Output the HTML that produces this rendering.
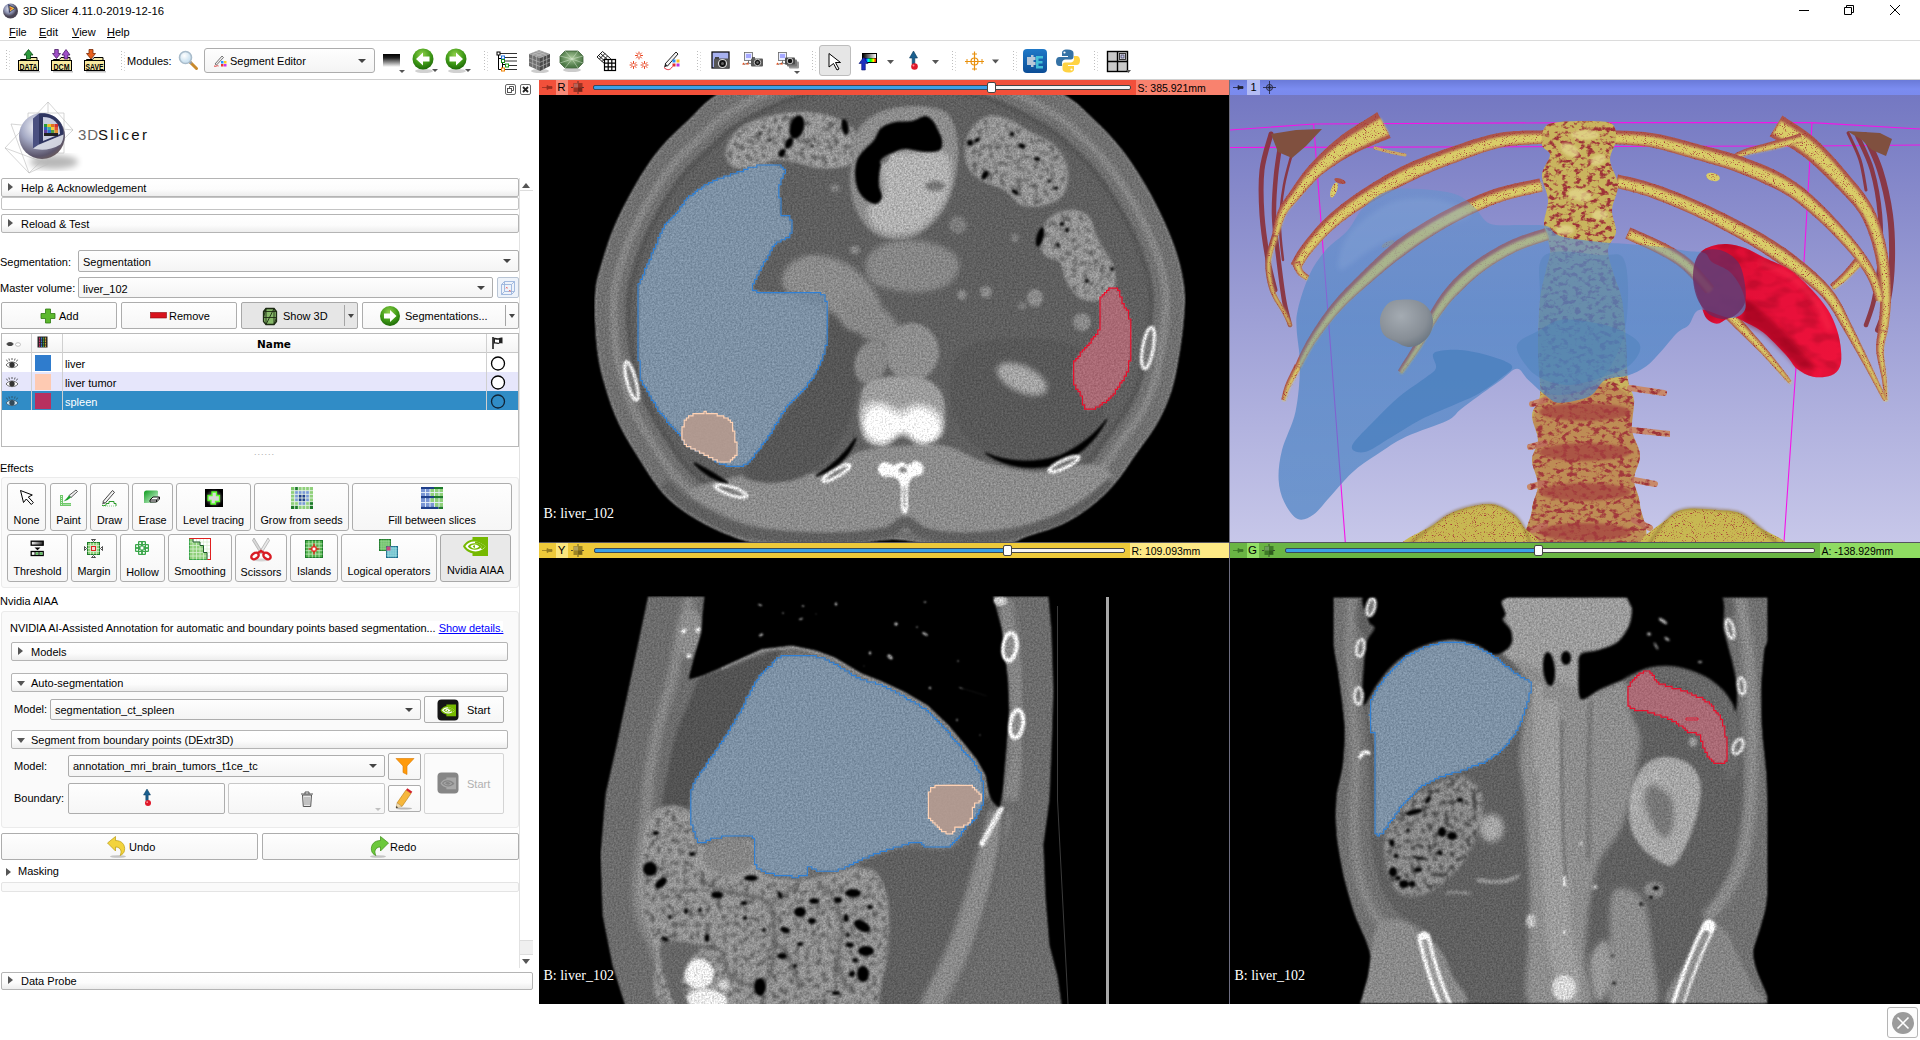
<!DOCTYPE html>
<html><head><meta charset="utf-8"><title>3D Slicer 4.11.0-2019-12-16</title>
<style>
*{box-sizing:border-box}
html,body{margin:0;padding:0;width:1920px;height:1040px;overflow:hidden;background:#fff}
body{font-family:"Liberation Sans",sans-serif;font-size:11px;color:#000;position:relative}
.a{position:absolute}
.t{position:absolute;white-space:nowrap;line-height:13px;height:13px}
.cb{position:absolute;border:1px solid #b4b4b4;border-radius:2px;background:linear-gradient(#fff 0%,#fcfcfc 60%,#ededed 100%)}
.cb span{position:absolute;left:19px;top:50%;margin-top:-7px;line-height:13px;white-space:nowrap}
.cb i{position:absolute;left:6px;top:50%;width:0;height:0;border-style:solid}
.cb i.r{margin-top:-5px;border-width:4px 0 4px 5px;border-color:transparent transparent transparent #555}
.cb i.d{margin-top:-2px;left:5px;border-width:5px 4px 0 4px;border-color:#555 transparent transparent transparent}
.btn{position:absolute;border:1px solid #adadad;border-radius:2px;background:linear-gradient(#fefefe,#f6f6f6)}
.btn.on{background:#e9e9e9;border-color:#a8a8a8}
.combo{position:absolute;border:1px solid #adadad;border-radius:2px;background:linear-gradient(#fefefe,#f4f4f4)}
.combo span{position:absolute;left:4px;top:50%;margin-top:-6px;line-height:13px;white-space:nowrap}
.combo i{position:absolute;right:7px;top:50%;margin-top:-2px;width:0;height:0;border-style:solid;border-width:4px 4px 0 4px;border-color:#444 transparent transparent transparent}
.lbl{position:absolute;white-space:nowrap;line-height:13px;text-align:center;font-size:10.8px}
#toolbar .t,.d1{margin-top:1px}
#left .cb span,#left .combo span,#toolbar .combo span{margin-top:-6px}
#left .combo span{margin-top:-5px}
.grip{position:absolute;width:3px;height:22px;background-image:radial-gradient(circle,#bdbdbd 0.6px,transparent 0.9px);background-size:3px 3px}
svg{position:absolute;overflow:hidden}
</style></head>
<body>
<!-- TITLEBAR -->
<div id="titlebar" class="a" style="left:0;top:0;width:1920px;height:22px">
<svg style="left:2px;top:2px" width="17" height="17" viewBox="0 0 17 17"><defs><radialGradient id="lg1" cx="40%" cy="35%"><stop offset="0" stop-color="#e8eaf2"/><stop offset=".6" stop-color="#8d93b3"/><stop offset="1" stop-color="#4a4555"/></radialGradient></defs><circle cx="8.5" cy="9" r="7.5" fill="url(#lg1)"/><path d="M6 2 L14 6 L7 11 Z" fill="#3a3f66"/><path d="M7.5 4 L12.5 6.2 L8 9.5 Z" fill="#f0c040"/><path d="M8 5.5 L10 6.2 L8.2 8 Z" fill="#d04030"/></svg>
<div class="t" style="left:23px;top:5px;font-size:11.3px">3D Slicer 4.11.0-2019-12-16</div>
<svg style="left:1795px;top:0" width="120" height="22" viewBox="0 0 120 22" fill="none" stroke="#000" stroke-width="1"><path d="M4 10.5h10"/><path d="M49.500 7.500h7v7h-7z M51.500 7.500v-2h7v7h-2"/><path d="M95 5l10 10M105 5l-10 10"/></svg>
</div>
<!-- MENUBAR -->
<div id="menubar" class="a" style="left:0;top:22px;width:1920px;height:18px">
<div class="t" style="left:9px;top:4px"><u>F</u>ile</div>
<div class="t" style="left:39px;top:4px"><u>E</u>dit</div>
<div class="t" style="left:72px;top:4px"><u>V</u>iew</div>
<div class="t" style="left:107px;top:4px"><u>H</u>elp</div>
</div>
<div class="a" style="left:0;top:40px;width:1920px;height:1px;background:#dcdcdc"></div>
<!-- TOOLBAR -->
<div id="toolbar" class="a" style="left:0;top:41px;width:1920px;height:38px">
<div class="grip" style="left:5px;top:8px"></div><div class="grip" style="left:8px;top:9px;opacity:.6"></div>
<!-- DATA -->
<svg style="left:17px;top:6px" width="24" height="26" viewBox="0 0 24 26"><path d="M3.500 12.500h6l1.500-2h9v3h-16.500z" fill="#f5e9a8" stroke="#000"/><rect x="1.500" y="13.500" width="20" height="10" fill="#f7e9a0" stroke="#000"/><rect x="3" y="24" width="20" height="1.500" fill="#999" opacity=".6"/><path d="M7 8l4.500-5.500 4.500 5.500h-2.500v4h-4v-4z" fill="#2c9a3c" stroke="#0a4a15" stroke-width=".8"/><text x="11.500" y="22.500" font-family="Liberation Sans,sans-serif" font-size="9.500" font-weight="bold" text-anchor="middle" textLength="18" lengthAdjust="spacingAndGlyphs">DATA</text></svg>
<!-- DCM -->
<svg style="left:50px;top:6px" width="24" height="26" viewBox="0 0 24 26"><path d="M3.500 12.500h6l1.500-2h9v3h-16.500z" fill="#f5e9a8" stroke="#000"/><rect x="1.500" y="13.500" width="20" height="10" fill="#f7e9a0" stroke="#000"/><rect x="3" y="24" width="20" height="1.500" fill="#999" opacity=".6"/><path d="M2.500 6.500l4 5 4-5h-2.200v-4h-3.600v4z" fill="#a050c8" stroke="#4a1a66" stroke-width=".8"/><path d="M12 8l4-5.500 4 5.500h-2.200v4h-3.600v-4z" fill="#a050c8" stroke="#4a1a66" stroke-width=".8"/><text x="11.500" y="22.500" font-family="Liberation Sans,sans-serif" font-size="9.500" font-weight="bold" text-anchor="middle" textLength="16" lengthAdjust="spacingAndGlyphs">DCM</text></svg>
<!-- SAVE -->
<svg style="left:83px;top:6px" width="24" height="26" viewBox="0 0 24 26"><path d="M3.500 12.500h6l1.500-2h9v3h-16.500z" fill="#f5e9a8" stroke="#000"/><rect x="1.500" y="13.500" width="20" height="10" fill="#f7e9a0" stroke="#000"/><rect x="3" y="24" width="20" height="1.500" fill="#999" opacity=".6"/><path d="M3.500 6.500l4.500 5.500 4.500-5.500h-2.500v-4h-4v4z" fill="#e8601c" stroke="#7a2a05" stroke-width=".8"/><text x="11.500" y="22.500" font-family="Liberation Sans,sans-serif" font-size="9.500" font-weight="bold" text-anchor="middle" textLength="18" lengthAdjust="spacingAndGlyphs">SAVE</text></svg>
<div class="grip" style="left:120px;top:9px"></div><div class="grip" style="left:123px;top:10px;opacity:.6"></div>
<div class="t" style="left:127px;top:13px">Modules:</div>
<!-- magnifier -->
<svg style="left:177px;top:8px" width="24" height="24" viewBox="0 0 24 24"><defs><radialGradient id="mg" cx="40%" cy="35%"><stop offset="0" stop-color="#fff"/><stop offset="1" stop-color="#cfe4f2"/></radialGradient></defs><path d="M12.500 12.500l7 7" stroke="#c98a2c" stroke-width="3" stroke-linecap="round"/><path d="M12 12l2.500 2.500" stroke="#999" stroke-width="2.500"/><circle cx="8.500" cy="8.500" r="6" fill="url(#mg)" stroke="#a9bccb" stroke-width="1.600"/></svg>
<!-- module combo -->
<div class="combo" style="left:204px;top:7px;width:171px;height:25px;border-radius:3px"><svg style="left:8px;top:5px" width="14" height="14" viewBox="0 0 14 14"><path d="M2 10l7-8 1.500 1.500-7 7.500z" fill="#eee" stroke="#555" stroke-width=".8"/><path d="M1 12c2 1 3-1 4.500 0" stroke="#d33" fill="none"/><rect x="8" y="7" width="2.500" height="2.500" fill="#29f"/><rect x="11" y="7" width="2.500" height="2.500" fill="#fc2"/><rect x="8" y="10" width="2.500" height="2.500" fill="#e33"/><rect x="11" y="10" width="2.500" height="2.500" fill="#c3e"/></svg><span style="left:25px">Segment Editor</span><i style="right:8px"></i></div>
<!-- gradient icon -->
<svg style="left:382px;top:12px" width="26" height="22" viewBox="0 0 26 22"><defs><linearGradient id="gg" x1="0" y1="0" x2="0" y2="1"><stop offset="0" stop-color="#000"/><stop offset=".3" stop-color="#222"/><stop offset="1" stop-color="#fff"/></linearGradient></defs><rect x="1" y="1" width="17" height="13" fill="url(#gg)"/><path d="M17 17h6l-3 3z" fill="#555"/></svg>
<!-- back / fwd -->
<svg style="left:411px;top:6px" width="70" height="28" viewBox="0 0 70 28"><defs><radialGradient id="gb" cx="45%" cy="30%" r="70%"><stop offset="0" stop-color="#8fd04a"/><stop offset=".6" stop-color="#3f9a17"/><stop offset="1" stop-color="#1f6a08"/></radialGradient></defs><ellipse cx="13" cy="24" rx="9" ry="2" fill="#000" opacity=".18"/><circle cx="12" cy="12" r="10.500" fill="url(#gb)"/><path d="M5 12l7-6.500v4h6.500v5h-6.500v4z" fill="#fff"/><path d="M21 22h6l-3 3z" fill="#555"/><ellipse cx="46" cy="24" rx="9" ry="2" fill="#000" opacity=".18"/><circle cx="45" cy="12" r="10.500" fill="url(#gb)"/><path d="M52 12l-7-6.500v4h-6.500v5h6.500v4z" fill="#fff"/><path d="M54 22h6l-3 3z" fill="#555"/></svg>
<div class="grip" style="left:483px;top:9px"></div><div class="grip" style="left:486px;top:10px;opacity:.6"></div>
<!-- tree -->
<svg style="left:496px;top:9px" width="22" height="22" viewBox="0 0 22 22" fill="none"><path d="M2.500 4v15.500h3M6.500 10v8M2.500 8.500h4M7 14.500h3" stroke="#000" stroke-width="1"/><path d="M4 3.500h17M9 7.500h12M9 11h12M13 15.500h8M9 19.500h12" stroke="#333" stroke-width="1"/><rect x="1" y="2" width="3" height="3" fill="#fff" stroke="#000"/><rect x="5.500" y="6" width="3" height="3" fill="#fff" stroke="#1a6fe0"/><rect x="5.500" y="9.500" width="3" height="3" fill="#fff" stroke="#1a8a1a"/><rect x="9.500" y="14" width="3" height="3" fill="#fff" stroke="#1a9a1a"/><rect x="5.500" y="18" width="3" height="3" fill="#fff" stroke="#f08000"/></svg>
<!-- cube -->
<svg style="left:527px;top:7px" width="26" height="26" viewBox="0 0 26 26"><defs><linearGradient id="cg1" x1="0" y1="0" x2="1" y2="1"><stop offset="0" stop-color="#999"/><stop offset="1" stop-color="#444"/></linearGradient></defs><ellipse cx="13" cy="23" rx="9" ry="2" fill="#000" opacity=".2"/><path d="M2 6l10-4 11 4-10 4z" fill="#9a9a9a"/><path d="M2 6l11 4v13l-11-5z" fill="#6e6e6e"/><path d="M13 10l10-4v12l-10 5z" fill="#4a4a4a"/><path d="M5.500 4.600l10.500 4M9 3.200l10.500 4M5.700 7.400v12.200M9.400 8.700v12.700M2 10l11 4.300M2 14l11 4.600M16.300 8.700v12.700M19.700 7.400v12.200M13 14.300l10-4.300M13 18.600l10-4.600M8.500 8.400l10-4M5 7l10-4" stroke="#c8c8c8" stroke-width=".7" opacity=".8"/></svg>
<!-- green model -->
<svg style="left:559px;top:8px" width="26" height="24" viewBox="0 0 26 24"><defs><radialGradient id="gm" cx="50%" cy="40%"><stop offset="0" stop-color="#a9c99a"/><stop offset="1" stop-color="#4f7a48"/></radialGradient></defs><ellipse cx="13" cy="21" rx="9" ry="2" fill="#000" opacity=".2"/><path d="M6 2h13l5 5v7l-5 5h-13l-5-5v-7z" fill="url(#gm)" stroke="#3d5f38" stroke-width=".8"/><path d="M6 2l7 8 6-8M1 7l12 3 11-3M1 14l12-4 11 4M6 19l7-9 6 9" stroke="#dfeeda" stroke-width=".6" fill="none" opacity=".8"/></svg>
<!-- transform grid -->
<svg style="left:595px;top:9px" width="22" height="22" viewBox="0 0 22 22" fill="none"><g stroke="#000" stroke-width=".9"><path d="M7.500 1.500l8 7-5.500 5.500-8-7z M5.500 3.500l8 7M3.500 5.500l8 7M4.500 9l5.500-5.500M7 11.500l5.500-5.500"/></g><rect x="9.500" y="9.500" width="11" height="11" fill="#fff" stroke="#000" stroke-width="1.200"/><path d="M13.200 9.500v11M16.800 9.500v11M9.500 13.200h11M9.500 16.800h11" stroke="#000" stroke-width="1.200"/></svg>
<!-- red stars -->
<svg style="left:628px;top:9px" width="22" height="22" viewBox="0 0 22 22"><g stroke="#e8401c" stroke-width="1" stroke-linecap="round"><g id="st"><path d="M11 2v7M7.500 5.500h7M8.500 3l5 5M13.500 3l-5 5"/></g><use href="#st" x="-5.500" y="9.500"/><use href="#st" x="5.500" y="9.500"/></g><circle cx="11" cy="5.500" r="1.200" fill="#fff"/><circle cx="5.500" cy="15" r="1.200" fill="#fff"/><circle cx="16.500" cy="15" r="1.200" fill="#fff"/></svg>
<!-- seg editor pen -->
<svg style="left:662px;top:9px" width="22" height="22" viewBox="0 0 22 22"><path d="M3 14l11-12 2 2-10.500 12z" fill="#f4f4f4" stroke="#222" stroke-width="1"/><path d="M3 14l2.500 2-3.500 1.500z" fill="#222"/><path d="M2 17.500c3 3 6 3 8.500-1" stroke="#e02030" fill="none" stroke-width="1"/><rect x="10.500" y="9.500" width="3" height="3" fill="#2a8cf0"/><rect x="14.500" y="9.500" width="3" height="3" fill="#f8c020"/><rect x="10.500" y="13.500" width="3" height="3" fill="#e03030"/><rect x="14.500" y="13.500" width="3" height="3" fill="#c030e0"/></svg>
<div class="grip" style="left:696px;top:9px"></div><div class="grip" style="left:699px;top:10px;opacity:.6"></div>
<!-- camera 1 -->
<svg style="left:711px;top:10px" width="20" height="20" viewBox="0 0 20 20"><rect x="1" y="1" width="17" height="16" fill="#a8b2f0" stroke="#000" stroke-width="1.200"/><rect x="3" y="7.500" width="15" height="9.500" rx="1" fill="#555"/><rect x="4" y="6" width="4" height="2" fill="#444"/><circle cx="11.500" cy="12.500" r="4" fill="#111" stroke="#ddd" stroke-width="1.200"/><circle cx="11.500" cy="12.500" r="1.500" fill="#666"/></svg>
<!-- camera 2 -->
<svg style="left:741px;top:10px" width="24" height="20" viewBox="0 0 24 20"><rect x="3.500" y="1.500" width="8" height="8" fill="#e8ecff" stroke="#666" stroke-width=".8"/><path d="M5 4h5M5 6h5" stroke="#44f" stroke-width=".8"/><path d="M7.500 9.500v3M7.500 12l-5 1.500M7.500 12l5 1.500" stroke="#555" stroke-width=".8" fill="none"/><path d="M1 13.500h3l-1.500-2zM5 13.500h3l-1.500-2z" fill="#e8501c"/><rect x="10" y="7.500" width="12" height="8" rx="1" fill="#5a5a5a"/><rect x="11" y="6.200" width="3" height="1.500" fill="#444"/><circle cx="16.500" cy="11.500" r="3.200" fill="#111" stroke="#ccc" stroke-width="1"/><circle cx="16.500" cy="11.500" r="1.200" fill="#777"/></svg>
<!-- camera 3 -->
<svg style="left:775px;top:10px" width="28" height="24" viewBox="0 0 28 24"><rect x="3.500" y="1.500" width="8" height="8" fill="#e8ecff" stroke="#666" stroke-width=".8"/><path d="M5 4h5M5 6h5" stroke="#44f" stroke-width=".8"/><path d="M7.500 9.500v3M7.500 12l-5 1.500M7.500 12l5 1.500" stroke="#555" stroke-width=".8" fill="none"/><path d="M1 13.500h3l-1.500-2zM5 13.500h3l-1.500-2z" fill="#e8501c"/><rect x="14" y="10.500" width="10" height="7" rx="1" fill="#999"/><rect x="12" y="8.500" width="10" height="7" rx="1" fill="#777"/><rect x="10" y="6.500" width="10" height="7" rx="1" fill="#4a4a4a"/><circle cx="15" cy="10" r="2.800" fill="#111" stroke="#ccc" stroke-width="1"/><path d="M19 20h6l-3 3z" fill="#555"/></svg>
<div class="grip" style="left:811px;top:9px"></div><div class="grip" style="left:814px;top:10px;opacity:.6"></div>
<!-- pointer btn -->
<div class="btn on" style="left:819px;top:4px;width:32px;height:31px;border-radius:3px;background:#e6e6e6;border-color:#bdbdbd"><svg style="left:7px;top:6px" width="18" height="20" viewBox="0 0 18 20"><path d="M2 1.500l11.500 9h-5l3.500 6.500-2 1-3.500-6.500-4.500 3.500z" fill="#fff" stroke="#000" stroke-width="1" stroke-linejoin="round"/></svg></div>
<!-- window level -->
<svg style="left:858px;top:10px" width="44" height="22" viewBox="0 0 44 22"><defs><linearGradient id="rb" x1="0" x2="1"><stop offset="0" stop-color="#f0f"/><stop offset=".2" stop-color="#00f"/><stop offset=".4" stop-color="#0ff"/><stop offset=".6" stop-color="#0f0"/><stop offset=".8" stop-color="#ff0"/><stop offset="1" stop-color="#f00"/></linearGradient><linearGradient id="bw" x1="0" x2="1"><stop offset="0" stop-color="#000"/><stop offset="1" stop-color="#fff"/></linearGradient></defs><rect x="4" y="2" width="15" height="10" fill="#000"/><rect x="5" y="3" width="13" height="4" fill="url(#bw)"/><rect x="5" y="7.500" width="13" height="3.500" fill="url(#rb)"/><path d="M5.500 6.500l4.500 6h-2.700v6.500h-3.600v-6.500h-2.700z" fill="#1c2fc0" stroke="#0a1470" stroke-width=".6"/><path d="M29 9h7l-3.500 4z" fill="#555"/></svg>
<!-- fiducial -->
<svg style="left:906px;top:9px" width="40" height="24" viewBox="0 0 40 24"><path d="M7.500 1l4 7h-2.700v6h-2.600v-6h-2.700z" fill="#1a5f8f" stroke="#0a3a5a" stroke-width=".6"/><circle cx="8.500" cy="16.500" r="3.300" fill="#e0182a"/><circle cx="7.500" cy="15.500" r="1" fill="#ff8a90"/><path d="M26 10h7l-3.500 4z" fill="#555"/></svg>
<div class="grip" style="left:951px;top:9px"></div><div class="grip" style="left:954px;top:10px;opacity:.6"></div>
<!-- crosshair -->
<svg style="left:963px;top:9px" width="44" height="24" viewBox="0 0 44 24" fill="none"><path d="M11.500 1.500v19M2 11.500h19" stroke="#e8900c" stroke-width="1.200"/><circle cx="11.500" cy="11.500" r="3.500" stroke="#e8900c" stroke-width="1.200"/><path d="M9 4h5M9 19h5M4 9v5M19 9v5" stroke="#e8900c" stroke-width="1"/><path d="M29 9.500h7l-3.500 4z" fill="#555"/></svg>
<div class="grip" style="left:1012px;top:9px"></div><div class="grip" style="left:1015px;top:10px;opacity:.6"></div>
<!-- ext manager -->
<svg style="left:1022px;top:7px" width="26" height="26" viewBox="0 0 26 26"><defs><linearGradient id="em" x1="0" y1="0" x2="0" y2="1"><stop offset="0" stop-color="#1f79c8"/><stop offset="1" stop-color="#0c4d96"/></linearGradient></defs><rect x="1" y="1" width="24" height="24" rx="4" fill="url(#em)"/><path d="M5 9h4v-2h2.500v2h2v3h-2v2h2v3h-2v2h-2.500v-2h-4z" fill="#b8c8d8"/><path d="M14 8h7v2.500h-4.500v2.500h4v2.500h-4v2.500h4.500v2.500h-7z" fill="#43c0d8"/></svg>
<!-- python -->
<svg style="left:1055px;top:7px" width="26" height="26" viewBox="0 0 26 26"><path d="M12.500 1.500c-5 0-5.500 2-5.500 3.500v3h6v1h-8.500c-2.500 0-3.500 2-3.500 4.500s1 4.500 3.500 4.500h2.500v-3c0-2 1.500-3.500 3.500-3.500h5.500c1.500 0 2.500-1 2.500-2.500v-4c0-2-2-3.500-6-3.500z" fill="#3572a5"/><circle cx="9.500" cy="4.500" r="1.100" fill="#fff"/><path d="M13.500 24.500c5 0 5.500-2 5.500-3.500v-3h-6v-1h8.500c2.500 0 3.500-2 3.500-4.500s-1-4.500-3.500-4.500h-2.500v3c0 2-1.500 3.500-3.500 3.500h-5.500c-1.500 0-2.500 1-2.500 2.500v4c0 2 2 3.500 6 3.500z" fill="#ffd343"/><circle cx="16.500" cy="21.500" r="1.100" fill="#fff"/></svg>
<div class="grip" style="left:1093px;top:9px"></div><div class="grip" style="left:1096px;top:10px;opacity:.6"></div>
<!-- layout -->
<svg style="left:1106px;top:9px" width="26" height="24" viewBox="0 0 26 24"><rect x="1.500" y="1.500" width="20" height="20" fill="#c9c9c9" stroke="#000" stroke-width="1.400"/><path d="M11.500 1.500v20M1.500 11.500h20" stroke="#000" stroke-width="1.400"/><rect x="13.500" y="3.500" width="6" height="6" fill="#dcdcf4" stroke="#222" stroke-width=".9"/><rect x="15" y="5" width="3" height="3" fill="#c0c0f0" stroke="#222" stroke-width=".6"/><path d="M20 20h5l-2.500 3z" fill="#555"/></svg>
</div>
<div class="a" style="left:0;top:79px;width:1920px;height:1px;background:#d0d0d0"></div>
<!-- LEFTPANEL -->
<div id="left" class="a" style="left:0;top:80px;width:539px;height:960px">
<svg style="left:0;top:0" width="0" height="0"><defs>
<g id="nv"><rect x="9.500" y="0" width="15.500" height="19" fill="#76b900"/><path d="M0 9.200c2.500-4.500 7-7 12-6.700v13.800c-5 .2-9.500-2.300-12-7.100z" fill="#76b900"/><path d="M2.300 9.300c2-3.200 5.500-5 9.700-4.800 4.500.3 8 2.300 10.500 5.300-2.300 2.800-5.500 4.600-10 4.600-4.200 0-8-1.800-10.200-5.100z" fill="#fff"/><path d="M4.800 9.400c1.500-2.200 4-3.300 7.200-3.100 3 .2 5 1.500 7 3.400-2 2-4.200 3-7 3-3 0-5.500-1.200-7.200-3.300z" fill="#76b900"/><path d="M7.300 9.300c1-1.300 2.700-2 4.700-1.900 1.800.2 3 .9 4.200 2.200-1.200 1.300-2.500 2-4.200 2-2 0-3.600-.8-4.700-2.300z" fill="#fff"/><path d="M9.800 9.300c.6-.7 1.400-1 2.200-1v2.700c-.9-.1-1.700-.7-2.200-1.700z" fill="#76b900"/><path d="M12 4.500v1.800c3 .2 5 1.500 7 3.400l-1.500 1.400 1.500 1.500 3.500-2.800c-2.500-3-6-5-10.500-5.300z" fill="#76b900"/></g>
<g id="nvg"><rect x="9.500" y="0" width="15.500" height="19" fill="#a8a8a8"/><path d="M0 9.200c2.500-4.500 7-7 12-6.700v13.800c-5 .2-9.500-2.300-12-7.100z" fill="#a8a8a8"/><path d="M2.300 9.300c2-3.200 5.500-5 9.700-4.800 4.500.3 8 2.300 10.500 5.300-2.300 2.800-5.500 4.600-10 4.600-4.200 0-8-1.800-10.200-5.100z" fill="#868686"/><path d="M4.800 9.400c1.500-2.200 4-3.300 7.200-3.100 3 .2 5 1.500 7 3.400-2 2-4.200 3-7 3-3 0-5.500-1.200-7.200-3.300z" fill="#a8a8a8"/><path d="M7.300 9.300c1-1.300 2.700-2 4.700-1.900 1.800.2 3 .9 4.200 2.200-1.200 1.300-2.500 2-4.200 2-2 0-3.600-.8-4.700-2.300z" fill="#868686"/></g>
</defs></svg>
<!-- coordinates relative to left panel (top:80) -->
<!-- dock buttons -->
<svg style="left:505px;top:4px" width="28" height="12" viewBox="0 0 28 12" fill="none" stroke="#444"><rect x=".5" y=".5" width="10" height="10" rx="1.500" stroke="#666"/><rect x="2.500" y="4.500" width="4" height="4" stroke-width=".9"/><path d="M4.500 4.500v-2h4v4h-2" stroke-width=".9"/><rect x="15.500" y=".5" width="10" height="10" rx="1.500" stroke="#666"/><path d="M18 3l5 5M23 3l-5 5" stroke="#222" stroke-width="1.800"/></svg>
<!-- logo -->
<svg style="left:2px;top:18px" width="160" height="80" viewBox="0 0 160 80"><defs><radialGradient id="sp" cx="38%" cy="30%" r="75%"><stop offset="0" stop-color="#f4f5fa"/><stop offset=".45" stop-color="#a4a9c4"/><stop offset=".85" stop-color="#5c566c"/><stop offset="1" stop-color="#6a5a5a"/></radialGradient><filter id="bl3"><feGaussianBlur stdDeviation="3"/></filter></defs>
<ellipse cx="52" cy="64" rx="24" ry="7" fill="#000" opacity=".28" filter="url(#bl3)"/>
<g fill="none" stroke="#bbb" stroke-width=".6"><path d="M3 50l43-46v62l-19 9z"/><path d="M9 26l62 6-44 43z"/><path d="M26 15h36v40h-36z"/><path d="M46 4l25 28M3 50l43 16"/></g>
<circle cx="40" cy="38" r="23" fill="url(#sp)"/>
<path d="M37 15.500c14-2 25 8 24.500 21l-25 11z" fill="#2f3560"/>
<path d="M41 19c10 0 17 6 17 17l-17 7z" fill="#c9cde0"/>
<path d="M37 15.500l-6 5v30l6-4z" fill="#4a5080"/>
<g><rect x="42" y="26" width="14" height="12" fill="#fff"/><rect x="42" y="26" width="3.500" height="3" fill="#2a9a3a"/><rect x="45.500" y="26" width="3.500" height="3" fill="#f0c020"/><rect x="49" y="26" width="3.500" height="3" fill="#e07020"/><rect x="52.500" y="26" width="3.500" height="3" fill="#d03030"/><rect x="42" y="29" width="3.500" height="3" fill="#2a60c0"/><rect x="45.500" y="29" width="3.500" height="3" fill="#40b0a0"/><rect x="49" y="29" width="3.500" height="3" fill="#f0d040"/><rect x="52.500" y="29" width="3.500" height="3" fill="#e05030"/><rect x="42" y="32" width="3.500" height="3" fill="#6040a0"/><rect x="45.500" y="32" width="3.500" height="3" fill="#3070d0"/><rect x="49" y="32" width="3.500" height="3" fill="#50a040"/><rect x="52.500" y="32" width="3.500" height="3" fill="#e09030"/><rect x="42" y="35" width="14" height="3" fill="#222"/></g>
<path d="M31 50.500l6-4 24.500-10c0 4-1 7-3 10-10 6-20 6-27.500 4z" fill="#dcdfe8" opacity=".9"/>
<text x="76" y="42" font-family="Liberation Sans,sans-serif" font-size="15" fill="#666" letter-spacing="1">3D</text>
<text x="96" y="42" font-family="Liberation Sans,sans-serif" font-size="15" fill="#111" letter-spacing="2.300">Slicer</text>
</svg>
<!-- collapsibles -->
<div class="cb" style="left:1px;top:98px;width:518px;height:19px"><i class="r"></i><span>Help &amp; Acknowledgement</span></div>
<div class="cb" style="left:1px;top:117px;width:518px;height:13px;background:#fff;border-color:#c4c4c4"></div>
<div class="cb" style="left:1px;top:134px;width:518px;height:19px"><i class="r"></i><span>Reload &amp; Test</span></div>
<!-- scrollbar -->
<div class="a" style="left:519px;top:98px;width:1px;height:790px;background:#e2e2e2"></div>
<div class="a" style="left:520px;top:98px;width:13px;height:790px;background:#fff"></div>
<div class="a" style="left:522px;top:103px;width:0;height:0;border-style:solid;border-width:0 4px 5px 4px;border-color:transparent transparent #555 transparent"></div>
<div class="a" style="left:520px;top:110px;width:13px;height:1px;background:#ddd"></div>
<div class="a" style="left:520px;top:860px;width:13px;height:15px;background:#f0f0f0;border-top:1px solid #ddd;border-bottom:1px solid #ddd"></div>
<div class="a" style="left:522px;top:879px;width:0;height:0;border-style:solid;border-width:5px 4px 0 4px;border-color:#555 transparent transparent transparent"></div>
<!-- Segmentation rows -->
<div class="t d1" style="left:0;top:175px">Segmentation:</div>
<div class="combo" style="left:78px;top:170px;width:441px;height:22px"><span>Segmentation</span><i></i></div>
<div class="t d1" style="left:0;top:201px">Master volume:</div>
<div class="combo" style="left:78px;top:197px;width:415px;height:21px"><span>liver_102</span><i></i></div>
<div class="btn" style="left:497px;top:197px;width:22px;height:21px;background:#eef3fa;border-color:#b8c4d4"><svg style="left:2px;top:2px" width="16" height="16" viewBox="0 0 16 16" fill="none"><path d="M4.500 1.500h10v10h-10zM1.500 4.500h10v10h-10zM1.500 4.500l3-3M11.500 4.500l3-3M11.500 14.500l3-3M1.500 14.500l3-3" stroke="#9ab4dc" stroke-width=".9"/><path d="M6 7l1.500 1.500M7.500 7l-1.500 1.500M9 10l1.500 1.500M10.500 10l-1.500 1.500" stroke="#e66" stroke-width=".8"/></svg></div>
<!-- buttons row -->
<div class="btn" style="left:1px;top:222px;width:116px;height:27px"><svg style="left:38px;top:5px" width="16" height="16" viewBox="0 0 16 16"><path d="M5.500 1h5v4.500h4.500v5h-4.500v4.500h-5v-4.500h-4.500v-5h4.500z" fill="#5cb82e" stroke="#2f7a12" stroke-width=".8"/></svg><div class="t" style="left:57px;top:7px">Add</div></div>
<div class="btn" style="left:121px;top:222px;width:116px;height:27px"><svg style="left:28px;top:9px" width="18" height="8" viewBox="0 0 18 8"><rect x=".5" y=".5" width="16" height="5.500" fill="#d8121c" stroke="#8a0a10" stroke-width=".6"/></svg><div class="t" style="left:47px;top:7px">Remove</div></div>
<div class="btn on" style="left:241px;top:222px;width:117px;height:27px;background:#e6e6e6"><svg style="left:20px;top:4px" width="16" height="19" viewBox="0 0 16 19"><path d="M4 1.500h8l2.500 3v10l-2.500 3h-8l-2.500-3v-10z" fill="#86b868" stroke="#1d2a14" stroke-width="1.300"/><path d="M4 1.500l-2.500 9h13l-2.500 7M12 1.500l-8 16M4 1.500v16M12 1.500v16M1.500 4.500h13" stroke="#1d2a14" stroke-width=".9" fill="none"/></svg><div class="t" style="left:41px;top:7px">Show 3D</div><div class="a" style="left:102px;top:2px;width:1px;height:21px;background:#a5a5a5"></div><div class="a" style="left:106px;top:11px;width:0;height:0;border-style:solid;border-width:4px 3.500px 0 3.500px;border-color:#444 transparent transparent transparent"></div></div>
<div class="btn" style="left:362px;top:222px;width:157px;height:27px"><svg style="left:16px;top:2px" width="22" height="22" viewBox="0 0 22 22"><circle cx="11" cy="11" r="10" fill="url(#gb)"/><path d="M17.500 11l-6.500-6v3.500h-6v5h6v3.500z" fill="#fff"/></svg><div class="t" style="left:42px;top:7px">Segmentations...</div><div class="a" style="left:142px;top:2px;width:1px;height:21px;background:#a5a5a5"></div><div class="a" style="left:146px;top:11px;width:0;height:0;border-style:solid;border-width:4px 3.500px 0 3.500px;border-color:#444 transparent transparent transparent"></div></div>
<!-- table -->
<div class="a" style="left:1px;top:253px;width:518px;height:114px;border:1px solid #b9b9b9;background:#fff"></div>
<div class="a" style="left:2px;top:254px;width:516px;height:19px;background:linear-gradient(#fff,#f4f4f4);border-bottom:1px solid #c8c8c8"></div>
<div class="a" style="left:2px;top:292px;width:516px;height:19px;background:#e6e6fb"></div>
<div class="a" style="left:2px;top:311px;width:516px;height:19px;background:#308cc6"></div>
<div class="a" style="left:31px;top:254px;width:1px;height:76px;background:#d0d0d0"></div>
<div class="a" style="left:62px;top:254px;width:1px;height:76px;background:#d0d0d0"></div>
<div class="a" style="left:486px;top:254px;width:1px;height:76px;background:#d0d0d0"></div>
<div class="t" style="left:62px;top:258px;width:424px;text-align:center;font-weight:bold;font-family:'DejaVu Sans','Liberation Sans',sans-serif;font-size:10.500px">Name</div>
<svg style="left:6px;top:260px" width="20" height="8" viewBox="0 0 20 8"><ellipse cx="4" cy="4" rx="3" ry="2" fill="#444"/><path d="M0 4h8" stroke="#444" stroke-width=".6"/><ellipse cx="12" cy="4.500" rx="2.500" ry="1.800" fill="#fff" stroke="#aaa" stroke-width=".7"/></svg>
<svg style="left:37px;top:256px" width="12" height="13" viewBox="0 0 12 13"><rect x=".5" y=".5" width="10" height="11" fill="#222"/><g stroke-width="1.200"><path d="M2.500 1.500v9.500" stroke="#c03060"/><path d="M4.500 1.500v9.500" stroke="#3a70d0"/><path d="M6.500 1.500v9.500" stroke="#40a040"/><path d="M8.500 1.500v9.500" stroke="#d0a030"/></g><path d="M1 4h9M1 6.500h9M1 9h9" stroke="#222" stroke-width=".7"/></svg>
<svg style="left:491px;top:256px" width="14" height="14" viewBox="0 0 14 14"><path d="M2 1v12" stroke="#000" stroke-width="1.400"/><path d="M2.500 2c2-1.200 3.500 1 5.500 0s2.500-.5 3.500-.5v6c-1.500 0-2-.5-3.500.3s-3.500-1-5.500.2z" fill="#222"/><path d="M4 3.500c1.500-.5 2.500.8 4 .2v3c-1.500.5-2.500-.8-4-.2z" fill="#fff"/></svg>
<!-- rows -->
<div class="a" style="left:35px;top:275px;width:16px;height:16px;background:#2f7ccd"></div>
<div class="a" style="left:35px;top:294px;width:16px;height:16px;background:#fecab2"></div>
<div class="a" style="left:35px;top:313px;width:16px;height:16px;background:#b7305f"></div>
<div class="t d1" style="left:65px;top:277px">liver</div>
<div class="t d1" style="left:65px;top:296px">liver tumor</div>
<div class="t d1" style="left:65px;top:315px;color:#fff">spleen</div>
<svg style="left:5px;top:274px" width="520" height="58" viewBox="0 0 520 58"><defs><g id="eye"><path d="M1 7c3-4 9-4 12 0c-3 3.500-9 3.500-12 0z" fill="#fff" stroke="#333" stroke-width=".7"/><circle cx="7" cy="6.800" r="2.700" fill="#333"/><path d="M2.500 3.500l-1-1.800M4.500 2.500l-.6-2M7 2v-2M9.500 2.500l.6-2M11.500 3.500l1-1.800" stroke="#333" stroke-width=".8"/></g></defs><use href="#eye" x="0" y="4"/><use href="#eye" x="0" y="23"/><use href="#eye" x="0" y="42" opacity=".75"/><circle cx="493" cy="9.500" r="6.500" fill="#fff" stroke="#000" stroke-width="1.300"/><circle cx="493" cy="28.500" r="6.500" fill="#fff" stroke="#000" stroke-width="1.300"/><circle cx="493" cy="47.500" r="6.500" fill="none" stroke="#123" stroke-width="1.300"/></svg>
<div class="t" style="left:254px;top:366px;color:#aaa;font-size:9px;letter-spacing:1px">......</div>
<!-- Effects -->
<div class="t d1" style="left:0;top:381px">Effects</div>
<div class="a" style="left:1px;top:397px;width:518px;height:111px;background:#fafafa;border:1px solid #ebebeb;border-radius:3px"></div>
<div class="btn" style="left:7px;top:403px;width:39px;height:48px;border-radius:3px"><svg style="left:10px;top:5px" width="18" height="18" viewBox="0 0 18 18"><path d="M2.500 1.500l3 12 2.800-3.500 5 5.500 2-2-5-5.500 4-2z" fill="#fff" stroke="#000" stroke-width="1" stroke-linejoin="round"/></svg><div class="lbl" style="left:0;width:37px;top:30px">None</div></div>
<div class="btn" style="left:50px;top:403px;width:37px;height:48px;border-radius:3px"><svg style="left:8px;top:5px" width="20" height="18" viewBox="0 0 20 18"><path d="M1 6h3v8h8v3h-11z" fill="#6fc86a"/><path d="M2 7.500h1M2 9.500h1M2 11.500h1M2 13.500h1M2 15.500h1M4.500 15.500h1M6.500 15.500h1M8.500 15.500h1M10.500 15.500h1" stroke="#dff5dd" stroke-width="1"/><path d="M10 6.500l7-5.500 1.500 1.500-6.500 6z" fill="#f0f0f0" stroke="#333" stroke-width=".8"/><path d="M10 6.500l2 2-3.500 2.500-4 1.500 3-3z" fill="#18a028"/></svg><div class="lbl" style="left:0;width:35px;top:30px">Paint</div></div>
<div class="btn" style="left:90px;top:403px;width:39px;height:48px;border-radius:3px"><svg style="left:8px;top:5px" width="20" height="18" viewBox="0 0 20 18"><path d="M4 12.500l9.500-11 2 1.800-9.500 11z" fill="#f4f4f4" stroke="#333" stroke-width=".9"/><path d="M4 12.500l-1 3 3-1.200z" fill="#555"/><path d="M3 16.500h4v-2h3v-2h5v2h2v2.500" fill="none" stroke="#2a9a2a" stroke-width="1"/><path d="M4 17h14" stroke="#8ad08a" stroke-width="1.200" stroke-dasharray="1 1"/></svg><div class="lbl" style="left:0;width:37px;top:30px">Draw</div></div>
<div class="btn" style="left:132px;top:403px;width:41px;height:48px;border-radius:3px"><svg style="left:10px;top:6px" width="18" height="16" viewBox="0 0 18 16"><defs><linearGradient id="er" x1="0" y1="0" x2="1" y2="1"><stop offset="0" stop-color="#0a9a1a"/><stop offset=".55" stop-color="#7fd08a"/><stop offset="1" stop-color="#fff"/></linearGradient></defs><path d="M1 3c0-1.500 1-2.500 2.500-2.500h10c1 0 1.500.5 1.500 1.500v11h-14z" fill="url(#er)"/><path d="M7 10l3-3h6.500l-3 3zM7 10v2h6.500v-2M13.500 12l3-3v-2" fill="#fff" stroke="#111" stroke-width="1" stroke-linejoin="round"/></svg><div class="lbl" style="left:0;width:39px;top:30px">Erase</div></div>
<div class="btn" style="left:176px;top:403px;width:75px;height:48px;border-radius:3px"><svg style="left:28px;top:5px" width="18" height="18" viewBox="0 0 18 18"><defs><radialGradient id="lt"><stop offset="0" stop-color="#bbb"/><stop offset=".5" stop-color="#555"/><stop offset="1" stop-color="#000"/></radialGradient></defs><rect width="18" height="18" fill="url(#lt)"/><path d="M7 3h4.500v3.500h3v6h-4v2.500h-4.500v-3.500h-3v-5h4z" fill="#d8d8d8" stroke="#5aff2a" stroke-width="1.300"/></svg><div class="lbl" style="left:0;width:73px;top:30px">Level tracing</div></div>
<div class="btn" style="left:254px;top:403px;width:95px;height:48px;border-radius:3px"><svg style="left:36px;top:3px" width="22" height="22" viewBox="0 0 22 22"><rect width="22" height="22" fill="#8fd07a"/><rect x="0" y="0" width="3.700" height="3.700" fill="#7fc86a"/><rect x="3.700" y="0" width="3.600" height="3.700" fill="#1d7a2a"/><rect x="18.300" y="14.600" width="3.700" height="3.700" fill="#1d7a2a"/><rect x="0" y="18.300" width="7.300" height="3.700" fill="#1d7a2a"/><rect x="18.300" y="18.300" width="3.700" height="3.700" fill="#1d7a2a"/><path d="M3.700 3.700h14.600v11h-3.700v3.600h-7.300v-3.600h-3.600z" fill="#7a9ad8"/><path d="M7.300 7.300h7.300v3.700h-3.600v3.600h-3.700z" fill="#1f3f8a"/><rect x="11" y="11" width="3.600" height="3.600" fill="#1f3f8a"/><path d="M3.67 0v22M7.33 0v22M11.0 0v22M14.67 0v22M18.33 0v22M0 3.67h22M0 7.33h22M0 11.0h22M0 14.67h22M0 18.33h22" stroke="#e8f4e8" stroke-width="0.9" fill="none"/></svg><div class="lbl" style="left:0;width:93px;top:30px">Grow from seeds</div></div>
<div class="btn" style="left:352px;top:403px;width:160px;height:48px;border-radius:3px"><svg style="left:68px;top:3px" width="22" height="22" viewBox="0 0 22 22"><rect width="22" height="22" fill="#7a96d4"/><rect width="22" height="2" fill="#1f3f8a"/><rect y="9" width="22" height="2.200" fill="#1f3f8a"/><rect y="19.800" width="22" height="2.200" fill="#1f3f8a"/><path d="M13 0h9v2h-9zM9 2h13v7h-13zM13 9h9v2.200h-9zM9 11.200h4.500v4h4v4.600h4.500v2.200h-4.500v-2.200h-4v-4.600h-4.500z" fill="#8fd07a"/><path d="M13 0h9v2h-9zM13 9h9v2.200h-9zM18 19.800h4v2.200h-4z" fill="#1d7a2a"/><path d="M13.500 11.200h8.500v8.600h-4.500v-4.600h-4z" fill="#8fd07a"/><path d="M4.500 2v7M9 2v7M13.500 2v7M18 2v7M0 5.500h22M4.500 11v9M9 11v9M13.500 11v9M18 11v9M0 15.500h22" stroke="#e8f0f8" stroke-width=".9"/></svg><div class="lbl" style="left:0;width:158px;top:30px">Fill between slices</div></div>
<div class="btn" style="left:7px;top:454px;width:61px;height:48px;border-radius:3px"><svg style="left:22px;top:5px" width="16" height="18" viewBox="0 0 16 18"><defs><linearGradient id="th" x1="0" x2="1"><stop offset="0" stop-color="#fff"/><stop offset="1" stop-color="#222"/></linearGradient></defs><rect x="1.200" y="1.200" width="12" height="4" fill="url(#th)" stroke="#000" stroke-width="1.300"/><path d="M4.500 7.500h6l-3 2.800z" fill="#000"/><rect x="1.200" y="11.500" width="12" height="4" fill="#fff" stroke="#000" stroke-width="1.300"/><rect x="5.500" y="12.300" width="3" height="2.500" fill="#5cb85c"/><rect x="9.500" y="12.300" width="3" height="2.500" fill="#5cb85c"/><path d="M5 11.500v4M9 11.500v4" stroke="#000" stroke-width=".9"/></svg><div class="lbl" style="left:0;width:59px;top:30px">Threshold</div></div>
<div class="btn" style="left:71px;top:454px;width:46px;height:48px;border-radius:3px"><svg style="left:12px;top:4px" width="20" height="20" viewBox="0 0 20 20"><rect x="3.500" y="3.500" width="12" height="12" fill="#8fd07a" stroke="#1d7a2a" stroke-width="1"/><path d="M6.5 3.5v12M9.5 3.5v12M12.5 3.5v12M3.5 6.5h12M3.5 9.5h12M3.5 12.5h12" stroke="#d8f0d0" stroke-width="0.8" fill="none"/><rect x="7.500" y="7.500" width="4" height="4" fill="#f4d8d0" stroke="#e02020" stroke-width="1"/><path d="M7.500 .5l2 2 2-2zM7.500 18.500l2-2 2 2zM.5 7.500l2 2-2 2zM18.500 7.500l-2 2 2 2z" fill="#fff" stroke="#222" stroke-width=".8"/></svg><div class="lbl" style="left:0;width:44px;top:30px">Margin</div></div>
<div class="btn" style="left:120px;top:454px;width:45px;height:48px;border-radius:3px"><svg style="left:12px;top:5px" width="18" height="18" viewBox="0 0 18 18"><g fill="#3aa64a"><path d="M5 1h8v3h3v8h-3v3h-8v-3h-3v-8h3z"/></g><g fill="#fff"><rect x="7.600" y="6.600" width="2.800" height="2.800"/><rect x="6.300" y="2.200" width="1.800" height="1.800"/><rect x="9.900" y="2.200" width="1.800" height="1.800"/><rect x="3.200" y="5.300" width="1.800" height="1.800"/><rect x="13" y="5.300" width="1.800" height="1.800"/><rect x="3.200" y="8.900" width="1.800" height="1.800"/><rect x="13" y="8.900" width="1.800" height="1.800"/><rect x="6.300" y="12" width="1.800" height="1.800"/><rect x="9.900" y="12" width="1.800" height="1.800"/><rect x="6.300" y="5" width="1.200" height="1.200"/><rect x="10.500" y="5" width="1.200" height="1.200"/><rect x="6.300" y="9.800" width="1.200" height="1.200"/><rect x="10.500" y="9.800" width="1.200" height="1.200"/></g><path d="M5 1l-3 3M13 1l3 3M2 12l3 3M16 12l-3 3" stroke="#fff" stroke-width="1.600"/></svg><div class="lbl" style="left:0;width:43px;top:31px">Hollow</div></div>
<div class="btn" style="left:168px;top:454px;width:64px;height:48px;border-radius:3px"><svg style="left:20px;top:3px" width="22" height="22" viewBox="0 0 22 22"><rect x=".5" y=".5" width="21" height="21" fill="#fff" stroke="#e02020" stroke-width="1"/><path d="M.5 .5h3.500v3.500h7v3.500h3.500v7h3.500v7h-17.500z" fill="#8fd07a"/><path d="M.5 .5v21h17.500" stroke="#3aa64a" stroke-width="1" fill="none"/><path d="M4.0 0.5v21M7.5 0.5v21M11.0 0.5v21M14.5 0.5v21M18.0 0.5v21M0.5 4.0h21M0.5 7.5h21M0.5 11.0h21M0.5 14.5h21M0.5 18.0h21" stroke="#d8f0d0" stroke-width="0.8" fill="none"/><path d="M4 .5v3.500h7v3.500h3.500v7h3.500v7" stroke="#1d5a2a" stroke-width="1" fill="none"/><path d="M.5 .5h21v21" stroke="#e02020" stroke-width="1" fill="none"/></svg><div class="lbl" style="left:0;width:62px;top:30px">Smoothing</div></div>
<div class="btn" style="left:235px;top:454px;width:52px;height:48px;border-radius:3px"><svg style="left:13px;top:2px" width="24" height="26" viewBox="0 0 24 26"><ellipse cx="12" cy="23" rx="9" ry="1.500" fill="#000" opacity=".15"/><path d="M5 1l8.500 14-2 1.500-8-13z" fill="#d8d8d8" stroke="#999" stroke-width=".6"/><path d="M19 1l-8.500 14 2 1.500 8-13z" fill="#e8e8e8" stroke="#999" stroke-width=".6"/><ellipse cx="6" cy="19" rx="4" ry="2.800" transform="rotate(-35 6 19)" fill="none" stroke="#d81c24" stroke-width="2.400"/><ellipse cx="18" cy="19" rx="4" ry="2.800" transform="rotate(35 18 19)" fill="none" stroke="#d81c24" stroke-width="2.400"/><path d="M9 16l3-2 3 2" stroke="#d81c24" stroke-width="2.400" fill="none"/></svg><div class="lbl" style="left:0;width:50px;top:31px">Scissors</div></div>
<div class="btn" style="left:290px;top:454px;width:48px;height:48px;border-radius:3px"><svg style="left:14px;top:5px" width="18" height="18" viewBox="0 0 18 18"><rect x=".5" y=".5" width="17" height="17" fill="#4fb04a" stroke="#1d7a2a" stroke-width="1"/><path d="M3.9 0.5v17M7.3 0.5v17M10.7 0.5v17M14.1 0.5v17M0.5 3.9h17M0.5 7.3h17M0.5 10.7h17M0.5 14.1h17" stroke="#c8ecc0" stroke-width="0.8" fill="none"/><path d="M9 3.500v11M3.500 9h11" stroke="#f01010" stroke-width="1.200"/><rect x="7" y="7" width="4" height="4" fill="#fff" stroke="#f01010" stroke-width="1.100"/></svg><div class="lbl" style="left:0;width:46px;top:30px">Islands</div></div>
<div class="btn" style="left:341px;top:454px;width:96px;height:48px;border-radius:3px"><svg style="left:37px;top:4px" width="20" height="19" viewBox="0 0 20 19"><rect x=".5" y=".5" width="11" height="11" fill="#5cb85a" stroke="#1d7a2a"/><path d="M2.33 0.5v11M4.17 0.5v11M6.0 0.5v11M7.83 0.5v11M9.67 0.5v11M0.5 2.33h11M0.5 4.17h11M0.5 6.0h11M0.5 7.83h11M0.5 9.67h11" stroke="#a8dca0" stroke-width="0.5" fill="none"/><rect x="7.500" y="7.500" width="11" height="11" fill="#58b8c4" stroke="#1a6a8a"/><path d="M9.33 7.5v11M11.17 7.5v11M13.0 7.5v11M14.83 7.5v11M16.67 7.5v11M7.5 9.33h11M7.5 11.17h11M7.5 13.0h11M7.5 14.83h11M7.5 16.67h11" stroke="#b0e0e8" stroke-width="0.5" fill="none"/><rect x="7.500" y="7.500" width="4" height="4" fill="#c84a7a"/></svg><div class="lbl" style="left:0;width:94px;top:30px">Logical operators</div></div>
<div class="btn on" style="left:440px;top:454px;width:71px;height:48px;border-radius:3px"><svg style="left:22px;top:2px" width="25" height="19" viewBox="0 0 25 19"><use href="#nv"/></svg><div class="lbl" style="left:0;width:69px;top:29px">Nvidia AIAA</div></div>

<div class="t" style="left:0;top:515px">Nvidia AIAA</div>
<div class="a" style="left:1px;top:531px;width:518px;height:217px;background:#fafafa;border:1px solid #ebebeb;border-radius:3px"></div>
<div class="t" style="left:10px;top:541px;background:#fff;height:15px;line-height:15px;letter-spacing:-.05px">NVIDIA AI-Assisted Annotation for automatic and boundary points based segmentation... <span style="color:#00f;text-decoration:underline">Show details.</span></div>
<div class="cb" style="left:11px;top:562px;width:497px;height:19px"><i class="r"></i><span>Models</span></div>
<div class="cb" style="left:11px;top:593px;width:497px;height:19px"><i class="d"></i><span>Auto-segmentation</span></div>
<div class="t" style="left:14px;top:623px">Model:</div>
<div class="combo" style="left:50px;top:619px;width:371px;height:21px"><span style="margin-top:-6px">segmentation_ct_spleen</span><i></i></div>
<div class="btn" style="left:424px;top:616px;width:80px;height:27px"><svg style="left:12px;top:2px" width="22" height="22" viewBox="0 0 22 22"><rect x=".5" y=".5" width="21" height="21" rx="4" fill="#151515"/><use href="#nv" transform="translate(3.500,5.500) scale(.62)"/></svg><div class="t" style="left:42px;top:7px">Start</div></div>
<div class="cb" style="left:11px;top:650px;width:497px;height:19px"><i class="d"></i><span>Segment from boundary points (DExtr3D)</span></div>
<div class="t" style="left:14px;top:680px">Model:</div>
<div class="combo" style="left:68px;top:675px;width:317px;height:22px"><span style="margin-top:-6px">annotation_mri_brain_tumors_t1ce_tc</span><i></i></div>
<div class="btn" style="left:388px;top:673px;width:33px;height:27px"><svg style="left:6px;top:3px" width="20" height="20" viewBox="0 0 20 20"><path d="M1 1.500h18l-7 7.500v8.500l-4-2v-6.500z" fill="#ff9a0a" stroke="#d87800" stroke-width=".6"/></svg></div>
<div class="btn" style="left:424px;top:673px;width:80px;height:61px;background:#fbfbfb;border-color:#d4d4d4"><svg style="left:12px;top:18px" width="22" height="22" viewBox="0 0 22 22"><rect x=".5" y=".5" width="21" height="21" rx="4" fill="#868686"/><use href="#nvg" transform="translate(3.500,5.500) scale(.62)"/></svg><div class="t" style="left:42px;top:24px;color:#b0b0b0">Start</div></div>
<div class="t" style="left:14px;top:712px">Boundary:</div>
<div class="btn" style="left:68px;top:703px;width:157px;height:31px"><svg style="left:71px;top:4px" width="14" height="20" viewBox="0 0 14 20"><path d="M7 1l3.500 6h-2.300v5.500h-2.400v-5.500h-2.300z" fill="#1a5f8f" stroke="#0a3a5a" stroke-width=".5"/><circle cx="8" cy="15" r="3" fill="#e0182a"/><circle cx="7.200" cy="14.200" r=".9" fill="#ff8a90"/></svg></div>
<div class="btn" style="left:228px;top:703px;width:157px;height:31px;border-color:#c8c8c8"><svg style="left:70px;top:6px" width="16" height="18" viewBox="0 0 16 18"><path d="M2 4h12M6 4v-2h4v2" stroke="#555" fill="none"/><path d="M3.500 5h9l-.8 11.500h-7.400z" fill="#e8e8e8" stroke="#555"/><path d="M6 7v8M8 7v8M10 7v8" stroke="#888" stroke-width=".8"/></svg><div class="a" style="left:146px;top:24px;width:0;height:0;border-style:solid;border-width:3px 3px 0 3px;border-color:#c0c0c0 transparent transparent transparent"></div></div>
<div class="btn" style="left:388px;top:705px;width:33px;height:27px"><svg style="left:5px;top:1px" width="22" height="24" viewBox="0 0 22 24"><ellipse cx="10" cy="21.500" rx="8" ry="1" fill="#000" opacity=".25"/><path d="M3 16l9-13 5 3.500-9 13z" fill="#f6b73c" stroke="#b87a10" stroke-width=".6"/><path d="M12 3l1.300-1.800 5 3.500-1.300 1.800z" fill="#d0202a"/><path d="M3 16l-1 5 6-1.500z" fill="#f3dcb0" stroke="#b89a60" stroke-width=".5"/><path d="M2 21l.5-2 1.500 1.500z" fill="#222"/></svg></div>
<!-- undo/redo -->
<div class="btn" style="left:1px;top:753px;width:257px;height:27px"><svg style="left:104px;top:1px" width="22" height="24" viewBox="0 0 22 24"><ellipse cx="12" cy="21.500" rx="8" ry="1.300" fill="#000" opacity=".2"/><path d="M1.500 8l8-6.500v4c6 0 10 4 9 10-.5 2.500-2 4-4.500 5 2-3 1.500-8.500-4.500-8.500v4z" fill="#f2d33c" stroke="#b89a10" stroke-width=".7"/></svg><div class="t" style="left:127px;top:7px">Undo</div></div>
<div class="btn" style="left:262px;top:753px;width:257px;height:27px"><svg style="left:105px;top:1px" width="22" height="24" viewBox="0 0 22 24"><ellipse cx="10" cy="21.500" rx="8" ry="1.300" fill="#000" opacity=".2"/><path d="M20.500 8l-8-6.500v4c-6 0-10 4-9 10 .5 2.500 2 4 4.500 5-2-3-1.500-8.500 4.500-8.500v4z" fill="#6cc83c" stroke="#3a8a14" stroke-width=".7"/></svg><div class="t" style="left:127px;top:7px">Redo</div></div>
<!-- masking -->
<div class="a" style="left:6px;top:788px;width:0;height:0;border-style:solid;border-width:4px 0 4px 5px;border-color:transparent transparent transparent #555"></div>
<div class="t" style="left:18px;top:785px">Masking</div>
<div class="a" style="left:1px;top:802px;width:518px;height:10px;border:1px solid #e4e4e4;border-radius:2px;background:#fafafa"></div>
<!-- data probe -->
<div class="cb" style="left:1px;top:892px;width:532px;height:18px"><i class="r"></i><span>Data Probe</span></div>
</div>
<!-- VIEWS -->
<div id="views" class="a" style="left:539px;top:80px;width:1381px;height:924px;background:#000">
<div class="a" style="left:0px;top:0px;width:690px;height:15px;background:#f2503a"><svg style="left:3px;top:3px" width="12" height="9" viewBox="0 0 12 9"><path d="M0 4.500h5M5 2.500v4l2-1h3v-2h-3z" fill="#5a1a10" stroke="#5a1a10" stroke-width=".8" opacity=".6"/></svg><div class="a" style="left:17px;top:0;width:12px;height:15px;background:#f98a78"></div><div class="t" style="left:16px;top:1px;width:13px;text-align:center;font-size:11.500px">R</div><svg style="left:32px;top:1px" width="14" height="13" viewBox="0 0 14 13"><rect x="2.500" y="2" width="9" height="9" fill="#5a1a10" opacity=".55"/><rect x="3" y="2.500" width="4" height="4" fill="#fff" opacity=".25"/><rect x="7" y="6.500" width="4" height="4" fill="#000" opacity=".25"/><path d="M7 0v13M0 6.500h14" stroke="#222" stroke-width=".7" stroke-dasharray="2 9 2"/></svg><div class="a" style="left:54px;top:5px;width:538px;height:5px;background:#f4f4f4;border:1px solid #444;border-radius:2px"></div><div class="a" style="left:54px;top:5px;width:398px;height:5px;background:#3aa0e8;border:1px solid #3a4a5a;border-radius:2px"></div><div class="a" style="left:448px;top:2px;width:9px;height:11px;background:#fff;border:1px solid #444;border-radius:2px"></div><div class="a" style="left:597px;top:0;width:93px;height:15px;background:#f9826e"></div><div class="t" style="left:598.5px;top:1.500px;font-size:10.500px">S: 385.921mm</div></div>
<div class="a" style="left:0;top:15px;width:690px;height:447px;background:#000;overflow:hidden"><svg id="axial" style="left:0;top:0" width="690" height="447" viewBox="539 95 690 447">
<defs>
<filter id="ct" x="0" y="0" width="100%" height="100%" color-interpolation-filters="sRGB"><feGaussianBlur in="SourceGraphic" stdDeviation="0.9" result="b"/><feTurbulence type="fractalNoise" baseFrequency="0.55" numOctaves="2" seed="4" result="n"/><feColorMatrix in="n" type="matrix" values="1 0 0 0 0 1 0 0 0 0 1 0 0 0 0 0 0 0 0 1" result="g"/><feComposite in="b" in2="g" operator="arithmetic" k1="0.56" k2="0.72" k3="0" k4="0" result="m"/><feComposite in="m" in2="b" operator="in"/></filter>
<filter id="b1" x="-20%" y="-20%" width="140%" height="140%"><feGaussianBlur stdDeviation="1.2"/></filter>
<filter id="b2" x="-20%" y="-20%" width="140%" height="140%"><feGaussianBlur stdDeviation="2.5"/></filter>
<filter id="b4" x="-20%" y="-20%" width="140%" height="140%"><feGaussianBlur stdDeviation="4"/></filter>
<filter id="mot" x="0" y="0" width="100%" height="100%" color-interpolation-filters="sRGB"><feTurbulence type="fractalNoise" baseFrequency="0.18" numOctaves="2" seed="9" result="n"/><feColorMatrix in="n" type="matrix" values="0 0 0 0 0 0 0 0 0 0 0 0 0 0 0 4 0 0 0 -1.9" result="a"/><feComposite in="SourceGraphic" in2="a" operator="in"/></filter>
<clipPath id="abody"><path d="M719 93C702.2 102.8 699 109.7 689 119C679 128.3 667.8 138.3 659 149C650.2 159.7 643.5 170.2 636 183C628.5 195.8 619.8 212.5 614 226C608.2 239.5 604.2 253.3 601 264C597.8 274.7 596.1 280.3 595 290C593.9 299.7 594.1 310.5 594.6 322C595.1 333.5 596.1 347.5 598 359C599.9 370.5 602.7 380.3 606 391C609.3 401.7 612.7 411.8 618 423C623.3 434.2 631.3 447.2 638 458C644.7 468.8 651.5 479.8 658 488C664.5 496.2 670 501.3 677 507C684 512.7 691.7 517.3 700 522C708.3 526.7 717 531.3 727 535C737 538.7 742.8 541.8 760 544C777.2 546.2 807.8 548.7 830 548C852.2 547.3 873 540 893 540C913 540 931 547.3 950 548C969 548.7 994.2 545.8 1007 544C1019.8 542.2 1017.8 540.2 1027 537C1036.2 533.8 1051.3 530 1062 525C1072.7 520 1082 514 1091 507C1100 500 1108.5 491.7 1116 483C1123.5 474.3 1129 465 1136 455C1143 445 1152 433.7 1158 423C1164 412.3 1168.5 401.7 1172 391C1175.5 380.3 1177 370.5 1179 359C1181 347.5 1183 333.5 1184 322C1185 310.5 1186 301 1185 290C1184 279 1181.3 267.3 1178 256C1174.7 244.7 1170.3 233.8 1165 222C1159.7 210.2 1153.2 197.2 1146 185C1138.8 172.8 1130.7 160 1122 149C1113.3 138 1104 128.3 1094 119C1084 109.7 1079.3 102.8 1062 93C1044.7 83.2 1018.7 67.2 990 60C961.3 52.8 923.3 50 890 50C856.7 50 818.5 52.8 790 60C761.5 67.2 735.8 83.2 719 93Z"/></clipPath>
</defs>
<g filter="url(#ct)"><g clip-path="url(#abody)">
<path d="M719 93C702.2 102.8 699 109.7 689 119C679 128.3 667.8 138.3 659 149C650.2 159.7 643.5 170.2 636 183C628.5 195.8 619.8 212.5 614 226C608.2 239.5 604.2 253.3 601 264C597.8 274.7 596.1 280.3 595 290C593.9 299.7 594.1 310.5 594.6 322C595.1 333.5 596.1 347.5 598 359C599.9 370.5 602.7 380.3 606 391C609.3 401.7 612.7 411.8 618 423C623.3 434.2 631.3 447.2 638 458C644.7 468.8 651.5 479.8 658 488C664.5 496.2 670 501.3 677 507C684 512.7 691.7 517.3 700 522C708.3 526.7 717 531.3 727 535C737 538.7 742.8 541.8 760 544C777.2 546.2 807.8 548.7 830 548C852.2 547.3 873 540 893 540C913 540 931 547.3 950 548C969 548.7 994.2 545.8 1007 544C1019.8 542.2 1017.8 540.2 1027 537C1036.2 533.8 1051.3 530 1062 525C1072.7 520 1082 514 1091 507C1100 500 1108.5 491.7 1116 483C1123.5 474.3 1129 465 1136 455C1143 445 1152 433.7 1158 423C1164 412.3 1168.5 401.7 1172 391C1175.5 380.3 1177 370.5 1179 359C1181 347.5 1183 333.5 1184 322C1185 310.5 1186 301 1185 290C1184 279 1181.3 267.3 1178 256C1174.7 244.7 1170.3 233.8 1165 222C1159.7 210.2 1153.2 197.2 1146 185C1138.8 172.8 1130.7 160 1122 149C1113.3 138 1104 128.3 1094 119C1084 109.7 1079.3 102.8 1062 93C1044.7 83.2 1018.7 67.2 990 60C961.3 52.8 923.3 50 890 50C856.7 50 818.5 52.8 790 60C761.5 67.2 735.8 83.2 719 93Z" fill="#707070"/>
<path d="M719 93C702.2 102.8 699 109.7 689 119C679 128.3 667.8 138.3 659 149C650.2 159.7 643.5 170.2 636 183C628.5 195.8 619.8 212.5 614 226C608.2 239.5 604.2 253.3 601 264C597.8 274.7 596.1 280.3 595 290C593.9 299.7 594.1 310.5 594.6 322C595.1 333.5 596.1 347.5 598 359C599.9 370.5 602.7 380.3 606 391C609.3 401.7 612.7 411.8 618 423C623.3 434.2 631.3 447.2 638 458C644.7 468.8 651.5 479.8 658 488C664.5 496.2 670 501.3 677 507C684 512.7 691.7 517.3 700 522C708.3 526.7 717 531.3 727 535C737 538.7 742.8 541.8 760 544C777.2 546.2 807.8 548.7 830 548C852.2 547.3 873 540 893 540C913 540 931 547.3 950 548C969 548.7 994.2 545.8 1007 544C1019.8 542.2 1017.8 540.2 1027 537C1036.2 533.8 1051.3 530 1062 525C1072.7 520 1082 514 1091 507C1100 500 1108.5 491.7 1116 483C1123.5 474.3 1129 465 1136 455C1143 445 1152 433.7 1158 423C1164 412.3 1168.5 401.7 1172 391C1175.5 380.3 1177 370.5 1179 359C1181 347.5 1183 333.5 1184 322C1185 310.5 1186 301 1185 290C1184 279 1181.3 267.3 1178 256C1174.7 244.7 1170.3 233.8 1165 222C1159.7 210.2 1153.2 197.2 1146 185C1138.8 172.8 1130.7 160 1122 149C1113.3 138 1104 128.3 1094 119C1084 109.7 1079.3 102.8 1062 93C1044.7 83.2 1018.7 67.2 990 60C961.3 52.8 923.3 50 890 50C856.7 50 818.5 52.8 790 60C761.5 67.2 735.8 83.2 719 93Z" fill="none" stroke="#8e8e8e" stroke-width="3"/>
<path d="M730.1 112.1C714.4 121.1 711.4 127.4 702.1 135.9C692.7 144.5 682.3 153.6 674 163.4C665.8 173.1 659.5 182.7 652.5 194.5C645.5 206.2 637.4 221.5 631.9 233.8C626.5 246.2 622.7 258.8 619.8 268.6C616.8 278.3 615.2 283.5 614.2 292.4C613.2 301.2 613.3 311.1 613.8 321.7C614.3 332.2 615.2 345 617 355.5C618.8 366 621.3 375 624.5 384.8C627.6 394.6 630.7 403.9 635.7 414.1C640.7 424.3 648.1 436.2 654.4 446.1C660.6 456 667 466.1 673.1 473.6C679.2 481 684.3 485.8 690.8 490.9C697.4 496.1 704.6 500.4 712.4 504.7C720.1 508.9 728.2 513.2 737.6 516.6C746.9 519.9 752.4 522.8 768.5 524.8C784.5 526.8 813.2 529.1 833.9 528.5C854.6 527.8 874.1 521.1 892.8 521.1C911.5 521.1 928.3 527.8 946.1 528.5C963.9 529.1 987.4 526.5 999.4 524.8C1011.4 523.1 1009.5 521.3 1018.1 518.4C1026.7 515.5 1040.8 512 1050.8 507.4C1060.8 502.8 1069.5 497.3 1077.9 490.9C1086.3 484.5 1094.3 476.9 1101.3 469C1108.3 461 1113.5 452.5 1120 443.4C1126.6 434.2 1135 423.8 1140.6 414.1C1146.2 404.3 1150.4 394.6 1153.7 384.8C1156.9 375 1158.3 366 1160.2 355.5C1162.1 345 1164 332.2 1164.9 321.7C1165.8 311.1 1166.8 302.4 1165.8 292.4C1164.9 282.3 1162.4 271.6 1159.3 261.3C1156.2 250.9 1152.1 241 1147.1 230.2C1142.1 219.3 1136.1 207.4 1129.4 196.3C1122.7 185.2 1115 173.4 1106.9 163.4C1098.8 153.3 1090.1 144.5 1080.7 135.9C1071.4 127.4 1067 121.1 1050.8 112.1C1034.6 103.1 1010.3 88.5 983.5 81.9C956.7 75.4 921.2 72.8 890 72.8C858.8 72.8 823.1 75.4 796.5 81.9C769.9 88.5 745.9 103.1 730.1 112.1Z" fill="none" stroke="#848484" stroke-width="8" filter="url(#b1)"/>
<path d="M738.7 124.5C723.8 133 721 138.8 712.1 146.9C703.3 154.9 693.4 163.5 685.6 172.7C677.7 181.8 671.8 190.9 665.2 201.9C658.6 212.9 650.9 227.3 645.7 238.9C640.6 250.5 637 262.4 634.2 271.6C631.4 280.7 629.9 285.6 628.9 293.9C628 302.2 628.1 311.6 628.6 321.4C629 331.3 629.9 343.4 631.6 353.3C633.3 363.1 635.7 371.6 638.7 380.8C641.6 390 644.6 398.7 649.3 408.3C654 417.9 661.1 429.1 667 438.4C672.9 447.7 678.9 457.2 684.7 464.2C690.4 471.2 695.3 475.7 701.5 480.5C707.7 485.4 714.5 489.4 721.9 493.4C729.2 497.5 736.9 501.5 745.7 504.6C754.6 507.8 759.8 510.5 775 512.4C790.1 514.2 817.3 516.4 836.9 515.8C856.5 515.2 875 508.9 892.7 508.9C910.4 508.9 926.3 515.2 943.1 515.8C959.9 516.4 982.2 513.9 993.5 512.4C1004.9 510.8 1003.1 509.1 1011.2 506.3C1019.4 503.6 1032.8 500.3 1042.2 496C1051.7 491.7 1059.9 486.6 1067.9 480.5C1075.8 474.5 1083.4 467.4 1090 459.9C1096.6 452.4 1101.5 444.4 1107.7 435.8C1113.9 427.2 1121.9 417.5 1127.2 408.3C1132.5 399.1 1136.5 390 1139.6 380.8C1142.7 371.6 1144 363.1 1145.8 353.3C1147.5 343.4 1149.3 331.3 1150.2 321.4C1151.1 311.6 1152 303.4 1151.1 293.9C1150.2 284.5 1147.8 274.4 1144.9 264.7C1141.9 254.9 1138.1 245.6 1133.4 235.4C1128.7 225.3 1122.9 214.1 1116.6 203.6C1110.2 193.2 1103 182.1 1095.3 172.7C1087.6 163.2 1079.4 154.9 1070.5 146.9C1061.7 138.8 1057.6 133 1042.2 124.5C1026.9 116 1003.9 102.3 978.5 96.1C953.1 90 919.5 87.5 890 87.5C860.5 87.5 826.7 90 801.5 96.1C776.3 102.3 753.6 116 738.7 124.5Z" fill="#5f5f5f" filter="url(#b1)"/>
<path d="M738.7 124.5C723.8 133 721 138.8 712.1 146.9C703.3 154.9 693.4 163.5 685.6 172.7C677.7 181.8 671.8 190.9 665.2 201.9C658.6 212.9 650.9 227.3 645.7 238.9C640.6 250.5 637 262.4 634.2 271.6C631.4 280.7 629.9 285.6 628.9 293.9C628 302.2 628.1 311.6 628.6 321.4C629 331.3 629.9 343.4 631.6 353.3C633.3 363.1 635.7 371.6 638.7 380.8C641.6 390 644.6 398.7 649.3 408.3C654 417.9 661.1 429.1 667 438.4C672.9 447.7 678.9 457.2 684.7 464.2C690.4 471.2 695.3 475.7 701.5 480.5C707.7 485.4 714.5 489.4 721.9 493.4C729.2 497.5 736.9 501.5 745.7 504.6C754.6 507.8 759.8 510.5 775 512.4C790.1 514.2 817.3 516.4 836.9 515.8C856.5 515.2 875 508.9 892.7 508.9C910.4 508.9 926.3 515.2 943.1 515.8C959.9 516.4 982.2 513.9 993.5 512.4C1004.9 510.8 1003.1 509.1 1011.2 506.3C1019.4 503.6 1032.8 500.3 1042.2 496C1051.7 491.7 1059.9 486.6 1067.9 480.5C1075.8 474.5 1083.4 467.4 1090 459.9C1096.6 452.4 1101.5 444.4 1107.7 435.8C1113.9 427.2 1121.9 417.5 1127.2 408.3C1132.5 399.1 1136.5 390 1139.6 380.8C1142.7 371.6 1144 363.1 1145.8 353.3C1147.5 343.4 1149.3 331.3 1150.2 321.4C1151.1 311.6 1152 303.4 1151.1 293.9C1150.2 284.5 1147.8 274.4 1144.9 264.7C1141.9 254.9 1138.1 245.6 1133.4 235.4C1128.7 225.3 1122.9 214.1 1116.6 203.6C1110.2 193.2 1103 182.1 1095.3 172.7C1087.6 163.2 1079.4 154.9 1070.5 146.9C1061.7 138.8 1057.6 133 1042.2 124.5C1026.9 116 1003.9 102.3 978.5 96.1C953.1 90 919.5 87.5 890 87.5C860.5 87.5 826.7 90 801.5 96.1C776.3 102.3 753.6 116 738.7 124.5Z" fill="none" stroke="#545454" stroke-width="5" filter="url(#b1)"/>
<path d="M690 492C692.5 485.7 723.3 479 740 476C756.7 473 775 475 790 474C805 473 818.7 473.7 830 470C841.3 466.3 846.3 456 858 452C869.7 448 885.3 447 900 446C914.7 445 931.8 443.3 946 446C960.2 448.7 969.3 457.7 985 462C1000.7 466.3 1022.5 471.7 1040 472C1057.5 472.3 1078 463.3 1090 464C1102 464.7 1111 470.7 1112 476C1113 481.3 1104.7 489.5 1096 496C1087.3 502.5 1074.3 509.7 1060 515C1045.7 520.3 1028.3 524.8 1010 528C991.7 531.2 969.5 533.7 950 534C930.5 534.3 913 530 893 530C873 530 850.5 534.3 830 534C809.5 533.7 787.5 531.3 770 528C752.5 524.7 738.3 520 725 514C711.7 508 687.5 498.3 690 492Z" fill="#8c8c8c" filter="url(#b1)"/>
<path d="M664 484C667.3 487 676.8 496.7 684 502C691.2 507.3 698.8 511.7 707 516C715.2 520.3 723.3 524.8 733 528C742.7 531.2 748.8 533.3 765 535C781.2 536.7 810 538.3 830 538C850 537.7 872.5 535.7 885 533C897.5 530.3 898.3 522 905 522C911.7 522 915.8 530.3 925 533C934.2 535.7 945.8 537.7 960 538C974.2 538.3 996.7 536.8 1010 535C1023.3 533.2 1030.3 530.3 1040 527C1049.7 523.7 1059.3 519.5 1068 515C1076.7 510.5 1084.7 505.5 1092 500C1099.3 494.5 1108.7 485 1112 482" fill="none" stroke="#5e5e5e" stroke-width="11" filter="url(#b1)"/>
<path d="M719 93C702.2 102.8 699 109.7 689 119C679 128.3 667.8 138.3 659 149C650.2 159.7 643.5 170.2 636 183C628.5 195.8 619.8 212.5 614 226C608.2 239.5 604.2 253.3 601 264C597.8 274.7 596.1 280.3 595 290C593.9 299.7 594.1 310.5 594.6 322C595.1 333.5 596.1 347.5 598 359C599.9 370.5 602.7 380.3 606 391C609.3 401.7 612.7 411.8 618 423C623.3 434.2 631.3 447.2 638 458C644.7 468.8 651.5 479.8 658 488C664.5 496.2 670 501.3 677 507C684 512.7 691.7 517.3 700 522C708.3 526.7 717 531.3 727 535C737 538.7 742.8 541.8 760 544C777.2 546.2 807.8 548.7 830 548C852.2 547.3 873 540 893 540C913 540 931 547.3 950 548C969 548.7 994.2 545.8 1007 544C1019.8 542.2 1017.8 540.2 1027 537C1036.2 533.8 1051.3 530 1062 525C1072.7 520 1082 514 1091 507C1100 500 1108.5 491.7 1116 483C1123.5 474.3 1129 465 1136 455C1143 445 1152 433.7 1158 423C1164 412.3 1168.5 401.7 1172 391C1175.5 380.3 1177 370.5 1179 359C1181 347.5 1183 333.5 1184 322C1185 310.5 1186 301 1185 290C1184 279 1181.3 267.3 1178 256C1174.7 244.7 1170.3 233.8 1165 222C1159.7 210.2 1153.2 197.2 1146 185C1138.8 172.8 1130.7 160 1122 149C1113.3 138 1104 128.3 1094 119C1084 109.7 1079.3 102.8 1062 93C1044.7 83.2 1018.7 67.2 990 60C961.3 52.8 923.3 50 890 50C856.7 50 818.5 52.8 790 60C761.5 67.2 735.8 83.2 719 93Z" fill="none" stroke="#8e8e8e" stroke-width="3"/>
<path d="M826 300C829.7 293.3 844 295 850 300C856 305 860.7 316.7 862 330C863.3 343.3 860 365 858 380C856 395 854.7 407.5 850 420C845.3 432.5 838.3 445.3 830 455C821.7 464.7 811.7 473.5 800 478C788.3 482.5 769.2 483.7 760 482C750.8 480.3 740 480 745 468C750 456 778.3 426.3 790 410C801.7 393.7 808.7 381.7 815 370C821.3 358.3 826.2 351.7 828 340C829.8 328.3 822.3 306.7 826 300Z" fill="#575757" filter="url(#b1)"/>
<path d="M771.5 164.4C776.8 164.9 783.2 166.6 784.6 170C786 173.4 780.8 180 780 185C779.2 190 779.8 195 780 200C780.2 205 779.5 212.2 781 215C782.5 217.8 787.2 214.8 789 217C790.8 219.2 792.2 224.6 792 228C791.8 231.4 790.5 235 788 237.5C785.5 240 780 240.4 777 243C774 245.6 772.2 249.5 770 253C767.8 256.5 766.6 259.1 764 264C761.4 268.9 756.3 278.2 754.6 282.5C752.9 286.8 752.1 288.4 754 290C755.9 291.6 759.2 291.9 766 292.4C772.8 292.9 785.9 292.8 795 293C804.1 293.2 815.6 292.4 820.7 293.6C825.8 294.8 824.4 296.1 825.6 300C826.8 303.9 827.8 311.7 828 317C828.2 322.3 827.4 327 827 332C826.6 337 827.1 340.8 825.6 347C824.1 353.2 821.8 361.7 818 369C814.2 376.3 808.3 384.4 803 391C797.7 397.6 791.3 401.5 786 408.5C780.7 415.5 775.9 425.6 771 433C766.1 440.4 760.9 447.6 756.4 453C751.9 458.4 749.4 463.4 744 465.4C738.6 467.4 729.3 466.2 724 465C718.7 463.8 716.5 460.4 712 458C707.5 455.6 701.5 453.1 697 450.6C692.5 448.1 687.7 445.5 685 443C682.3 440.5 683.9 439.4 681 435.7C678.1 432 671.4 425.5 667.5 421C663.6 416.5 660.9 413.5 657.6 408.5C654.3 403.5 650.4 395.6 647.7 391C645 386.4 643 386.3 641.5 381C640 375.7 639.5 368.8 639 359C638.5 349.2 638.7 333.5 638.6 322C638.5 310.5 638.4 296.6 638.6 290C638.8 283.4 639.1 285.3 640 282.5C640.9 279.7 642.4 276.8 644 273C645.6 269.2 647.4 265 649.6 260C651.8 255 654.5 248.7 657 243C659.5 237.3 661.1 231.3 664.6 226C668.1 220.7 674.1 215.5 677.8 211C681.5 206.5 683 203 687 199C691 195 696.7 190.4 702 187C707.3 183.6 713.7 180.6 719 178.4C724.3 176.2 728.4 175.9 734 174C739.6 172.1 746.5 168.6 752.8 167C759 165.4 766.2 163.9 771.5 164.4Z" fill="#969696"/>
<path d="M726 150C727.3 143.7 732.7 133.7 740 128C747.3 122.3 760 118.7 770 116C780 113.3 790 112 800 112C810 112 821.3 113.3 830 116C838.7 118.7 847.3 122.7 852 128C856.7 133.3 858.7 141.8 858 148C857.3 154.2 854.3 161.7 848 165C841.7 168.3 828.8 168.5 820 168C811.2 167.5 802.5 163.3 795 162C787.5 160.7 782.5 159 775 160C767.5 161 757.2 167 750 168C742.8 169 736 169 732 166C728 163 724.7 156.3 726 150Z" fill="#9c9c9c" filter="url(#b1)"/>
<g filter="url(#mot)"><path d="M728 150C729.3 144.3 735 135.3 742 130C749 124.7 760.3 120.7 770 118C779.7 115.3 790 114 800 114C810 114 821.7 115.3 830 118C838.3 120.7 845.7 125 850 130C854.3 135 856.7 142.5 856 148C855.3 153.5 852 160 846 163C840 166 828.5 166.5 820 166C811.5 165.5 802.5 161.3 795 160C787.5 158.7 782.5 157 775 158C767.5 159 756.8 165 750 166C743.2 167 737.7 166.7 734 164C730.3 161.3 726.7 155.7 728 150Z" fill="#5a5a5a"/></g>
<ellipse cx="797" cy="127" rx="7" ry="12" transform="rotate(15 797 127)" fill="#000"/>
<ellipse cx="789" cy="143" rx="3.5" ry="6" transform="rotate(30 789 143)" fill="#000"/>
<ellipse cx="782" cy="153" rx="3" ry="4.5" transform="rotate(30 782 153)" fill="#000"/>
<ellipse cx="845" cy="127" rx="3.5" ry="8" transform="rotate(-10 845 127)" fill="#000"/>
<ellipse cx="770" cy="140" rx="1.5" ry="1.5" fill="#000"/>
<ellipse cx="760" cy="133" rx="1.5" ry="1.5" fill="#000"/>
<ellipse cx="812" cy="146" rx="1.5" ry="1.5" fill="#000"/>
<path d="M852 160C853.3 151.7 853.3 138 858 130C862.7 122 870.5 116 880 112C889.5 108 904.2 106 915 106C925.8 106 938.2 107.7 945 112C951.8 116.3 953.8 124 956 132C958.2 140 958.7 150.3 958 160C957.3 169.7 955 180.8 952 190C949 199.2 946.2 207.3 940 215C933.8 222.7 924.2 232.2 915 236C905.8 239.8 893.2 239.7 885 238C876.8 236.3 871.2 231.5 866 226C860.8 220.5 856.7 212.7 854 205C851.3 197.3 850.3 187.5 850 180C849.7 172.5 850.7 168.3 852 160Z" fill="#8c8c8c" filter="url(#b1)"/>
<path d="M884 152C888.3 149.5 899.2 153 906 153C912.8 153 919 152.3 925 152C931 151.7 937.8 149.7 942 151C946.2 152.3 948.7 154.3 950 160C951.3 165.7 951.7 177 950 185C948.3 193 945.3 200.5 940 208C934.7 215.5 926.3 225.7 918 230C909.7 234.3 897.7 235 890 234C882.3 233 875.7 228.7 872 224C868.3 219.3 866.7 210 868 206C869.3 202 877.3 203.5 880 200C882.7 196.5 884 190.3 884 185C884 179.7 880 173.5 880 168C880 162.5 879.7 154.5 884 152Z" fill="#b2b2b2" filter="url(#b2)"/>
<path d="M881 128C884.5 125 889.8 123.2 895 122C900.2 120.8 907 122 912 121C917 120 921.5 116 925 116C928.5 116 930.8 118.7 933 121C935.2 123.3 936.5 126.8 938 130C939.5 133.2 941.7 136.7 942 140C942.3 143.3 942.8 148 940 150C937.2 152 930.8 152.2 925 152C919.2 151.8 910.3 148.8 905 149C899.7 149.2 896.5 151.5 893 153C889.5 154.5 886.2 155.2 884 158C881.8 160.8 880.8 165.5 880 170C879.2 174.5 878.7 180.5 879 185C879.3 189.5 882.5 193.8 882 197C881.5 200.2 878.7 203.5 876 204C873.3 204.5 869 202.3 866 200C863 197.7 859.8 194.2 858 190C856.2 185.8 855.2 180 855 175C854.8 170 855.5 164.2 857 160C858.5 155.8 861.2 153.3 864 150C866.8 146.7 871.2 143.7 874 140C876.8 136.3 877.5 131 881 128Z" fill="#000"/>
<ellipse cx="885" cy="160" rx="6" ry="3" transform="rotate(-40 885 160)" fill="#7a7a7a"/>
<path d="M965 150C965.3 143 967.8 133.7 972 128C976.2 122.3 983.7 117.3 990 116C996.3 114.7 1003.3 117.3 1010 120C1016.7 122.7 1023.3 128.3 1030 132C1036.7 135.7 1044.3 137.7 1050 142C1055.7 146.3 1061 151.7 1064 158C1067 164.3 1068.7 173.3 1068 180C1067.3 186.7 1064.7 193.7 1060 198C1055.3 202.3 1046.7 205 1040 206C1033.3 207 1025.8 206.7 1020 204C1014.2 201.3 1010.8 193.7 1005 190C999.2 186.3 990.8 185.3 985 182C979.2 178.7 973.3 175.3 970 170C966.7 164.7 964.7 157 965 150Z" fill="#9a9a9a" filter="url(#b1)"/>
<g filter="url(#mot)"><path d="M967 150C967.3 143.3 970.2 135.3 974 130C977.8 124.7 984 119.3 990 118C996 116.7 1003.3 119.3 1010 122C1016.7 124.7 1023.3 130.3 1030 134C1036.7 137.7 1044.7 140 1050 144C1055.3 148 1059.3 152 1062 158C1064.7 164 1066.7 173.7 1066 180C1065.3 186.3 1062.3 192 1058 196C1053.7 200 1046.3 203 1040 204C1033.7 205 1025.8 204.7 1020 202C1014.2 199.3 1010.8 191.7 1005 188C999.2 184.3 990.5 183 985 180C979.5 177 975 175 972 170C969 165 966.7 156.7 967 150Z" fill="#606060"/></g>
<ellipse cx="1012" cy="134" rx="2.5" ry="2" fill="#000"/>
<ellipse cx="1022" cy="146" rx="3.5" ry="2.5" transform="rotate(20 1022 146)" fill="#000"/>
<ellipse cx="1037" cy="159" rx="3" ry="2" fill="#000"/>
<ellipse cx="985" cy="175" rx="3" ry="5" transform="rotate(30 985 175)" fill="#000"/>
<ellipse cx="970" cy="143" rx="3" ry="3" fill="#000"/>
<ellipse cx="977" cy="140" rx="3" ry="2" transform="rotate(-30 977 140)" fill="#000"/>
<ellipse cx="1015" cy="192" rx="4" ry="2" transform="rotate(40 1015 192)" fill="#000"/>
<ellipse cx="1049" cy="181" rx="2" ry="1.5" fill="#000"/>
<ellipse cx="1056" cy="188" rx="2.5" ry="1.5" fill="#000"/>
<path d="M1040 240C1040.7 233.7 1045 223 1050 218C1055 213 1063.7 210.3 1070 210C1076.3 209.7 1083.7 211.8 1088 216C1092.3 220.2 1093.3 229.3 1096 235C1098.7 240.7 1101 244.5 1104 250C1107 255.5 1112.3 261.7 1114 268C1115.7 274.3 1116.3 282.7 1114 288C1111.7 293.3 1105.7 298.3 1100 300C1094.3 301.7 1085.7 301.3 1080 298C1074.3 294.7 1069.3 286 1066 280C1062.7 274 1063.3 266 1060 262C1056.7 258 1049.3 259.7 1046 256C1042.7 252.3 1039.3 246.3 1040 240Z" fill="#9a9a9a" filter="url(#b1)"/>
<g filter="url(#mot)"><path d="M1042 240C1042.7 234 1047.3 224.7 1052 220C1056.7 215.3 1064.3 212.3 1070 212C1075.7 211.7 1082 214.2 1086 218C1090 221.8 1091.3 229.7 1094 235C1096.7 240.3 1099 244.5 1102 250C1105 255.5 1110.3 261.7 1112 268C1113.7 274.3 1114 283 1112 288C1110 293 1105.3 296.7 1100 298C1094.7 299.3 1085.3 299 1080 296C1074.7 293 1071 285.7 1068 280C1065 274.3 1065.3 266 1062 262C1058.7 258 1051.3 259.7 1048 256C1044.7 252.3 1041.3 246 1042 240Z" fill="#606060"/></g>
<ellipse cx="1040" cy="237" rx="3.5" ry="10" transform="rotate(15 1040 237)" fill="#000"/>
<ellipse cx="1062" cy="224" rx="2.5" ry="2" fill="#000"/>
<ellipse cx="1067" cy="230" rx="2" ry="2.5" fill="#000"/>
<ellipse cx="1058" cy="245" rx="1.5" ry="3" transform="rotate(-30 1058 245)" fill="#000"/>
<ellipse cx="1112" cy="269" rx="2" ry="2" fill="#000"/>
<ellipse cx="1087" cy="281" rx="2" ry="2" fill="#000"/>
<path d="M866 262C867.3 256 873.5 249.7 880 246C886.5 242.3 895.8 240.3 905 240C914.2 239.7 926.5 241.3 935 244C943.5 246.7 952.2 251.3 956 256C959.8 260.7 959.8 267 958 272C956.2 277 951.3 282.7 945 286C938.7 289.3 928.3 291.3 920 292C911.7 292.7 903 291.7 895 290C887 288.3 876.8 286.7 872 282C867.2 277.3 864.7 268 866 262Z" fill="#868686" filter="url(#b2)"/>
<path d="M785 270C787.8 265.5 793.3 260.3 800 258C806.7 255.7 816.7 254.7 825 256C833.3 257.3 842.5 261.2 850 266C857.5 270.8 865 278.5 870 285C875 291.5 879.7 298.3 880 305C880.3 311.7 877 320.8 872 325C867 329.2 856.2 331.7 850 330C843.8 328.3 840.8 319.2 835 315C829.2 310.8 821.7 307.8 815 305C808.3 302.2 800.3 301.3 795 298C789.7 294.7 784.7 289.7 783 285C781.3 280.3 782.2 274.5 785 270Z" fill="#8b8b8b" filter="url(#b2)"/>
<path d="M838 300C839.7 295.2 852.2 294.3 860 296C867.8 297.7 878.3 304.3 885 310C891.7 315.7 899.2 324.2 900 330C900.8 335.8 895 343.3 890 345C885 346.7 876.7 343.3 870 340C863.3 336.7 855.3 331.7 850 325C844.7 318.3 836.3 304.8 838 300Z" fill="#878787" filter="url(#b2)"/>
<ellipse cx="958" cy="225" rx="9" ry="9" fill="#7c7c7c" filter="url(#b1)"/>
<ellipse cx="935" cy="186" rx="10" ry="5" fill="#757575" filter="url(#b1)"/>
<ellipse cx="962" cy="295" rx="5" ry="5" fill="#8a8a8a" filter="url(#b1)"/>
<ellipse cx="986" cy="292" rx="6" ry="6" fill="#8a8a8a" filter="url(#b1)"/>
<ellipse cx="1035" cy="298" rx="8" ry="9" fill="#8c8c8c" filter="url(#b1)"/>
<ellipse cx="1015" cy="238" rx="4" ry="4" fill="#808080" filter="url(#b1)"/>
<ellipse cx="1022" cy="306" rx="4" ry="4" fill="#7c7c7c" filter="url(#b1)"/>
<ellipse cx="1082" cy="322" rx="9" ry="9" fill="#8a8a8a" filter="url(#b1)"/>
<ellipse cx="855" cy="250" rx="5" ry="4" fill="#8a8a8a" filter="url(#b1)"/>
<ellipse cx="835" cy="188" rx="5" ry="4" fill="#808080" filter="url(#b1)"/>
<ellipse cx="812" cy="262" rx="8" ry="6" fill="#8a8a8a" filter="url(#b1)"/>
<ellipse cx="912" cy="352" rx="27" ry="29" fill="#8d8d8d" filter="url(#b1)"/>
<ellipse cx="871" cy="362" rx="16" ry="22" transform="rotate(20 871 362)" fill="#888" filter="url(#b1)"/>
<path d="M950 395C949 385 949.5 372.8 952 365C954.5 357.2 958.7 352.2 965 348C971.3 343.8 979.2 341.7 990 340C1000.8 338.3 1017.5 337.7 1030 338C1042.5 338.3 1055 339.2 1065 342C1075 344.8 1083.5 348.7 1090 355C1096.5 361.3 1101.7 370.8 1104 380C1106.3 389.2 1106.3 400.8 1104 410C1101.7 419.2 1096.5 428 1090 435C1083.5 442 1074.2 447.5 1065 452C1055.8 456.5 1045 460.7 1035 462C1025 463.3 1015 462.8 1005 460C995 457.2 982.8 450.8 975 445C967.2 439.2 962.2 433.3 958 425C953.8 416.7 951 405 950 395Z" fill="#585858" filter="url(#b1)"/>
<ellipse cx="1022" cy="379" rx="27" ry="13" transform="rotate(25 1022 379)" fill="#a4a4a4" filter="url(#b2)"/>
<path d="M1112.4 287.5C1114.7 287.3 1116.8 288.1 1118.6 291C1120.4 293.9 1121.9 301.3 1123.5 304.8C1125.1 308.3 1126.8 307.9 1128 312C1129.2 316.1 1130.6 323.3 1131 329.5C1131.4 335.7 1130.8 342.4 1130.4 349C1130 355.6 1130.1 363.2 1128.5 369C1126.9 374.8 1123.5 379.7 1121 383.8C1118.5 387.9 1116.9 390.2 1113.6 393.7C1110.3 397.2 1105.5 402.1 1101 404.8C1096.5 407.5 1089.7 411.3 1086.4 409.8C1083.2 408.3 1083.6 400.7 1081.5 396C1079.4 391.3 1074.9 386.7 1073.6 381.4C1072.3 376.1 1072.7 368.3 1073.6 364C1074.5 359.7 1076 359.3 1079 355.4C1082 351.5 1088.1 344.9 1091.4 340.6C1094.7 336.3 1097.4 333.9 1098.8 329.5C1100.2 325.1 1099.8 318.9 1100 314C1100.2 309.1 1099.2 303.4 1100 299.8C1100.8 296.2 1102.9 294.4 1105 292.4C1107.1 290.3 1110.1 287.7 1112.4 287.5Z" fill="#949494"/>
<path d="M860 400C861.2 394 861.8 387.8 866 384C870.2 380.2 878.5 378.2 885 377C891.5 375.8 897.8 376.5 905 377C912.2 377.5 921.8 377.2 928 380C934.2 382.8 939.2 388.2 942 394C944.8 399.8 945.3 408 945 415C944.7 422 944.2 431 940 436C935.8 441 926.3 445 920 445C913.7 445 907.8 436 902 436C896.2 436 891 444.3 885 445C879 445.7 870.3 444.2 866 440C861.7 435.8 860 426.7 859 420C858 413.3 858.8 406 860 400Z" fill="#9c9c9c" filter="url(#b1)"/>
<path d="M862 412C863 406 867.7 403.3 872 402C876.3 400.7 883.3 402.7 888 404C892.7 405.3 895.7 410 900 410C904.3 410 909 404.7 914 404C919 403.3 925.3 403.7 930 406C934.7 408.3 940.3 413 942 418C943.7 423 943.3 431.7 940 436C936.7 440.3 928.2 444.3 922 444C915.8 443.7 909.3 433.8 903 434C896.7 434.2 890.2 444.3 884 445C877.8 445.7 869.7 443.5 866 438C862.3 432.5 861 418 862 412Z" fill="#dcdcdc" filter="url(#b2)"/>
<path d="M865 420C866.2 415.7 871.8 409.3 876 408C880.2 406.7 885.7 410.3 890 412C894.3 413.7 897.7 418.3 902 418C906.3 417.7 911.3 410.7 916 410C920.7 409.3 926.2 411.3 930 414C933.8 416.7 938.3 422 939 426C939.7 430 937.2 435.7 934 438C930.8 440.3 925.2 441.3 920 440C914.8 438.7 909 430 903 430C897 430 889.7 439.3 884 440C878.3 440.7 872.2 437.3 869 434C865.8 430.7 863.8 424.3 865 420Z" fill="#fff" filter="url(#b1)"/>
<path d="M878 468C878.3 465.7 881.3 462.5 884 462C886.7 461.5 891.2 465 894 465C896.8 465 898.7 462 901 462C903.3 462 905.5 465.2 908 465C910.5 464.8 913.5 460.8 916 461C918.5 461.2 922 463.8 923 466C924 468.2 923.8 472 922 474C920.2 476 914.3 475.7 912 478C909.7 480.3 908.7 483 908 488C907.3 493 908.6 503.7 908 508C907.4 512.3 905.7 514 904.5 514C903.3 514 901.6 512.3 901 508C900.4 503.7 901.8 493 901 488C900.2 483 899.2 480 896 478C892.8 476 885 477.7 882 476C879 474.3 877.7 470.3 878 468Z" fill="#fff"/>
<path d="M904.500 486v22" stroke="#999" stroke-width="2" fill="none"/>
<ellipse cx="903" cy="470" rx="4" ry="3" fill="#8a8a8a"/>
<path d="M694 463 Q712 472 728 483 Q710 480 694 463Z" fill="#000" stroke="#000" stroke-width="2"/>
<path d="M816 476 Q840 462 856 438 Q846 466 816 476Z" fill="#000" stroke="#000" stroke-width="2"/>
<path d="M985 453 Q1020 468 1060 456 Q1090 442 1107 419 Q1088 456 1050 466 Q1012 472 985 453Z" fill="#000" stroke="#000" stroke-width="1.500"/>
<ellipse cx="631.5" cy="381" rx="20" ry="4.5" transform="rotate(75 631.5 381)" fill="#777" stroke="#fff" stroke-width="3"/>
<ellipse cx="731" cy="491" rx="16.5" ry="4" transform="rotate(18 731 491)" fill="#777" stroke="#fff" stroke-width="3"/>
<ellipse cx="836.5" cy="473" rx="15.5" ry="3.5" transform="rotate(-30 836.5 473)" fill="#777" stroke="#fff" stroke-width="3"/>
<ellipse cx="1064" cy="464" rx="16.5" ry="4" transform="rotate(-25 1064 464)" fill="#777" stroke="#fff" stroke-width="3"/>
<ellipse cx="1148" cy="348" rx="21" ry="5.5" transform="rotate(100 1148 348)" fill="#777" stroke="#fff" stroke-width="3"/>
</g></g>
<path d="M771.5 164.4C776.8 164.9 783.2 166.6 784.6 170C786 173.4 780.8 180 780 185C779.2 190 779.8 195 780 200C780.2 205 779.5 212.2 781 215C782.5 217.8 787.2 214.8 789 217C790.8 219.2 792.2 224.6 792 228C791.8 231.4 790.5 235 788 237.5C785.5 240 780 240.4 777 243C774 245.6 772.2 249.5 770 253C767.8 256.5 766.6 259.1 764 264C761.4 268.9 756.3 278.2 754.6 282.5C752.9 286.8 752.1 288.4 754 290C755.9 291.6 759.2 291.9 766 292.4C772.8 292.9 785.9 292.8 795 293C804.1 293.2 815.6 292.4 820.7 293.6C825.8 294.8 824.4 296.1 825.6 300C826.8 303.9 827.8 311.7 828 317C828.2 322.3 827.4 327 827 332C826.6 337 827.1 340.8 825.6 347C824.1 353.2 821.8 361.7 818 369C814.2 376.3 808.3 384.4 803 391C797.7 397.6 791.3 401.5 786 408.5C780.7 415.5 775.9 425.6 771 433C766.1 440.4 760.9 447.6 756.4 453C751.9 458.4 749.4 463.4 744 465.4C738.6 467.4 729.3 466.2 724 465C718.7 463.8 716.5 460.4 712 458C707.5 455.6 701.5 453.1 697 450.6C692.5 448.1 687.7 445.5 685 443C682.3 440.5 683.9 439.4 681 435.7C678.1 432 671.4 425.5 667.5 421C663.6 416.5 660.9 413.5 657.6 408.5C654.3 403.5 650.4 395.6 647.7 391C645 386.4 643 386.3 641.5 381C640 375.7 639.5 368.8 639 359C638.5 349.2 638.7 333.5 638.6 322C638.5 310.5 638.4 296.6 638.6 290C638.8 283.4 639.1 285.3 640 282.5C640.9 279.7 642.4 276.8 644 273C645.6 269.2 647.4 265 649.6 260C651.8 255 654.5 248.7 657 243C659.5 237.3 661.1 231.3 664.6 226C668.1 220.7 674.1 215.5 677.8 211C681.5 206.5 683 203 687 199C691 195 696.7 190.4 702 187C707.3 183.6 713.7 180.6 719 178.4C724.3 176.2 728.4 175.9 734 174C739.6 172.1 746.5 168.6 752.8 167C759 165.4 766.2 163.9 771.5 164.4Z" fill="#3282d2" fill-opacity=".25"/>
<path d="M772.2 165H774.4H776.6H778.8H781V167.2H783.2V169.4H785.4V171.6V173.8H783.2V176V178.2H781V180.4V182.6V184.8H778.8V187V189.2V191.4V193.6V195.8V198H781V200.2V202.4V204.6V206.8V209V211.2V213.4V215.6H783.2H785.4H787.6H789.8V217.8V220H792V222.2V224.4V226.6V228.8V231V233.2H789.8V235.4V237.6H787.6H785.4V239.8H783.2H781V242H778.8H776.6V244.2H774.4V246.4H772.2V248.6V250.8H770V253V255.2H767.8V257.4V259.6H765.6V261.8H763.4V264V266.2H761.2V268.4V270.6H759V272.8V275H756.8V277.2V279.4H754.6V281.6V283.8H752.4V286V288.2V290.4H754.6H756.8V292.6H759H761.2H763.4H765.6H767.8H770H772.2H774.4H776.6H778.8H781H783.2H785.4H787.6H789.8H792H794.2H796.4H798.6H800.8H803H805.2H807.4H809.6H811.8H814H816.2H818.4H820.6V294.8H822.8H825V297V299.2V301.4H827.2V303.6V305.8V308V310.2V312.4V314.6V316.8V319V321.2V323.4V325.6V327.8V330V332.2V334.4V336.6V338.8V341V343.2V345.4H825V347.6V349.8V352V354.2H822.8V356.4V358.6V360.8H820.6V363V365.2H818.4V367.4V369.6H816.2V371.8V374H814V376.2V378.4H811.8V380.6H809.6V382.8H807.4V385V387.2H805.2V389.4H803V391.6H800.8V393.8H798.6V396H796.4V398.2H794.2V400.4H792V402.6H789.8V404.8H787.6V407H785.4V409.2V411.4H783.2V413.6H781V415.8V418H778.8V420.2V422.4H776.6V424.6H774.4V426.8V429H772.2V431.2V433.4H770V435.6H767.8V437.8V440H765.6V442.2H763.4V444.4H761.2V446.6V448.8H759V451H756.8V453.2H754.6V455.4V457.6H752.4V459.8H750.2V462H748V464.2H745.8H743.6V466.4H741.4H739.2H737H734.8H732.6H730.4H728.2H726V464.2H723.8H721.6H719.4V462H717.2H715V459.8H712.8V457.6H710.6H708.4V455.4H706.2H704V453.2H701.8H699.6V451H697.4H695.2V448.8H693H690.8V446.6H688.6V444.4H686.4H684.2V442.2V440H682V437.8V435.6H679.8V433.4H677.6V431.2H675.4V429H673.2V426.8H671V424.6H668.8V422.4H666.6V420.2V418H664.4V415.8H662.2V413.6H660V411.4H657.8V409.2V407H655.6V404.8V402.6H653.4V400.4H651.2V398.2V396H649V393.8V391.6H646.8V389.4V387.2H644.6V385H642.4V382.8V380.6H640.2V378.4V376.2V374V371.8V369.6V367.4V365.2V363V360.8H638V358.6V356.4V354.2V352V349.8V347.6V345.4V343.2V341V338.8V336.6V334.4V332.2V330V327.8V325.6V323.4V321.2V319V316.8V314.6V312.4V310.2V308V305.8V303.6V301.4V299.2V297V294.8V292.6V290.4V288.2V286V283.8H640.2V281.6V279.4H642.4V277.2V275H644.6V272.8V270.6V268.4H646.8V266.2V264H649V261.8V259.6H651.2V257.4V255.2V253H653.4V250.8V248.6H655.6V246.4V244.2H657.8V242V239.8V237.6H660V235.4V233.2H662.2V231V228.8H664.4V226.6V224.4H666.6V222.2H668.8V220H671V217.8H673.2V215.6H675.4V213.4H677.6V211.2H679.8V209V206.8H682V204.6H684.2V202.4V200.2H686.4V198H688.6V195.8H690.8H693V193.6H695.2V191.4H697.4V189.2H699.6H701.8V187H704V184.8H706.2H708.4V182.6H710.6H712.8V180.4H715H717.2V178.2H719.4H721.6H723.8V176H726H728.2H730.4V173.8H732.6H734.8H737V171.6H739.2H741.4H743.6V169.4H745.8H748V167.2H750.2H752.4H754.6H756.8V165H759H761.2H763.4H765.6H767.8H770H772.2Z" fill="none" stroke="#2f80d6" stroke-width="1.100"/>
<path d="M697 413.5C699.3 413 702.3 412.5 705 412.5C707.7 412.5 710.2 412.9 713 413.5C715.8 414.1 719.3 415 722 416C724.7 417 727.2 418 729 419.7C730.8 421.4 732.2 423.8 733 426C733.8 428.2 733.5 430 734 433C734.5 436 735.7 440.2 736 444C736.3 447.8 737 452.7 736 455.5C735 458.3 732.3 459.9 730 461C727.7 462.1 725 462.9 722 462.4C719 461.9 715 459.3 712 458C709 456.7 706.5 455.7 704 454.5C701.5 453.3 699.3 451.9 697 450.6C694.7 449.4 692 448.3 690 447C688 445.7 686.5 444.9 685 443C683.5 441.1 681.3 438.4 681 435.7C680.7 433 682.2 429.7 683 427C683.8 424.3 684.7 421.6 686 419.7C687.3 417.8 689.2 416.5 691 415.5C692.8 414.5 694.7 414 697 413.5Z" fill="#b89a8c" fill-opacity=".85"/>
<path d="M697.4 413.6H699.6H701.8H704V411.4H706.2V413.6H708.4H710.6H712.8H715H717.2V415.8H719.4H721.6H723.8V418H726H728.2V420.2H730.4V422.4H732.6V424.6V426.8V429V431.2H734.8V433.4V435.6V437.8V440V442.2H737V444.4V446.6V448.8V451V453.2V455.4H734.8V457.6H732.6V459.8H730.4V462H728.2H726H723.8H721.6H719.4H717.2V459.8H715H712.8V457.6H710.6H708.4V455.4H706.2H704V453.2H701.8H699.6V451H697.4H695.2V448.8H693H690.8V446.6H688.6H686.4V444.4H684.2V442.2V440H682V437.8V435.6V433.4V431.2V429V426.8H684.2V424.6V422.4V420.2H686.4V418H688.6V415.8H690.8H693V413.6H695.2H697.4Z" fill="none" stroke="#ffd2b4" stroke-width="1.200"/>
<path d="M1112.4 287.5C1114.7 287.3 1116.8 288.1 1118.6 291C1120.4 293.9 1121.9 301.3 1123.5 304.8C1125.1 308.3 1126.8 307.9 1128 312C1129.2 316.1 1130.6 323.3 1131 329.5C1131.4 335.7 1130.8 342.4 1130.4 349C1130 355.6 1130.1 363.2 1128.5 369C1126.9 374.8 1123.5 379.7 1121 383.8C1118.5 387.9 1116.9 390.2 1113.6 393.7C1110.3 397.2 1105.5 402.1 1101 404.8C1096.5 407.5 1089.7 411.3 1086.4 409.8C1083.2 408.3 1083.6 400.7 1081.5 396C1079.4 391.3 1074.9 386.7 1073.6 381.4C1072.3 376.1 1072.7 368.3 1073.6 364C1074.5 359.7 1076 359.3 1079 355.4C1082 351.5 1088.1 344.9 1091.4 340.6C1094.7 336.3 1097.4 333.9 1098.8 329.5C1100.2 325.1 1099.8 318.9 1100 314C1100.2 309.1 1099.2 303.4 1100 299.8C1100.8 296.2 1102.9 294.4 1105 292.4C1107.1 290.3 1110.1 287.7 1112.4 287.5Z" fill="#c8304a" fill-opacity=".42"/>
<path d="M1113.2 288.2H1115.4H1117.6V290.4H1119.8V292.6V294.8V297H1122V299.2V301.4V303.6H1124.2V305.8V308H1126.4V310.2H1128.6V312.4V314.6V316.8V319H1130.8V321.2V323.4V325.6V327.8V330V332.2V334.4V336.6V338.8V341V343.2V345.4V347.6V349.8V352V354.2V356.4V358.6V360.8H1128.6V363V365.2V367.4V369.6V371.8H1126.4V374V376.2H1124.2V378.4V380.6H1122V382.8H1119.8V385V387.2H1117.6V389.4H1115.4V391.6V393.8H1113.2V396H1111V398.2H1108.8V400.4H1106.6V402.6H1104.4H1102.2V404.8H1100V407H1097.8H1095.6V409.2H1093.4H1091.2H1089H1086.8H1084.6V407V404.8H1082.4V402.6V400.4V398.2V396H1080.2V393.8V391.6H1078V389.4H1075.8V387.2V385H1073.6V382.8V380.6V378.4V376.2V374V371.8V369.6V367.4V365.2V363V360.8H1075.8V358.6H1078V356.4H1080.2V354.2V352H1082.4V349.8H1084.6V347.6H1086.8V345.4H1089V343.2H1091.2V341V338.8H1093.4V336.6H1095.6V334.4H1097.8V332.2V330H1100V327.8V325.6V323.4V321.2V319V316.8V314.6V312.4V310.2V308V305.8V303.6V301.4V299.2V297H1102.2V294.8H1104.4V292.6H1106.6V290.4H1108.8V288.2H1111H1113.2Z" fill="none" stroke="#e8102c" stroke-width="1.200"/>
<text x="543.500" y="518" font-family="Liberation Serif,serif" font-size="14" fill="#fff">B: liver_102</text>
</svg></div>
<div class="a" style="left:691px;top:0;width:690px;height:15px;background:linear-gradient(#6a7ad8,#7b8cf0 60%,#7a8aee)"><svg style="left:3px;top:3px" width="12" height="9" viewBox="0 0 12 9"><path d="M0 4.500h5M5 2.500v4l2-1h3v-2h-3z" fill="#223" stroke="#223" stroke-width=".8"/></svg><div class="a" style="left:17px;top:0;width:13px;height:15px;background:#b4bcf4"></div><div class="t" style="left:17px;top:1px;width:13px;text-align:center">1</div><svg style="left:33px;top:1px" width="13" height="13" viewBox="0 0 13 13" fill="none" stroke="#223"><circle cx="6.500" cy="6.500" r="3"/><path d="M6.500 0v13M0 6.500h13" stroke-width=".8"/><circle cx="6.500" cy="6.500" r="1" fill="#223"/></svg></div>
<div class="a" style="left:691px;top:15px;width:690px;height:447px;overflow:hidden"><svg id="v3d" style="left:0;top:0" width="690" height="447" viewBox="1230 95 690 447">
<defs>
<linearGradient id="bg3" x1="0" y1="0" x2="0" y2="1"><stop offset="0" stop-color="#7478c2"/><stop offset="1" stop-color="#c7c7e9"/></linearGradient>
<filter id="bone" x="0" y="0" width="100%" height="100%" color-interpolation-filters="sRGB"><feTurbulence type="fractalNoise" baseFrequency="1.1" numOctaves="1" seed="2" result="n"/><feColorMatrix in="n" type="matrix" values="0 0 0 0 .66  0 0 0 0 .22  0 0 0 0 .22  6 0 0 0 -3.500" result="r"/><feComposite in="r" in2="SourceAlpha" operator="in" result="rs"/><feMerge><feMergeNode in="SourceGraphic"/><feMergeNode in="rs"/></feMerge></filter>
<filter id="bone2" x="0" y="0" width="100%" height="100%" color-interpolation-filters="sRGB"><feTurbulence type="fractalNoise" baseFrequency="0.16 0.22" numOctaves="3" seed="8" result="n"/><feColorMatrix in="n" type="matrix" values="0 0 0 0 .62  0 0 0 0 .20  0 0 0 0 .22  5 0 0 0 -2.450" result="r"/><feComposite in="r" in2="SourceAlpha" operator="in" result="rs"/><feMerge><feMergeNode in="SourceGraphic"/><feMergeNode in="rs"/></feMerge></filter>
<filter id="wav" x="0" y="0" width="100%" height="100%" color-interpolation-filters="sRGB"><feTurbulence type="fractalNoise" baseFrequency="0.05 0.09" numOctaves="2" seed="3" result="n"/><feColorMatrix in="n" type="matrix" values="0 0 0 0 .35  0 0 0 0 0  0 0 0 0 .05  3.500 0 0 0 -1.500" result="r"/><feComposite in="r" in2="SourceAlpha" operator="in" result="rs"/><feMerge><feMergeNode in="SourceGraphic"/><feMergeNode in="rs"/></feMerge></filter>
<radialGradient id="tum" cx="40%" cy="35%" r="70%"><stop offset="0" stop-color="#a4abb2"/><stop offset=".7" stop-color="#878e96"/><stop offset="1" stop-color="#6a7580"/></radialGradient>
<linearGradient id="spl" x1="0" y1="0" x2="1" y2="1"><stop offset="0" stop-color="#d80c30"/><stop offset=".5" stop-color="#e8103a"/><stop offset="1" stop-color="#f0143c"/></linearGradient>
<linearGradient id="livg" x1="0" y1="0" x2="0" y2="1"><stop offset="0" stop-color="#6a92cc"/><stop offset=".4" stop-color="#4f86c6"/><stop offset="1" stop-color="#4a82c2"/></linearGradient>
</defs>
<rect x="1230" y="95" width="690" height="447" fill="url(#bg3)"/>
<path d="M1230 130 L1313.600 124 L1590 122.600 L1812 122.600 L1920 129 M1230 147.500 L1590 146.500 L1812 146 L1920 145 M1313.600 124 L1345.300 542 M1812 122.600 L1804 262 M1796 367 L1784 542" fill="none" stroke="#f414e8" stroke-width="1.100"/>
<g opacity=".9"><path d="M1271 134C1269.5 140 1263.5 156.5 1262 170C1260.5 183.5 1261 200 1262 215C1263 230 1265.8 247.5 1268 260C1270.2 272.5 1273.8 285 1275 290" fill="none" stroke="#8a3038" stroke-width="5" stroke-linecap="round"/><path d="M1281 140C1280.2 145.8 1277.2 162.5 1276 175C1274.8 187.5 1273.7 201.7 1274 215C1274.3 228.3 1276.3 240.8 1278 255C1279.7 269.2 1282 288.3 1284 300C1286 311.7 1289 320.8 1290 325" fill="none" stroke="#8a3038" stroke-width="4.5" stroke-linecap="round"/><path d="M1293 150C1291.5 155.8 1286.2 172.5 1284 185C1281.8 197.5 1280.2 212.5 1280 225C1279.8 237.5 1282.5 254.2 1283 260" fill="none" stroke="#8a3038" stroke-width="2.5" stroke-linecap="round"/><path d="M1865 135C1867.5 140.8 1875.8 156.7 1880 170C1884.2 183.3 1888 200 1890 215C1892 230 1892.3 245.8 1892 260C1891.7 274.2 1890.3 288.3 1888 300C1885.7 311.7 1879.7 325 1878 330" fill="none" stroke="#8a3038" stroke-width="6" stroke-linecap="round"/><path d="M1857 135C1859.5 140.8 1868.2 156.7 1872 170C1875.8 183.3 1878.7 200 1880 215C1881.3 230 1881 245.8 1880 260C1879 274.2 1876.3 289.2 1874 300C1871.7 310.8 1867.3 320.8 1866 325" fill="none" stroke="#8a3038" stroke-width="4.5" stroke-linecap="round"/><path d="M1848 133C1850 137.5 1857 150.5 1860 160C1863 169.5 1865 185 1866 190" fill="none" stroke="#8a3038" stroke-width="3" stroke-linecap="round"/></g>
<path d="M1322 129 L1296 130 L1271 134 L1278 152 L1292 158 L1306 146Z" fill="#80503f"/>
<path d="M1517 130 L1556 134 L1558 141 L1548 147 L1536 143Z" fill="#7a5848" opacity="0"/>
<path d="M1516 131 L1557 135 L1557 142 L1547 139Z" fill="#705040" opacity="0"/>
<path d="M1847 131 L1880 133 L1892 139 L1886 156 L1872 150 L1862 140Z" fill="#80503f"/>
<defs><clipPath id="spclip"><path d="M1545 127C1548 123.2 1552.5 123 1560 122C1567.5 121 1581.3 120.7 1590 121C1598.7 121.3 1607.7 120.8 1612 124C1616.3 127.2 1616.3 134 1616 140C1615.7 146 1609.7 152.5 1610 160C1610.3 167.5 1617.7 176.7 1618 185C1618.3 193.3 1612.3 202.2 1612 210C1611.7 217.8 1616.7 225.3 1616 232C1615.3 238.7 1608.3 242.8 1608 250C1607.7 257.2 1611.7 266.7 1614 275C1616.3 283.3 1620 289.2 1622 300C1624 310.8 1625 326.7 1626 340C1627 353.3 1626.7 370 1628 380C1629.3 390 1633.3 391.7 1634 400C1634.7 408.3 1631 420.8 1632 430C1633 439.2 1639.7 446.7 1640 455C1640.3 463.3 1634 471.7 1634 480C1634 488.3 1639.3 493.7 1640 505C1640.7 516.3 1655.7 540.8 1638 548C1620.3 555.2 1551.7 554.3 1534 548C1516.3 541.7 1531.3 520.5 1532 510C1532.7 499.5 1538 493.3 1538 485C1538 476.7 1532 467.5 1532 460C1532 452.5 1538 447.5 1538 440C1538 432.5 1531.7 422.5 1532 415C1532.3 407.5 1539 405.8 1540 395C1541 384.2 1538 365.8 1538 350C1538 334.2 1538.7 313.3 1540 300C1541.3 286.7 1544.3 278.3 1546 270C1547.7 261.7 1550.3 257.5 1550 250C1549.7 242.5 1544.3 233.3 1544 225C1543.7 216.7 1548.3 208.3 1548 200C1547.7 191.7 1541.7 182.5 1542 175C1542.3 167.5 1550 160 1550 155C1550 150 1542.8 149.7 1542 145C1541.2 140.3 1542 130.8 1545 127Z" /></clipPath></defs>
<g filter="url(#bone)"><path d="M1377.2 112 L1375.8 113.1 L1374 114.3 L1371.7 115.7 L1369.2 117.3 L1366.4 119 L1363.4 120.9 L1360.2 122.8 L1357 124.8 L1353.7 126.9 L1350.5 129 L1347.3 131.1 L1344.3 133.2 L1341.4 135.3 L1338.8 137.4 L1336.2 139.5 L1333.7 141.6 L1331.2 143.8 L1328.7 146 L1326.2 148.2 L1323.8 150.4 L1321.5 152.7 L1319.2 154.9 L1316.9 157.2 L1314.7 159.5 L1312.6 161.8 L1310.5 164.1 L1308.1 166.8 L1305.7 169.6 L1303.4 172.4 L1301.2 175.3 L1299.1 178.2 L1297.1 181 L1295.3 183.7 L1293.5 186.3 L1291.9 188.8 L1290.3 191.1 L1288.9 193.2 L1286.5 196.5 L1284.5 199.3 L1282.7 201.9 L1281 204.5 L1279.5 207.3 L1278 210.6 L1276.8 214.1 L1275.7 217.8 L1274.7 221.8 L1273.8 225.6 L1273 229.1 L1272.5 232.1 L1272.1 234.2 L1277.9 235.8 L1278.7 233.8 L1279.7 230.9 L1280.8 227.5 L1282 223.9 L1283.3 220.3 L1284.7 217.1 L1286 214.4 L1287.5 211.9 L1289 209.8 L1290.7 207.9 L1292.6 205.8 L1294.9 203.3 L1297.7 200.2 L1299.5 198.2 L1301.3 196.1 L1303.3 193.8 L1305.3 191.5 L1307.5 189.1 L1309.6 186.7 L1311.9 184.2 L1314.2 181.8 L1316.5 179.5 L1318.9 177.3 L1321.3 175.1 L1323.4 173.4 L1325.7 171.7 L1328 170 L1330.4 168.3 L1332.9 166.6 L1335.4 164.9 L1337.9 163.3 L1340.5 161.6 L1343.1 160 L1345.7 158.5 L1348.3 156.9 L1351 155.5 L1353.6 154.1 L1356.2 152.7 L1359.1 151.3 L1362.2 149.8 L1365.4 148.3 L1368.7 146.9 L1372 145.4 L1375.3 144.1 L1378.4 142.8 L1381.4 141.6 L1384.2 140.4 L1386.7 139.5 L1389 138.6 L1390.8 138Z" fill="#ac544a"/><path d="M1380.6 118.2 L1379.1 119.1 L1377.2 120.3 L1374.9 121.6 L1372.3 123.1 L1369.5 124.8 L1366.4 126.5 L1363.3 128.3 L1360 130.2 L1356.7 132.2 L1353.5 134.1 L1350.3 136.1 L1347.3 138.1 L1344.5 140.1 L1341.9 142 L1339.3 144 L1336.8 146 L1334.2 148.1 L1331.7 150.1 L1329.2 152.2 L1326.8 154.4 L1324.4 156.5 L1322.1 158.7 L1319.8 160.8 L1317.6 163 L1315.5 165.2 L1313.4 167.4 L1310.9 170 L1308.5 172.7 L1306.2 175.4 L1304 178.2 L1301.9 181 L1299.9 183.7 L1298 186.4 L1296.2 188.9 L1294.5 191.4 L1292.9 193.7 L1291.4 195.7 L1288.9 199 L1286.8 201.7 L1285 204.2 L1283.4 206.7 L1281.8 209.4 L1280.3 212.5 L1279.1 215.8 L1277.9 219.5 L1276.9 223.4 L1275.9 227.2 L1275.1 230.7 L1274.5 233.6 L1274 235.7 L1277.6 236.7 L1278.3 234.6 L1279.2 231.8 L1280.3 228.4 L1281.4 224.7 L1282.7 221.1 L1284 217.7 L1285.3 214.9 L1286.8 212.2 L1288.3 210 L1289.9 208 L1291.8 205.8 L1294.1 203.2 L1296.8 200.1 L1298.5 198 L1300.3 195.9 L1302.2 193.6 L1304.2 191.2 L1306.3 188.7 L1308.4 186.2 L1310.7 183.7 L1312.9 181.2 L1315.2 178.8 L1317.6 176.5 L1320 174.2 L1322.2 172.4 L1324.4 170.6 L1326.7 168.8 L1329.1 166.9 L1331.5 165.1 L1334 163.4 L1336.5 161.6 L1339 159.9 L1341.6 158.1 L1344.2 156.5 L1346.8 154.8 L1349.5 153.2 L1352.1 151.7 L1354.8 150.2 L1357.7 148.6 L1360.8 147.1 L1364 145.5 L1367.3 143.9 L1370.6 142.3 L1373.8 140.9 L1376.9 139.5 L1379.9 138.1 L1382.6 137 L1385.1 135.9 L1387.3 135 L1389 134.2Z" fill="#d9cd68" filter="url(#b1)"/><path d="M1272.1 234.1 L1271.6 235.9 L1270.9 238.2 L1270 241.1 L1269 244.2 L1268 247.7 L1267.1 251.2 L1266.2 254.8 L1265.6 258.4 L1265.3 261.8 L1265.3 265.1 L1265.4 268.4 L1265.7 271.7 L1266.1 275 L1266.6 278.3 L1267.3 281.6 L1268 284.7 L1268.9 287.8 L1269.8 290.7 L1271.1 294 L1272.6 297.1 L1274.3 300.2 L1276 303.1 L1277.8 305.8 L1279.5 308.4 L1281 310.7 L1282.2 312.9 L1284.3 317 L1286 320.7 L1287.3 323.6 L1288.3 325.7 L1291.7 324.3 L1290.8 322.1 L1289.5 319.1 L1287.8 315.3 L1285.8 311.1 L1284.5 308.7 L1283 306.2 L1281.4 303.5 L1279.7 300.8 L1278.1 298 L1276.6 295.1 L1275.3 292.2 L1274.2 289.3 L1273.4 286.5 L1272.7 283.6 L1272.1 280.6 L1271.5 277.5 L1271.1 274.4 L1270.8 271.2 L1270.6 268.1 L1270.6 265.1 L1270.7 262.2 L1271 259.2 L1271.7 256 L1272.5 252.6 L1273.5 249.2 L1274.5 246 L1275.6 242.9 L1276.5 240.1 L1277.3 237.7 L1277.9 235.9Z" fill="#9a4040"/><path d="M1274 235.7 L1273.5 237.5 L1272.8 239.8 L1271.9 242.6 L1270.9 245.8 L1269.8 249.2 L1268.9 252.7 L1268.1 256.3 L1267.5 259.8 L1267.1 263.1 L1267.1 266.3 L1267.2 269.5 L1267.4 272.8 L1267.8 276.1 L1268.4 279.4 L1269 282.6 L1269.7 285.7 L1270.5 288.7 L1271.4 291.7 L1272.7 294.8 L1274.1 298 L1275.8 301 L1277.5 303.8 L1279.3 306.6 L1280.9 309.2 L1282.4 311.6 L1283.7 313.8 L1285.8 317.9 L1287.5 321.6 L1288.8 324.5 L1289.8 326.7 L1291.8 325.7 L1290.9 323.6 L1289.6 320.6 L1288 316.9 L1285.9 312.6 L1284.6 310.3 L1283.1 307.8 L1281.5 305.2 L1279.8 302.4 L1278.2 299.6 L1276.6 296.7 L1275.3 293.8 L1274.2 290.7 L1273.4 288 L1272.6 285 L1271.9 282 L1271.4 278.9 L1270.9 275.7 L1270.6 272.5 L1270.4 269.4 L1270.4 266.3 L1270.5 263.3 L1270.8 260.2 L1271.4 257 L1272.3 253.6 L1273.2 250.1 L1274.3 246.8 L1275.3 243.7 L1276.3 240.9 L1277.1 238.6 L1277.6 236.7Z" fill="#d9cd68" filter="url(#b1)"/><path d="M1769.6 136.4 L1771.3 137.3 L1773.5 138.4 L1775.9 139.7 L1778.5 141.1 L1781.3 142.6 L1784.3 144.2 L1787.3 145.9 L1790.3 147.7 L1793.4 149.5 L1796.3 151.4 L1799.1 153.4 L1801.8 155.3 L1803.8 156.8 L1805.9 158.5 L1808 160.2 L1810.2 162.1 L1812.4 164 L1814.6 166 L1816.8 168.1 L1819.1 170.2 L1821.3 172.3 L1823.5 174.4 L1825.7 176.6 L1827.8 178.7 L1830 180.8 L1832 182.9 L1834 184.9 L1836 186.9 L1838.3 189.3 L1840.6 191.6 L1842.8 193.9 L1845 196.1 L1847.1 198.3 L1849 200.4 L1851 202.5 L1852.8 204.6 L1854.6 206.8 L1856.3 208.9 L1857.9 211.2 L1859.5 213.5 L1860.9 215.9 L1862.2 218.3 L1863.4 220.8 L1864.6 223.3 L1865.8 225.9 L1866.9 228.5 L1867.9 231.3 L1868.9 234 L1869.9 236.8 L1870.8 239.7 L1871.7 242.5 L1872.5 245.5 L1873.3 248.4 L1874 251.3 L1874.7 254.3 L1875.3 257.1 L1875.9 259.9 L1876.4 262.9 L1876.9 265.9 L1877.3 269 L1877.7 272.1 L1878.1 275.2 L1878.4 278.3 L1878.7 281.4 L1879 284.5 L1879.2 287.5 L1879.4 290.4 L1879.6 293.2 L1879.8 295.9 L1879.9 298.5 L1880 302.2 L1880 305.9 L1879.8 309.5 L1879.6 313.1 L1879.3 316.5 L1879 319.7 L1878.7 322.7 L1878.5 325.3 L1878.3 327.7 L1878.1 329.5 L1887.9 330.5 L1888.1 328.7 L1888.4 326.5 L1888.8 323.9 L1889.2 320.9 L1889.6 317.6 L1890 314 L1890.4 310.2 L1890.7 306.3 L1890.9 302.3 L1890.9 298.3 L1890.9 295.6 L1890.8 292.8 L1890.8 289.9 L1890.7 286.8 L1890.6 283.7 L1890.4 280.6 L1890.2 277.4 L1890 274.1 L1889.8 270.9 L1889.5 267.6 L1889.1 264.3 L1888.7 261.1 L1888.3 257.9 L1887.8 254.7 L1887.3 251.7 L1886.6 248.5 L1886 245.4 L1885.3 242.2 L1884.5 239.1 L1883.7 235.9 L1882.8 232.8 L1881.9 229.7 L1880.9 226.7 L1879.9 223.7 L1878.8 220.7 L1877.6 217.7 L1876.4 214.8 L1875.1 211.9 L1873.7 209.1 L1872.1 206.1 L1870.5 203.2 L1868.8 200.4 L1867 197.7 L1865.2 195.1 L1863.3 192.5 L1861.3 190 L1859.4 187.5 L1857.4 185.1 L1855.3 182.6 L1853.3 180.2 L1851.2 177.7 L1849 175.1 L1847.2 173 L1845.4 170.7 L1843.4 168.4 L1841.4 166.1 L1839.4 163.7 L1837.3 161.3 L1835.2 158.9 L1833 156.5 L1830.8 154.1 L1828.6 151.8 L1826.4 149.5 L1824.2 147.2 L1822 145 L1819.8 142.8 L1817.6 140.7 L1815.4 138.7 L1812.3 136.1 L1809.1 133.6 L1805.8 131.1 L1802.5 128.8 L1799.3 126.6 L1796.1 124.6 L1793.1 122.6 L1790.3 120.8 L1787.8 119.2 L1785.6 117.8 L1783.8 116.6 L1782.4 115.6Z" fill="#ac544a"/><path d="M1772.8 133.6 L1774.5 134.6 L1776.6 135.7 L1778.9 137 L1781.5 138.4 L1784.4 140 L1787.3 141.7 L1790.4 143.4 L1793.5 145.3 L1796.5 147.2 L1799.6 149.2 L1802.4 151.3 L1805.2 153.4 L1807.2 155 L1809.3 156.7 L1811.5 158.5 L1813.6 160.5 L1815.8 162.5 L1818.1 164.5 L1820.3 166.6 L1822.5 168.8 L1824.7 170.9 L1826.9 173.1 L1829.1 175.3 L1831.2 177.5 L1833.3 179.6 L1835.4 181.8 L1837.3 183.8 L1839.3 185.8 L1841.6 188.3 L1843.8 190.7 L1846 193 L1848.1 195.2 L1850.2 197.4 L1852.2 199.6 L1854.1 201.8 L1856 204 L1857.7 206.2 L1859.5 208.5 L1861.1 210.9 L1862.7 213.3 L1864.1 215.8 L1865.4 218.3 L1866.7 220.8 L1867.9 223.4 L1869.1 226.1 L1870.2 228.8 L1871.2 231.6 L1872.2 234.4 L1873.1 237.3 L1874.1 240.2 L1874.9 243.1 L1875.7 246 L1876.5 249 L1877.2 252 L1877.9 255 L1878.5 257.8 L1879.1 260.8 L1879.6 263.7 L1880 266.8 L1880.5 269.9 L1880.8 273.1 L1881.2 276.2 L1881.5 279.3 L1881.8 282.5 L1882 285.5 L1882.2 288.5 L1882.4 291.5 L1882.5 294.3 L1882.7 297.1 L1882.8 299.7 L1882.9 303.4 L1882.8 307.2 L1882.6 310.9 L1882.4 314.5 L1882.1 317.9 L1881.8 321.1 L1881.4 324.1 L1881.2 326.8 L1880.9 329.1 L1880.8 330.9 L1886.8 331.5 L1887 329.7 L1887.3 327.5 L1887.7 324.9 L1888.1 321.9 L1888.5 318.6 L1888.9 315 L1889.2 311.3 L1889.4 307.4 L1889.6 303.5 L1889.6 299.5 L1889.6 296.9 L1889.5 294.1 L1889.4 291.2 L1889.3 288.2 L1889.2 285.1 L1889 281.9 L1888.8 278.8 L1888.6 275.5 L1888.3 272.3 L1888 269 L1887.6 265.8 L1887.2 262.6 L1886.7 259.5 L1886.2 256.4 L1885.7 253.4 L1885 250.3 L1884.4 247.1 L1883.6 244 L1882.9 240.9 L1882 237.9 L1881.2 234.8 L1880.2 231.8 L1879.3 228.8 L1878.2 225.8 L1877.1 222.8 L1876 220 L1874.7 217.1 L1873.4 214.3 L1872.1 211.6 L1870.5 208.7 L1868.9 205.9 L1867.2 203.2 L1865.4 200.6 L1863.6 198.1 L1861.7 195.6 L1859.8 193.2 L1857.8 190.8 L1855.8 188.4 L1853.7 186 L1851.6 183.5 L1849.5 181.1 L1847.3 178.6 L1845.5 176.4 L1843.6 174.2 L1841.7 172 L1839.6 169.7 L1837.6 167.3 L1835.5 165 L1833.3 162.6 L1831.2 160.3 L1829 158 L1826.8 155.7 L1824.6 153.4 L1822.4 151.2 L1820.2 149.1 L1818 147 L1815.8 145 L1813.6 143 L1810.6 140.6 L1807.5 138.2 L1804.2 135.8 L1801 133.6 L1797.8 131.5 L1794.7 129.5 L1791.7 127.6 L1788.9 125.9 L1786.3 124.3 L1784.1 122.9 L1782.2 121.8 L1780.8 120.8Z" fill="#d9cd68" filter="url(#b1)"/><path d="M1800.6 133.3 L1798.7 133.9 L1796.2 134.6 L1793.3 135.5 L1790 136.4 L1786.4 137.4 L1782.7 138.5 L1779 139.5 L1775.5 140.5 L1772.1 141.5 L1769.1 142.3 L1765.6 143.3 L1762.2 144.2 L1758.8 145.1 L1755.5 145.9 L1752.3 146.8 L1749.4 147.6 L1746.6 148.4 L1744.1 149.3 L1740 150.9 L1736.7 152.5 L1734.4 153.9 L1732.9 154.8 L1735.1 159.2 L1736.9 158.4 L1739.1 157.3 L1742.1 156 L1745.9 154.7 L1748.2 154.2 L1750.9 153.6 L1753.8 153 L1756.9 152.4 L1760.3 151.8 L1763.7 151.1 L1767.3 150.4 L1770.9 149.7 L1774 149 L1777.4 148.3 L1781 147.5 L1784.8 146.6 L1788.5 145.8 L1792.1 145 L1795.5 144.3 L1798.5 143.6 L1801 143.1 L1803 142.7Z" fill="#ac544a"/><path d="M1801.9 136.3 L1800 136.8 L1797.5 137.5 L1794.5 138.3 L1791.2 139.3 L1787.6 140.2 L1783.9 141.2 L1780.2 142.2 L1776.6 143.2 L1773.3 144.1 L1770.2 144.9 L1766.7 145.8 L1763.3 146.7 L1759.8 147.6 L1756.5 148.4 L1753.4 149.2 L1750.4 149.9 L1747.7 150.7 L1745.2 151.5 L1741.2 153 L1738 154.6 L1735.7 155.9 L1734.1 156.9 L1735.5 159.5 L1737.2 158.7 L1739.5 157.6 L1742.5 156.2 L1746.4 154.9 L1748.7 154.3 L1751.4 153.7 L1754.3 153.1 L1757.5 152.4 L1760.8 151.7 L1764.2 151 L1767.8 150.3 L1771.4 149.5 L1774.4 148.8 L1777.8 148 L1781.5 147.2 L1785.2 146.3 L1788.9 145.4 L1792.5 144.6 L1795.9 143.8 L1798.9 143.1 L1801.4 142.6 L1803.3 142.1Z" fill="#d9cd68" filter="url(#b1)"/><path d="M1878.2 329.1 L1878 331.1 L1877.5 333.9 L1876.9 337.4 L1876.4 341.4 L1876.1 345.7 L1876.1 350 L1876.4 353.1 L1876.9 356.2 L1877.5 359.5 L1878.2 362.8 L1879 366.1 L1879.7 369.3 L1880.4 372.5 L1881.1 375.5 L1881.6 378.3 L1882.2 381.9 L1882.7 385.6 L1883.2 389.2 L1883.7 392.6 L1884.1 395.6 L1884.5 398.2 L1884.8 400.1 L1887.2 399.9 L1887.2 398 L1887.2 395.4 L1887.1 392.3 L1887 388.8 L1886.8 385.2 L1886.6 381.4 L1886.4 377.7 L1886.1 374.7 L1885.8 371.6 L1885.4 368.3 L1885 365 L1884.6 361.7 L1884.2 358.5 L1884 355.4 L1883.9 352.5 L1883.9 350 L1884.2 346.3 L1884.8 342.6 L1885.6 339.1 L1886.4 335.9 L1887.2 333.1 L1887.8 330.9Z" fill="#ac544a"/><path d="M1880.8 330.6 L1880.5 332.7 L1880 335.5 L1879.4 338.9 L1878.8 342.8 L1878.4 347 L1878.4 351.2 L1878.7 354.2 L1879.1 357.3 L1879.6 360.5 L1880.2 363.8 L1880.9 367.1 L1881.6 370.3 L1882.2 373.5 L1882.8 376.5 L1883.3 379.4 L1883.8 383 L1884.3 386.7 L1884.7 390.3 L1885.1 393.7 L1885.5 396.8 L1885.8 399.3 L1886 401.3 L1887.6 401.1 L1887.5 399.2 L1887.4 396.6 L1887.3 393.5 L1887.1 390.1 L1886.8 386.4 L1886.6 382.7 L1886.3 379 L1886 376.1 L1885.6 373 L1885.1 369.7 L1884.6 366.4 L1884.2 363.1 L1883.8 359.9 L1883.4 356.7 L1883.2 353.8 L1883.2 351.2 L1883.4 347.4 L1884 343.6 L1884.7 340 L1885.5 336.7 L1886.3 333.9 L1886.8 331.8Z" fill="#d9cd68" filter="url(#b1)"/><path d="M1544.6 130.3 L1542.9 130.3 L1540.8 130.4 L1538.3 130.4 L1535.5 130.4 L1532.4 130.5 L1529 130.5 L1525.5 130.6 L1521.9 130.7 L1518.1 130.9 L1514.4 131.1 L1510.6 131.4 L1506.8 131.8 L1503.2 132.2 L1499.7 132.8 L1496.5 133.4 L1493.3 134 L1490.2 134.8 L1487.1 135.5 L1484 136.4 L1480.9 137.3 L1477.8 138.2 L1474.7 139.1 L1471.6 140.1 L1468.5 141.1 L1465.5 142.1 L1462.4 143.2 L1459.4 144.2 L1456.3 145.2 L1453.3 146.2 L1450.5 147.2 L1447.6 148.2 L1444.8 149.2 L1441.9 150.1 L1439 151.2 L1436.1 152.2 L1433.3 153.2 L1430.4 154.3 L1427.5 155.4 L1424.6 156.5 L1421.7 157.7 L1418.7 158.9 L1415.8 160.1 L1412.9 161.3 L1410 162.6 L1407.1 163.9 L1404.3 165.2 L1401.5 166.5 L1398.7 167.9 L1395.9 169.4 L1393.1 170.9 L1390.4 172.5 L1387.6 174.1 L1384.8 175.6 L1382 177.3 L1379.3 178.9 L1376.6 180.5 L1374 182.1 L1371.3 183.7 L1368.8 185.3 L1366.3 186.9 L1363.8 188.5 L1361.4 190.1 L1358.6 192 L1355.9 193.8 L1353.2 195.7 L1350.6 197.5 L1348 199.4 L1345.5 201.2 L1343.1 203.1 L1340.6 205 L1338.3 206.9 L1336 208.7 L1333.7 210.7 L1331.5 212.6 L1329.3 214.5 L1327.2 216.5 L1324.7 218.9 L1322.2 221.3 L1319.8 223.8 L1317.5 226.3 L1315.2 228.8 L1313.1 231.3 L1311 233.8 L1309 236.2 L1307.1 238.5 L1305.3 240.8 L1303.7 242.9 L1302.1 245 L1299.6 248.5 L1297.4 251.8 L1295.5 255 L1293.9 257.9 L1292.6 260.4 L1291.6 262.4 L1290.8 263.9 L1300.2 269.5 L1301.2 267.9 L1302.4 265.8 L1303.8 263.5 L1305.4 261 L1307.1 258.2 L1309.2 255.4 L1311.5 252.4 L1313.1 250.6 L1314.8 248.6 L1316.6 246.5 L1318.5 244.3 L1320.5 242.1 L1322.6 239.9 L1324.8 237.6 L1327 235.3 L1329.2 233.1 L1331.5 230.9 L1333.9 228.8 L1336.2 226.7 L1338.3 225 L1340.4 223.3 L1342.6 221.6 L1344.8 219.9 L1347.1 218.2 L1349.4 216.6 L1351.7 214.9 L1354.1 213.3 L1356.6 211.6 L1359.1 210 L1361.7 208.3 L1364.3 206.7 L1367 205 L1369.8 203.3 L1372.1 201.9 L1374.5 200.5 L1377 199.1 L1379.6 197.7 L1382.2 196.2 L1384.8 194.8 L1387.5 193.3 L1390.2 191.9 L1392.9 190.5 L1395.7 189.1 L1398.4 187.7 L1401.2 186.3 L1403.9 185 L1406.6 183.6 L1409.3 182.3 L1412 181 L1414.5 179.7 L1417.3 178.4 L1420 177.1 L1422.7 175.8 L1425.5 174.6 L1428.2 173.4 L1431 172.2 L1433.7 171 L1436.5 169.9 L1439.2 168.8 L1442 167.7 L1444.8 166.6 L1447.5 165.5 L1450.3 164.5 L1453.1 163.4 L1455.9 162.4 L1458.7 161.4 L1461.7 160.2 L1464.7 159.1 L1467.7 158 L1470.6 156.9 L1473.6 155.9 L1476.5 154.8 L1479.5 153.8 L1482.4 152.8 L1485.3 151.8 L1488.2 150.9 L1491.1 150 L1493.9 149.2 L1496.8 148.5 L1499.6 147.8 L1502.3 147.2 L1505.4 146.7 L1508.6 146.2 L1512 145.8 L1515.5 145.4 L1519 145.1 L1522.6 144.9 L1526.1 144.7 L1529.5 144.5 L1532.8 144.3 L1535.8 144.2 L1538.7 144.1 L1541.3 144 L1543.5 143.8 L1545.4 143.7Z" fill="#ac544a"/><path d="M1545.6 134 L1543.8 134.1 L1541.7 134.2 L1539.2 134.2 L1536.4 134.3 L1533.2 134.3 L1529.9 134.4 L1526.4 134.5 L1522.8 134.6 L1519.1 134.8 L1515.4 135 L1511.7 135.3 L1508 135.7 L1504.4 136.2 L1501 136.7 L1497.9 137.3 L1494.8 138 L1491.7 138.7 L1488.6 139.5 L1485.6 140.3 L1482.5 141.2 L1479.4 142.2 L1476.4 143.1 L1473.3 144.1 L1470.3 145.1 L1467.2 146.2 L1464.2 147.2 L1461.2 148.2 L1458.2 149.3 L1455.1 150.3 L1452.3 151.3 L1449.5 152.3 L1446.6 153.3 L1443.8 154.3 L1440.9 155.3 L1438.1 156.3 L1435.2 157.4 L1432.3 158.5 L1429.5 159.6 L1426.6 160.7 L1423.7 161.9 L1420.8 163 L1417.9 164.3 L1415.1 165.5 L1412.2 166.8 L1409.3 168.1 L1406.5 169.4 L1403.8 170.7 L1401 172.1 L1398.2 173.6 L1395.5 175.1 L1392.7 176.6 L1389.9 178.1 L1387.1 179.7 L1384.4 181.2 L1381.7 182.8 L1379 184.4 L1376.3 186 L1373.7 187.6 L1371.1 189.1 L1368.6 190.7 L1366.2 192.3 L1363.8 193.8 L1361 195.6 L1358.3 197.5 L1355.6 199.3 L1353 201.1 L1350.4 202.9 L1347.9 204.7 L1345.5 206.5 L1343.1 208.4 L1340.8 210.2 L1338.5 212.1 L1336.2 213.9 L1334 215.8 L1331.8 217.7 L1329.7 219.6 L1327.2 221.9 L1324.8 224.3 L1322.4 226.8 L1320.1 229.2 L1317.8 231.7 L1315.7 234.1 L1313.6 236.6 L1311.6 238.9 L1309.7 241.2 L1307.9 243.5 L1306.3 245.6 L1304.7 247.6 L1302.2 251 L1300 254.3 L1298.1 257.4 L1296.6 260.2 L1295.2 262.7 L1294.2 264.7 L1293.4 266.2 L1299.2 269.6 L1300.2 268 L1301.4 266 L1302.7 263.7 L1304.3 261 L1306.1 258.2 L1308.2 255.2 L1310.5 252.2 L1312.1 250.3 L1313.8 248.3 L1315.6 246.2 L1317.5 244 L1319.5 241.7 L1321.6 239.4 L1323.8 237.1 L1326 234.8 L1328.2 232.5 L1330.6 230.3 L1332.9 228.1 L1335.3 226 L1337.4 224.2 L1339.5 222.4 L1341.7 220.7 L1343.9 219 L1346.2 217.3 L1348.5 215.6 L1350.9 213.9 L1353.3 212.2 L1355.7 210.5 L1358.3 208.8 L1360.8 207.1 L1363.5 205.4 L1366.2 203.7 L1369 202 L1371.3 200.6 L1373.8 199.1 L1376.3 197.7 L1378.8 196.2 L1381.4 194.7 L1384.1 193.3 L1386.7 191.8 L1389.5 190.3 L1392.2 188.9 L1394.9 187.4 L1397.7 186 L1400.5 184.6 L1403.2 183.2 L1405.9 181.9 L1408.6 180.5 L1411.3 179.2 L1413.9 177.9 L1416.7 176.6 L1419.4 175.3 L1422.2 174 L1425 172.8 L1427.8 171.6 L1430.5 170.4 L1433.3 169.3 L1436.1 168.1 L1438.9 167 L1441.7 165.9 L1444.5 164.9 L1447.3 163.8 L1450.1 162.8 L1452.9 161.7 L1455.7 160.7 L1458.5 159.7 L1461.5 158.6 L1464.5 157.5 L1467.5 156.4 L1470.4 155.3 L1473.4 154.3 L1476.4 153.2 L1479.4 152.2 L1482.3 151.2 L1485.3 150.3 L1488.2 149.3 L1491.1 148.5 L1494 147.7 L1496.9 147 L1499.8 146.3 L1502.6 145.7 L1505.8 145.1 L1509.1 144.6 L1512.5 144.2 L1516.1 143.9 L1519.7 143.6 L1523.3 143.4 L1526.8 143.2 L1530.2 143 L1533.5 142.9 L1536.6 142.8 L1539.4 142.7 L1542 142.6 L1544.2 142.5 L1546 142.4Z" fill="#d9cd68" filter="url(#b1)"/><path d="M1291.9 263.3 L1293.1 266 L1294.9 270 L1297.3 274 L1300.8 276.9 L1304.3 278.9 L1306.7 280.1 L1309.3 275.9 L1307.3 274.3 L1304.6 272.1 L1302.7 270 L1301.6 267.2 L1300.6 263.5 L1300.1 260.7Z" fill="#ac544a"/><path d="M1294.3 264 L1295.4 266.7 L1296.9 270.7 L1299.1 274.4 L1302.3 277.2 L1305.6 279.2 L1308 280.5 L1309.6 277.9 L1307.5 276.4 L1304.6 274.2 L1302.5 272 L1301.1 268.9 L1300 265.2 L1299.3 262.4Z" fill="#d9cd68" filter="url(#b1)"/><path d="M1607.1 143.7 L1608.9 143.8 L1611.1 144 L1613.6 144.1 L1616.3 144.2 L1619.3 144.4 L1622.5 144.5 L1625.8 144.7 L1629.2 144.9 L1632.7 145.2 L1636.2 145.5 L1639.6 145.8 L1643 146.2 L1646.2 146.6 L1649.3 147.1 L1652 147.6 L1654.9 148.2 L1657.7 148.8 L1660.6 149.5 L1663.5 150.3 L1666.5 151 L1669.4 151.9 L1672.4 152.7 L1675.4 153.6 L1678.4 154.4 L1681.4 155.3 L1684.4 156.2 L1687.5 157.1 L1690.5 158 L1693.5 158.9 L1696.6 159.8 L1699.6 160.6 L1702.6 161.5 L1705.6 162.3 L1708.6 163.2 L1711.6 164 L1714.5 164.9 L1717.5 165.8 L1720.4 166.7 L1723.4 167.6 L1726.3 168.5 L1729.2 169.5 L1732.1 170.5 L1735 171.6 L1737.9 172.7 L1740.7 173.8 L1743.6 174.9 L1746.4 176 L1749.3 177.2 L1752.1 178.4 L1755 179.6 L1757.9 180.8 L1760.7 182.1 L1763.5 183.4 L1766.3 184.7 L1769 185.9 L1771.7 187.2 L1774.4 188.4 L1777 189.7 L1779.4 191 L1781.8 192.3 L1784.5 193.9 L1787.1 195.4 L1789.6 197 L1792 198.6 L1794.3 200.3 L1796.7 202 L1798.9 203.8 L1801.2 205.6 L1803.5 207.4 L1805.8 209.3 L1808.1 211.3 L1810.4 213.3 L1812.8 215.4 L1815.2 217.6 L1817.4 219.5 L1819.6 221.5 L1821.8 223.6 L1824.1 225.8 L1826.4 228 L1828.7 230.3 L1831 232.6 L1833.3 234.9 L1835.5 237.2 L1837.7 239.5 L1839.9 241.8 L1841.9 244 L1844 246.2 L1845.9 248.3 L1847.7 250.4 L1849.4 252.3 L1851.9 255.3 L1854.2 258.1 L1856.3 260.8 L1858.2 263.4 L1860 265.9 L1861.7 268.4 L1863.3 270.8 L1864.8 273.2 L1866.2 275.6 L1867.5 278 L1869 281 L1870.4 284.3 L1871.6 287.6 L1872.7 290.9 L1873.7 294 L1874.5 296.9 L1875.3 299.3 L1875.9 301.2 L1884.1 298.8 L1883.6 297 L1883.1 294.6 L1882.3 291.6 L1881.5 288.3 L1880.5 284.7 L1879.3 281 L1877.9 277.2 L1876.3 273.6 L1875 270.9 L1873.6 268.2 L1872.1 265.5 L1870.6 262.8 L1868.9 260.1 L1867.1 257.3 L1865.1 254.4 L1863 251.4 L1860.7 248.3 L1858.2 245.1 L1856.5 243 L1854.8 240.8 L1852.9 238.5 L1851 236.1 L1848.9 233.7 L1846.9 231.3 L1844.7 228.8 L1842.5 226.3 L1840.3 223.8 L1838.1 221.3 L1835.8 218.9 L1833.6 216.5 L1831.3 214.1 L1829.1 211.8 L1826.9 209.6 L1824.8 207.4 L1822.4 205.1 L1820.1 202.9 L1817.8 200.6 L1815.5 198.5 L1813.2 196.3 L1810.8 194.2 L1808.5 192.2 L1806.1 190.1 L1803.6 188.1 L1801.1 186.1 L1798.5 184.2 L1795.8 182.3 L1793 180.4 L1790.2 178.5 L1787.5 176.9 L1784.8 175.3 L1782.1 173.7 L1779.2 172.2 L1776.4 170.7 L1773.5 169.2 L1770.5 167.9 L1767.5 166.6 L1764.5 165.3 L1761.5 164.1 L1758.5 162.9 L1755.4 161.7 L1752.5 160.6 L1749.5 159.5 L1746.6 158.4 L1743.7 157.3 L1740.5 156.2 L1737.4 155.1 L1734.3 154.1 L1731.2 153.2 L1728.1 152.2 L1725 151.3 L1721.9 150.5 L1718.8 149.6 L1715.8 148.8 L1712.7 148 L1709.7 147.2 L1706.7 146.4 L1703.7 145.7 L1700.6 144.9 L1697.7 144.1 L1694.7 143.3 L1691.6 142.5 L1688.6 141.6 L1685.6 140.8 L1682.5 140 L1679.4 139.1 L1676.3 138.3 L1673.3 137.5 L1670.2 136.7 L1667.1 136 L1664 135.3 L1660.9 134.6 L1657.8 134 L1654.7 133.4 L1651.5 132.9 L1648.1 132.4 L1644.6 132 L1640.9 131.7 L1637.3 131.4 L1633.6 131.2 L1630 131 L1626.5 130.8 L1623.1 130.7 L1619.8 130.6 L1616.8 130.5 L1614.1 130.5 L1611.6 130.4 L1609.6 130.4 L1607.9 130.3Z" fill="#ac544a"/><path d="M1608.1 142.4 L1609.8 142.5 L1612 142.6 L1614.5 142.7 L1617.2 142.8 L1620.2 143 L1623.4 143.1 L1626.7 143.3 L1630.2 143.5 L1633.7 143.7 L1637.2 144 L1640.7 144.3 L1644.1 144.7 L1647.4 145.1 L1650.5 145.6 L1653.3 146.1 L1656.2 146.7 L1659.1 147.3 L1662.1 148 L1665 148.8 L1668 149.5 L1671 150.3 L1674 151.2 L1677 152 L1680 152.9 L1683 153.8 L1686 154.7 L1689.1 155.5 L1692.1 156.4 L1695.1 157.3 L1698.2 158.1 L1701.2 159 L1704.2 159.8 L1707.2 160.7 L1710.2 161.5 L1713.2 162.3 L1716.2 163.2 L1719.1 164.1 L1722.1 165 L1725.1 165.9 L1728 166.8 L1731 167.8 L1733.9 168.8 L1736.9 169.9 L1739.8 171 L1742.6 172 L1745.5 173.2 L1748.4 174.3 L1751.2 175.5 L1754.1 176.6 L1757 177.9 L1759.9 179.1 L1762.8 180.4 L1765.6 181.6 L1768.4 183 L1771.2 184.2 L1774 185.5 L1776.6 186.8 L1779.2 188.2 L1781.8 189.5 L1784.2 190.9 L1786.9 192.5 L1789.5 194.1 L1792.1 195.8 L1794.5 197.5 L1796.9 199.2 L1799.2 201 L1801.6 202.8 L1803.9 204.6 L1806.1 206.5 L1808.4 208.5 L1810.7 210.5 L1813.1 212.5 L1815.4 214.7 L1817.8 216.8 L1820 218.8 L1822.2 220.9 L1824.4 223 L1826.7 225.2 L1829 227.5 L1831.3 229.8 L1833.6 232.1 L1835.8 234.5 L1838.1 236.8 L1840.2 239.2 L1842.4 241.5 L1844.5 243.7 L1846.5 246 L1848.4 248.1 L1850.2 250.2 L1851.9 252.1 L1854.4 255.2 L1856.7 258 L1858.8 260.8 L1860.7 263.4 L1862.5 266 L1864.2 268.5 L1865.8 271 L1867.2 273.5 L1868.6 275.9 L1870 278.3 L1871.5 281.5 L1872.9 284.8 L1874.1 288.2 L1875.2 291.6 L1876.1 294.8 L1876.9 297.6 L1877.7 300.1 L1878.3 302 L1883.3 300.4 L1882.8 298.6 L1882.2 296.2 L1881.5 293.3 L1880.6 290 L1879.6 286.5 L1878.4 282.8 L1877 279.2 L1875.4 275.7 L1874.1 273 L1872.7 270.4 L1871.2 267.7 L1869.7 265.1 L1868 262.4 L1866.2 259.6 L1864.2 256.8 L1862.1 253.9 L1859.8 250.8 L1857.3 247.7 L1855.7 245.6 L1853.9 243.4 L1852 241.1 L1850.1 238.8 L1848 236.4 L1845.9 234 L1843.8 231.6 L1841.6 229.1 L1839.3 226.7 L1837.1 224.2 L1834.8 221.8 L1832.6 219.4 L1830.3 217.1 L1828.1 214.8 L1825.9 212.6 L1823.8 210.6 L1821.4 208.3 L1819 206 L1816.7 203.9 L1814.4 201.7 L1812.1 199.6 L1809.8 197.6 L1807.5 195.6 L1805.1 193.6 L1802.7 191.6 L1800.2 189.7 L1797.6 187.8 L1795 186 L1792.2 184.1 L1789.4 182.3 L1786.8 180.7 L1784.1 179.2 L1781.4 177.7 L1778.6 176.2 L1775.8 174.8 L1772.9 173.4 L1770 172 L1767 170.7 L1764 169.5 L1761 168.2 L1758.1 167 L1755.1 165.9 L1752.1 164.7 L1749.2 163.6 L1746.3 162.5 L1743.4 161.4 L1740.3 160.3 L1737.2 159.3 L1734.1 158.3 L1731.1 157.3 L1728 156.4 L1724.9 155.5 L1721.9 154.6 L1718.8 153.7 L1715.8 152.9 L1712.8 152.1 L1709.7 151.3 L1706.7 150.5 L1703.7 149.7 L1700.7 148.9 L1697.7 148.1 L1694.7 147.3 L1691.6 146.5 L1688.6 145.6 L1685.6 144.8 L1682.5 143.9 L1679.5 143.1 L1676.4 142.2 L1673.3 141.4 L1670.3 140.7 L1667.2 139.9 L1664.1 139.2 L1661.1 138.5 L1658 137.9 L1655 137.3 L1651.9 136.8 L1648.6 136.3 L1645.1 135.9 L1641.5 135.6 L1637.9 135.3 L1634.2 135 L1630.6 134.8 L1627.1 134.7 L1623.7 134.5 L1620.5 134.4 L1617.5 134.3 L1614.8 134.3 L1612.3 134.2 L1610.3 134.1 L1608.5 134Z" fill="#d9cd68" filter="url(#b1)"/><path d="M1854.4 258.7 L1853.1 260.4 L1851.2 262.7 L1849.1 265.4 L1846.7 268.2 L1844.4 270.9 L1842.3 273.2 L1839.7 275.8 L1836.9 278.4 L1834.1 280.9 L1831.7 283.1 L1830.1 284.6 L1833.9 289.4 L1835.8 288 L1838.4 286.2 L1841.5 283.9 L1844.7 281.4 L1847.7 278.8 L1850.2 276.5 L1852.9 273.9 L1855.6 271.3 L1858 268.8 L1860.1 266.7 L1861.6 265.3Z" fill="#ac544a"/><path d="M1856.6 261.2 L1855.2 262.8 L1853.3 265.1 L1851.1 267.7 L1848.7 270.5 L1846.3 273.1 L1844.1 275.5 L1841.5 278 L1838.6 280.7 L1835.7 283.1 L1833.3 285.2 L1831.6 286.7 L1834 289.7 L1835.8 288.3 L1838.4 286.4 L1841.4 284 L1844.5 281.5 L1847.5 278.9 L1849.9 276.6 L1852.5 274 L1855.1 271.3 L1857.5 268.8 L1859.6 266.7 L1861 265.2Z" fill="#d9cd68" filter="url(#b1)"/><path d="M1539.5 178.5 L1537.8 178.8 L1535.6 179.3 L1533 179.8 L1530 180.4 L1526.8 181 L1523.4 181.7 L1519.8 182.5 L1516.2 183.3 L1512.5 184.1 L1508.9 184.9 L1505.4 185.8 L1502 186.7 L1498.9 187.6 L1495.7 188.6 L1492.7 189.6 L1489.7 190.6 L1486.7 191.7 L1483.8 192.8 L1481 193.9 L1478.2 195.1 L1475.4 196.2 L1472.6 197.4 L1469.8 198.7 L1467 199.9 L1464.1 201.2 L1461.2 202.6 L1458.4 203.9 L1455.5 205.3 L1452.6 206.7 L1449.7 208.2 L1446.8 209.7 L1443.9 211.2 L1441 212.7 L1438.1 214.3 L1435.2 215.9 L1432.3 217.6 L1429.4 219.3 L1426.7 220.8 L1424 222.4 L1421.4 224 L1418.7 225.7 L1416 227.4 L1413.3 229.1 L1410.7 230.8 L1408 232.6 L1405.3 234.4 L1402.6 236.3 L1399.9 238.2 L1397.2 240.1 L1394.5 242.2 L1392.1 244.2 L1389.6 246.3 L1387.2 248.5 L1384.7 250.6 L1382.3 252.8 L1379.8 255.1 L1377.4 257.3 L1375 259.6 L1372.6 261.9 L1370.2 264.1 L1367.9 266.4 L1365.5 268.6 L1363.3 270.9 L1361 273.1 L1358.7 275.4 L1356.3 277.7 L1354 280 L1351.7 282.4 L1349.4 284.7 L1347.1 287 L1344.8 289.3 L1342.6 291.7 L1340.4 294.1 L1338.2 296.5 L1336.1 298.9 L1334 301.4 L1331.9 303.9 L1329.9 306.5 L1327.9 309.1 L1325.9 311.7 L1324 314.4 L1322 317.1 L1320.2 319.8 L1318.3 322.5 L1316.6 325.2 L1314.8 327.8 L1313.2 330.4 L1311.6 333 L1310.1 335.4 L1308.6 337.9 L1306.6 341.3 L1304.7 344.9 L1302.8 348.4 L1301.2 351.8 L1299.6 355 L1298.2 358 L1297.1 360.6 L1296.1 362.9 L1295.3 364.6 L1300.7 367.4 L1301.7 365.7 L1302.9 363.5 L1304.3 361 L1305.8 358.2 L1307.5 355.1 L1309.3 351.9 L1311.2 348.6 L1313.3 345.3 L1315.4 342.1 L1316.9 340 L1318.6 337.7 L1320.3 335.3 L1322.1 332.9 L1323.9 330.4 L1325.8 327.9 L1327.8 325.4 L1329.8 322.9 L1331.8 320.4 L1333.8 318 L1335.9 315.5 L1338 313.2 L1340.1 310.9 L1342.2 308.7 L1344.3 306.5 L1346.5 304.3 L1348.7 302.1 L1350.9 300 L1353.2 297.9 L1355.6 295.8 L1357.9 293.6 L1360.3 291.5 L1362.7 289.4 L1365.2 287.3 L1367.7 285.1 L1370.2 282.9 L1372.5 280.9 L1374.9 278.9 L1377.3 276.8 L1379.8 274.7 L1382.2 272.7 L1384.7 270.6 L1387.2 268.5 L1389.7 266.5 L1392.2 264.5 L1394.7 262.5 L1397.2 260.6 L1399.6 258.8 L1402.1 256.9 L1404.5 255.2 L1407 253.3 L1409.5 251.4 L1412.1 249.6 L1414.6 247.7 L1417.1 246 L1419.6 244.2 L1422.2 242.5 L1424.7 240.8 L1427.2 239.2 L1429.8 237.5 L1432.3 235.9 L1434.9 234.3 L1437.4 232.7 L1440.2 231.1 L1442.9 229.4 L1445.7 227.8 L1448.4 226.3 L1451.2 224.7 L1453.9 223.2 L1456.7 221.7 L1459.5 220.3 L1462.2 218.9 L1465 217.5 L1467.7 216.1 L1470.5 214.8 L1473.2 213.5 L1475.9 212.2 L1478.6 210.9 L1481.3 209.7 L1483.9 208.5 L1486.6 207.4 L1489.2 206.3 L1491.9 205.2 L1494.6 204.2 L1497.4 203.1 L1500.2 202.2 L1503.1 201.2 L1505.9 200.3 L1509 199.4 L1512.3 198.6 L1515.8 197.7 L1519.3 196.8 L1522.8 196 L1526.3 195.2 L1529.7 194.5 L1532.9 193.7 L1535.8 193.1 L1538.4 192.5 L1540.7 192 L1542.5 191.5Z" fill="#ac544a"/><path d="M1540.9 182.1 L1539.1 182.5 L1536.9 183 L1534.3 183.5 L1531.4 184.1 L1528.2 184.8 L1524.7 185.5 L1521.2 186.3 L1517.6 187 L1513.9 187.9 L1510.4 188.7 L1506.9 189.6 L1503.6 190.5 L1500.5 191.4 L1497.4 192.4 L1494.4 193.4 L1491.4 194.4 L1488.5 195.5 L1485.7 196.6 L1482.8 197.7 L1480.1 198.8 L1477.3 200 L1474.5 201.2 L1471.7 202.4 L1469 203.7 L1466.1 205 L1463.3 206.3 L1460.4 207.7 L1457.5 209.1 L1454.7 210.5 L1451.8 211.9 L1448.9 213.4 L1446.1 214.9 L1443.2 216.5 L1440.3 218.1 L1437.4 219.7 L1434.6 221.3 L1431.7 223 L1429.1 224.6 L1426.4 226.2 L1423.8 227.8 L1421.1 229.4 L1418.5 231.1 L1415.8 232.8 L1413.2 234.6 L1410.5 236.3 L1407.8 238.1 L1405.2 240 L1402.5 241.9 L1399.9 243.8 L1397.2 245.9 L1394.8 247.9 L1392.3 249.9 L1389.9 252 L1387.4 254.1 L1384.9 256.3 L1382.5 258.4 L1380 260.7 L1377.6 262.9 L1375.2 265.1 L1372.8 267.3 L1370.4 269.6 L1368.1 271.8 L1365.8 274 L1363.6 276.1 L1361.2 278.4 L1358.8 280.7 L1356.5 283 L1354.1 285.3 L1351.8 287.6 L1349.5 289.9 L1347.2 292.2 L1345 294.5 L1342.8 296.8 L1340.6 299.2 L1338.5 301.6 L1336.4 304 L1334.3 306.4 L1332.2 308.9 L1330.2 311.5 L1328.2 314.1 L1326.2 316.7 L1324.3 319.4 L1322.4 322.1 L1320.6 324.7 L1318.8 327.4 L1317 330 L1315.3 332.6 L1313.7 335.1 L1312.2 337.5 L1310.7 339.9 L1308.7 343.3 L1306.7 346.8 L1304.9 350.2 L1303.2 353.6 L1301.6 356.8 L1300.2 359.8 L1299 362.4 L1297.9 364.6 L1297.1 366.3 L1300.5 368.1 L1301.4 366.4 L1302.6 364.2 L1303.9 361.6 L1305.4 358.8 L1307.1 355.7 L1308.9 352.4 L1310.8 349.1 L1312.8 345.8 L1314.9 342.5 L1316.4 340.3 L1318.1 338 L1319.7 335.6 L1321.5 333.1 L1323.3 330.6 L1325.2 328.1 L1327.1 325.5 L1329.1 323 L1331.1 320.5 L1333.1 318 L1335.2 315.5 L1337.2 313.1 L1339.3 310.8 L1341.4 308.5 L1343.5 306.2 L1345.7 304 L1347.9 301.8 L1350.2 299.6 L1352.4 297.5 L1354.8 295.3 L1357.1 293.1 L1359.5 291 L1361.9 288.8 L1364.3 286.6 L1366.8 284.5 L1369.2 282.3 L1371.6 280.2 L1373.9 278.1 L1376.3 276 L1378.7 273.9 L1381.2 271.8 L1383.6 269.7 L1386.1 267.6 L1388.6 265.5 L1391.1 263.5 L1393.6 261.5 L1396.1 259.5 L1398.5 257.6 L1401 255.7 L1403.4 253.9 L1406 252 L1408.5 250.1 L1411.1 248.2 L1413.6 246.4 L1416.2 244.6 L1418.7 242.9 L1421.3 241.1 L1423.9 239.5 L1426.4 237.8 L1429 236.2 L1431.6 234.5 L1434.1 233 L1436.7 231.4 L1439.5 229.7 L1442.3 228.1 L1445 226.5 L1447.8 224.9 L1450.6 223.3 L1453.4 221.8 L1456.2 220.4 L1458.9 218.9 L1461.7 217.5 L1464.5 216.1 L1467.3 214.7 L1470.1 213.4 L1472.8 212.1 L1475.6 210.8 L1478.3 209.6 L1480.9 208.4 L1483.6 207.2 L1486.3 206 L1489 204.9 L1491.7 203.8 L1494.5 202.8 L1497.3 201.8 L1500.2 200.8 L1503.1 199.8 L1506 198.9 L1509.1 198.1 L1512.5 197.2 L1516 196.3 L1519.5 195.5 L1523.1 194.6 L1526.6 193.8 L1529.9 193.1 L1533.1 192.4 L1536 191.8 L1538.7 191.2 L1540.9 190.7 L1542.7 190.3Z" fill="#d9cd68" filter="url(#b1)"/><path d="M1294.8 364.3 L1294 366.1 L1292.8 368.5 L1291.3 371.5 L1289.8 374.7 L1288.2 378 L1286.8 381.1 L1285.6 384 L1284.3 387.6 L1283.2 391.3 L1282.4 394.7 L1281.7 397.5 L1281.2 399.5 L1284.8 400.5 L1285.5 398.6 L1286.4 395.9 L1287.6 392.7 L1288.9 389.3 L1290.4 386 L1291.7 383.5 L1293.4 380.6 L1295.1 377.6 L1297 374.6 L1298.7 371.8 L1300.1 369.4 L1301.2 367.7Z" fill="#ac544a"/><path d="M1296.8 366.1 L1295.9 367.9 L1294.7 370.4 L1293.2 373.3 L1291.6 376.4 L1290 379.7 L1288.5 382.8 L1287.3 385.6 L1286 389.2 L1284.9 392.8 L1283.9 396.1 L1283.2 398.9 L1282.7 400.9 L1284.9 401.5 L1285.6 399.6 L1286.5 396.9 L1287.5 393.6 L1288.8 390.2 L1290.3 386.8 L1291.6 384.3 L1293.2 381.3 L1294.9 378.2 L1296.7 375.2 L1298.3 372.4 L1299.8 370 L1300.8 368.3Z" fill="#d9cd68" filter="url(#b1)"/><path d="M1614.9 187.5 L1616.7 188 L1618.9 188.5 L1621.4 189.2 L1624.3 189.9 L1627.4 190.6 L1630.6 191.5 L1634.1 192.4 L1637.6 193.3 L1641.1 194.4 L1644.7 195.5 L1648.2 196.6 L1650.6 197.5 L1653.1 198.4 L1655.7 199.4 L1658.4 200.4 L1661.2 201.5 L1664 202.6 L1666.8 203.7 L1669.6 204.8 L1672.5 206 L1675.4 207.2 L1678.3 208.5 L1681.2 209.7 L1684.1 210.9 L1686.9 212.2 L1689.8 213.5 L1692.6 214.8 L1695.4 216.1 L1698.2 217.4 L1701 218.8 L1703.9 220.2 L1706.8 221.6 L1709.7 223 L1712.6 224.5 L1715.5 226 L1718.3 227.4 L1721.2 228.9 L1724 230.4 L1726.7 231.8 L1729.4 233.3 L1732 234.7 L1734.6 236.1 L1737.1 237.5 L1740 239.1 L1742.8 240.7 L1745.5 242.2 L1748.1 243.8 L1750.6 245.3 L1753.1 246.8 L1755.5 248.3 L1758 249.8 L1760.4 251.3 L1762.8 252.8 L1765.2 254.4 L1767.7 256.1 L1770.2 257.8 L1772.6 259.4 L1775 261.1 L1777.5 262.8 L1780.1 264.5 L1782.7 266.2 L1785.2 267.9 L1787.8 269.6 L1790.3 271.3 L1792.8 273 L1795.2 274.7 L1797.6 276.4 L1799.8 278 L1802 279.6 L1804.1 281.2 L1806.8 283.4 L1809.4 285.5 L1811.8 287.4 L1814.1 289.4 L1816.2 291.3 L1818.3 293.2 L1820.3 295.2 L1822.3 297.3 L1824.2 299.6 L1826.2 302 L1827.8 304 L1829.4 306.2 L1830.9 308.4 L1832.4 310.7 L1833.9 313.1 L1835.4 315.6 L1836.9 318.2 L1838.4 320.9 L1840 323.6 L1841.6 326.4 L1843.2 329.3 L1844.9 332.2 L1846.3 334.6 L1847.8 337.1 L1849.3 339.7 L1850.8 342.3 L1852.4 345 L1853.9 347.7 L1855.5 350.5 L1857.1 353.3 L1858.6 356 L1860.2 358.7 L1861.7 361.4 L1863.2 364 L1864.6 366.6 L1866 369 L1867.3 371.4 L1869 374.5 L1870.8 377.7 L1872.5 380.9 L1874.2 384.1 L1875.8 387.1 L1877.4 390 L1878.9 392.7 L1880.2 395.2 L1881.4 397.4 L1882.5 399.3 L1883.4 400.8 L1886.6 399.2 L1886 397.6 L1885.1 395.6 L1884.1 393.3 L1882.9 390.7 L1881.7 387.9 L1880.3 384.9 L1878.8 381.8 L1877.3 378.5 L1875.8 375.2 L1874.2 371.9 L1872.7 368.6 L1871.6 366.2 L1870.4 363.6 L1869.1 361 L1867.8 358.2 L1866.5 355.5 L1865.1 352.6 L1863.8 349.8 L1862.4 346.9 L1861 344 L1859.6 341.2 L1858.3 338.3 L1856.9 335.6 L1855.6 332.9 L1854.3 330.3 L1853.1 327.8 L1851.6 324.8 L1850.2 321.9 L1848.8 319 L1847.4 316.2 L1846.1 313.4 L1844.8 310.6 L1843.4 307.9 L1842 305.2 L1840.5 302.5 L1839 299.9 L1837.5 297.4 L1835.8 294.8 L1833.7 292 L1831.7 289.4 L1829.6 286.8 L1827.5 284.4 L1825.4 282 L1823.1 279.8 L1820.8 277.5 L1818.4 275.2 L1815.8 272.8 L1813.1 270.4 L1811.1 268.6 L1808.9 266.7 L1806.6 264.7 L1804.3 262.8 L1801.9 260.9 L1799.4 258.9 L1796.9 256.9 L1794.4 255 L1791.9 253.1 L1789.4 251.2 L1786.8 249.3 L1784.3 247.5 L1781.7 245.9 L1779.2 244.2 L1776.6 242.5 L1774 240.8 L1771.5 239.2 L1768.9 237.7 L1766.4 236.1 L1763.9 234.6 L1761.3 233.1 L1758.7 231.5 L1756 230 L1753.3 228.5 L1750.5 226.9 L1747.6 225.4 L1744.5 223.7 L1742 222.4 L1739.3 221 L1736.6 219.6 L1733.9 218.2 L1731.1 216.7 L1728.2 215.3 L1725.3 213.8 L1722.3 212.3 L1719.4 210.9 L1716.4 209.4 L1713.4 208 L1710.4 206.6 L1707.4 205.2 L1704.5 203.9 L1701.5 202.5 L1698.6 201.2 L1695.7 200 L1692.8 198.7 L1689.9 197.5 L1686.9 196.2 L1683.9 195 L1680.9 193.8 L1677.9 192.6 L1675 191.5 L1672 190.3 L1669.1 189.2 L1666.2 188.1 L1663.4 187.1 L1660.6 186.1 L1657.9 185.2 L1655.2 184.2 L1652.6 183.4 L1648.9 182.2 L1645 181 L1641.3 180 L1637.6 179 L1634 178.1 L1630.6 177.3 L1627.4 176.6 L1624.5 176 L1622 175.4 L1619.9 174.9 L1618.1 174.5Z" fill="#ac544a"/><path d="M1616.3 186.2 L1618.1 186.7 L1620.3 187.2 L1622.8 187.9 L1625.7 188.5 L1628.8 189.3 L1632.1 190.1 L1635.5 191 L1639.1 192 L1642.7 193 L1646.3 194.1 L1649.8 195.3 L1652.3 196.2 L1654.8 197.1 L1657.5 198.1 L1660.2 199.1 L1662.9 200.1 L1665.7 201.2 L1668.6 202.3 L1671.4 203.5 L1674.3 204.7 L1677.2 205.9 L1680.2 207.1 L1683.1 208.3 L1686 209.6 L1688.9 210.9 L1691.7 212.1 L1694.5 213.4 L1697.3 214.7 L1700.2 216 L1703.1 217.4 L1706 218.8 L1708.9 220.2 L1711.8 221.6 L1714.7 223.1 L1717.6 224.6 L1720.5 226 L1723.3 227.5 L1726.1 229 L1728.9 230.4 L1731.6 231.9 L1734.2 233.3 L1736.8 234.7 L1739.3 236.1 L1742.2 237.7 L1745.1 239.3 L1747.8 240.8 L1750.4 242.4 L1753 243.9 L1755.5 245.4 L1757.9 246.9 L1760.4 248.4 L1762.8 249.9 L1765.2 251.5 L1767.7 253.1 L1770.2 254.7 L1772.7 256.4 L1775.1 258 L1777.6 259.7 L1780.1 261.5 L1782.6 263.2 L1785.2 264.9 L1787.8 266.6 L1790.3 268.4 L1792.8 270.1 L1795.3 271.9 L1797.7 273.6 L1800.1 275.4 L1802.4 277.1 L1804.5 278.7 L1806.6 280.3 L1809.3 282.6 L1811.9 284.7 L1814.3 286.8 L1816.6 288.8 L1818.8 290.7 L1820.8 292.8 L1822.9 294.8 L1824.9 297 L1826.8 299.3 L1828.8 301.8 L1830.5 304 L1832 306.2 L1833.6 308.5 L1835.1 310.9 L1836.5 313.3 L1838 315.9 L1839.5 318.5 L1840.9 321.2 L1842.5 323.9 L1844 326.7 L1845.6 329.6 L1847.3 332.6 L1848.6 335 L1850.1 337.5 L1851.5 340.1 L1853 342.8 L1854.5 345.5 L1856.1 348.2 L1857.6 351 L1859.1 353.8 L1860.7 356.6 L1862.2 359.3 L1863.6 362 L1865.1 364.7 L1866.5 367.2 L1867.8 369.7 L1869.1 372.1 L1870.8 375.2 L1872.5 378.5 L1874.2 381.7 L1875.9 384.8 L1877.5 387.9 L1879 390.8 L1880.4 393.5 L1881.8 396 L1882.9 398.3 L1883.9 400.2 L1884.8 401.7 L1886.8 400.7 L1886.1 399.1 L1885.2 397.1 L1884.2 394.9 L1883 392.3 L1881.7 389.5 L1880.2 386.5 L1878.8 383.4 L1877.2 380.2 L1875.6 376.9 L1874.1 373.6 L1872.5 370.3 L1871.3 367.9 L1870.1 365.4 L1868.8 362.8 L1867.5 360 L1866.1 357.3 L1864.7 354.5 L1863.3 351.6 L1861.9 348.8 L1860.5 345.9 L1859.1 343.1 L1857.7 340.3 L1856.3 337.6 L1854.9 334.9 L1853.6 332.3 L1852.3 329.8 L1850.8 326.9 L1849.4 323.9 L1847.9 321.1 L1846.5 318.3 L1845.2 315.5 L1843.8 312.8 L1842.4 310.1 L1841 307.4 L1839.5 304.9 L1838 302.3 L1836.4 299.8 L1834.8 297.4 L1832.7 294.6 L1830.7 292.1 L1828.7 289.6 L1826.6 287.3 L1824.4 285 L1822.2 282.8 L1819.9 280.6 L1817.5 278.3 L1814.9 276 L1812.2 273.7 L1810.1 271.9 L1808 270 L1805.7 268.1 L1803.4 266.3 L1801 264.4 L1798.5 262.5 L1796 260.5 L1793.5 258.6 L1790.9 256.8 L1788.4 254.9 L1785.9 253.1 L1783.3 251.3 L1780.8 249.6 L1778.3 248 L1775.7 246.3 L1773.1 244.6 L1770.6 243 L1768.1 241.4 L1765.6 239.9 L1763.1 238.4 L1760.5 236.9 L1758 235.4 L1755.3 233.8 L1752.6 232.3 L1749.8 230.8 L1746.9 229.2 L1743.9 227.5 L1741.4 226.2 L1738.8 224.8 L1736.1 223.4 L1733.3 222 L1730.5 220.5 L1727.6 219.1 L1724.8 217.6 L1721.8 216.1 L1718.9 214.7 L1715.9 213.2 L1712.9 211.8 L1710 210.4 L1707 209 L1704.1 207.6 L1701.2 206.3 L1698.3 205 L1695.4 203.7 L1692.5 202.5 L1689.6 201.2 L1686.6 200 L1683.6 198.8 L1680.7 197.6 L1677.7 196.4 L1674.7 195.2 L1671.8 194.1 L1668.9 193 L1666.1 191.9 L1663.2 190.8 L1660.5 189.8 L1657.8 188.9 L1655.2 188 L1652.6 187.1 L1648.9 185.9 L1645.1 184.8 L1641.4 183.7 L1637.7 182.8 L1634.2 181.9 L1630.8 181.1 L1627.6 180.3 L1624.8 179.7 L1622.2 179.1 L1620.1 178.6 L1618.3 178.2Z" fill="#d9cd68" filter="url(#b1)"/><path d="M1545 228.2 L1543.4 228.8 L1541.4 229.4 L1538.9 230.2 L1536.1 231 L1533.1 232 L1529.9 233 L1526.5 234.2 L1523.1 235.3 L1519.7 236.6 L1516.3 237.9 L1512.9 239.3 L1509.8 240.7 L1507 242 L1504.3 243.4 L1501.5 244.8 L1498.7 246.3 L1495.9 247.9 L1493.2 249.4 L1490.4 251.1 L1487.7 252.7 L1485 254.4 L1482.3 256.1 L1479.7 257.9 L1477.2 259.6 L1474.7 261.4 L1472 263.4 L1469.4 265.5 L1466.9 267.5 L1464.4 269.7 L1461.9 271.8 L1459.5 274 L1457.2 276.2 L1454.9 278.4 L1452.7 280.6 L1450.7 282.9 L1448.7 285.2 L1446.8 287.4 L1444.7 290.1 L1442.6 292.7 L1440.7 295.3 L1438.9 298 L1437.1 300.6 L1435.5 303.2 L1433.9 305.8 L1432.3 308.4 L1430.7 311.1 L1429.2 313.9 L1427.6 316.8 L1426 319.7 L1424.6 322.7 L1423.2 325.7 L1421.8 328.7 L1420.5 331.6 L1419.1 334.6 L1417.7 337.5 L1416.3 340.3 L1414.8 343.1 L1413.2 346 L1411.4 349 L1409.4 352.2 L1407.5 355.4 L1405.5 358.5 L1403.6 361.5 L1401.8 364.3 L1400.3 366.8 L1399 369 L1398 370.6 L1402 373.4 L1403.2 371.8 L1404.7 369.9 L1406.5 367.5 L1408.5 364.9 L1410.6 362 L1412.8 359 L1415 355.9 L1417.2 352.8 L1419.3 349.8 L1421.2 346.9 L1423 344.1 L1424.7 341.2 L1426.4 338.3 L1428 335.5 L1429.6 332.6 L1431.2 329.8 L1432.7 327 L1434.3 324.3 L1436 321.7 L1437.6 319.1 L1439.4 316.6 L1441.1 314.1 L1442.8 311.7 L1444.6 309.4 L1446.3 307.1 L1448.1 304.8 L1450 302.6 L1451.9 300.3 L1454 298.1 L1456.2 295.8 L1458.1 293.9 L1460.1 291.9 L1462.2 289.9 L1464.3 287.9 L1466.4 285.8 L1468.6 283.7 L1470.8 281.7 L1473.1 279.7 L1475.4 277.7 L1477.7 275.7 L1480.1 273.8 L1482.5 272 L1484.8 270.3 L1487.1 268.6 L1489.6 266.9 L1492 265.3 L1494.5 263.7 L1497.1 262.1 L1499.7 260.5 L1502.3 259 L1504.9 257.5 L1507.5 256.1 L1510.1 254.7 L1512.7 253.4 L1515.2 252.1 L1518 250.8 L1521 249.6 L1524.1 248.3 L1527.3 247.1 L1530.6 245.9 L1533.8 244.8 L1537 243.8 L1539.9 242.8 L1542.7 241.9 L1545.1 241.1 L1547.3 240.4 L1549 239.8Z" fill="#ac544a"/><path d="M1546.6 231.6 L1544.9 232.2 L1542.9 232.8 L1540.4 233.6 L1537.7 234.5 L1534.7 235.4 L1531.4 236.5 L1528.1 237.6 L1524.7 238.8 L1521.3 240 L1518 241.3 L1514.7 242.7 L1511.6 244.1 L1508.9 245.4 L1506.2 246.7 L1503.4 248.2 L1500.7 249.6 L1497.9 251.2 L1495.2 252.7 L1492.5 254.4 L1489.8 256 L1487.1 257.7 L1484.5 259.4 L1481.9 261.1 L1479.4 262.9 L1477 264.6 L1474.4 266.6 L1471.8 268.6 L1469.3 270.7 L1466.8 272.8 L1464.4 274.9 L1462 277 L1459.7 279.2 L1457.5 281.4 L1455.3 283.6 L1453.3 285.8 L1451.3 288 L1449.4 290.2 L1447.2 292.8 L1445.2 295.4 L1443.2 297.9 L1441.4 300.5 L1439.7 303 L1438 305.6 L1436.4 308.1 L1434.8 310.7 L1433.2 313.4 L1431.6 316.1 L1430 318.9 L1428.4 321.8 L1426.9 324.7 L1425.5 327.6 L1424.1 330.6 L1422.7 333.5 L1421.3 336.5 L1419.8 339.4 L1418.4 342.2 L1416.8 345 L1415.1 347.9 L1413.3 351 L1411.3 354.1 L1409.3 357.3 L1407.3 360.4 L1405.3 363.4 L1403.5 366.1 L1401.9 368.6 L1400.6 370.7 L1399.5 372.4 L1402.1 374 L1403.2 372.5 L1404.7 370.5 L1406.4 368.1 L1408.3 365.5 L1410.4 362.6 L1412.6 359.5 L1414.7 356.4 L1416.9 353.3 L1418.9 350.3 L1420.8 347.4 L1422.5 344.6 L1424.2 341.7 L1425.8 338.8 L1427.4 335.9 L1428.9 333 L1430.4 330.2 L1432 327.4 L1433.6 324.6 L1435.2 321.9 L1436.8 319.3 L1438.5 316.8 L1440.2 314.3 L1441.9 311.8 L1443.6 309.4 L1445.4 307 L1447.1 304.7 L1449 302.4 L1450.9 300.1 L1453 297.8 L1455.2 295.4 L1457.1 293.4 L1459.1 291.4 L1461.2 289.4 L1463.3 287.3 L1465.5 285.2 L1467.7 283.1 L1469.9 281 L1472.2 279 L1474.6 276.9 L1477 275 L1479.4 273 L1481.8 271.2 L1484.1 269.5 L1486.5 267.8 L1489 266.1 L1491.5 264.4 L1494 262.8 L1496.6 261.2 L1499.2 259.6 L1501.9 258.1 L1504.5 256.6 L1507.2 255.1 L1509.8 253.7 L1512.4 252.4 L1515 251.1 L1517.8 249.8 L1520.9 248.5 L1524.1 247.3 L1527.3 246.1 L1530.6 244.9 L1533.9 243.8 L1537 242.7 L1540 241.8 L1542.7 240.9 L1545.2 240.1 L1547.3 239.4 L1549 238.8Z" fill="#d9cd68" filter="url(#b1)"/><path d="M1625.3 238.6 L1627 239.3 L1629.1 240.3 L1631.6 241.4 L1634.4 242.7 L1637.5 244.1 L1640.6 245.5 L1643.9 247 L1647.2 248.5 L1650.4 250.1 L1653.4 251.5 L1656.2 252.9 L1658.8 254.3 L1661.9 256 L1664.8 257.6 L1667.6 259.1 L1670.2 260.7 L1672.7 262.2 L1675.2 263.8 L1677.5 265.5 L1679.9 267.4 L1682.4 269.4 L1684.4 271.2 L1686.4 273.2 L1688.4 275.2 L1690.5 277.4 L1692.5 279.7 L1694.6 282.1 L1696.7 284.5 L1698.7 287 L1700.8 289.4 L1702.9 291.9 L1704.9 294.3 L1706.9 296.6 L1708.7 298.9 L1710.6 301.2 L1712.4 303.5 L1714.3 305.7 L1716.3 308 L1718.3 310.3 L1720.5 312.8 L1722.7 315.3 L1725 317.9 L1727.5 320.5 L1729.5 322.6 L1731.6 324.6 L1733.7 326.7 L1735.9 328.9 L1738.2 331.1 L1740.5 333.3 L1742.8 335.6 L1745.1 337.8 L1747.4 340 L1749.7 342.3 L1752 344.5 L1754.3 346.7 L1756.5 348.9 L1758.6 351 L1760.7 353.1 L1763.1 355.6 L1765.5 358.2 L1768 360.8 L1770.5 363.5 L1773 366.2 L1775.4 368.9 L1777.8 371.5 L1780 374 L1782.1 376.3 L1784.1 378.4 L1785.8 380.3 L1787.3 381.9 L1788.6 383.2 L1791.4 380.8 L1790.3 379.4 L1789 377.6 L1787.5 375.5 L1785.8 373.2 L1783.9 370.7 L1781.8 368.1 L1779.7 365.3 L1777.4 362.5 L1775.2 359.6 L1772.9 356.7 L1770.6 353.8 L1768.3 351 L1766.1 348.3 L1764.2 346 L1762.2 343.6 L1760.2 341.2 L1758.1 338.8 L1756 336.4 L1753.9 333.9 L1751.7 331.5 L1749.6 329 L1747.5 326.6 L1745.4 324.2 L1743.4 321.9 L1741.4 319.6 L1739.5 317.3 L1737.8 315.2 L1736.1 313.1 L1733.9 310.3 L1731.8 307.7 L1729.9 305.1 L1728.1 302.6 L1726.3 300.1 L1724.6 297.7 L1722.9 295.2 L1721 292.8 L1719.1 290.5 L1717.1 288.1 L1715.1 285.7 L1713 283.3 L1710.9 280.9 L1708.8 278.4 L1706.7 275.9 L1704.5 273.5 L1702.3 271 L1700.1 268.6 L1697.8 266.2 L1695.5 263.9 L1693.2 261.7 L1690.8 259.6 L1687.9 257.3 L1685.1 255.1 L1682.3 253.2 L1679.5 251.4 L1676.7 249.7 L1673.9 248.1 L1670.9 246.5 L1667.9 244.8 L1664.6 243.1 L1661.9 241.7 L1658.9 240.3 L1655.7 238.7 L1652.4 237.2 L1649.1 235.7 L1645.7 234.2 L1642.5 232.8 L1639.4 231.4 L1636.6 230.2 L1634.1 229.1 L1632 228.2 L1630.3 227.4Z" fill="#ac544a"/><path d="M1627 237.6 L1628.7 238.4 L1630.8 239.4 L1633.4 240.5 L1636.2 241.8 L1639.2 243.1 L1642.4 244.6 L1645.7 246.1 L1649 247.6 L1652.2 249.1 L1655.3 250.6 L1658.1 252 L1660.7 253.4 L1663.8 255.1 L1666.8 256.7 L1669.6 258.2 L1672.3 259.8 L1674.8 261.4 L1677.3 263 L1679.8 264.8 L1682.3 266.7 L1684.8 268.7 L1686.9 270.6 L1688.9 272.6 L1691 274.7 L1693.1 277 L1695.2 279.3 L1697.3 281.7 L1699.4 284.1 L1701.5 286.5 L1703.5 289 L1705.6 291.5 L1707.7 293.9 L1709.6 296.2 L1711.5 298.5 L1713.3 300.8 L1715.2 303.1 L1717.1 305.4 L1719 307.7 L1721 310.1 L1723.1 312.5 L1725.2 315 L1727.5 317.6 L1730 320.3 L1731.9 322.4 L1733.9 324.4 L1736 326.6 L1738.1 328.8 L1740.3 331 L1742.6 333.2 L1744.9 335.5 L1747.2 337.8 L1749.5 340.1 L1751.7 342.4 L1754 344.6 L1756.2 346.9 L1758.4 349.1 L1760.5 351.3 L1762.5 353.4 L1764.9 355.9 L1767.3 358.5 L1769.7 361.2 L1772.2 364 L1774.6 366.7 L1777 369.4 L1779.3 372.1 L1781.5 374.6 L1783.6 376.9 L1785.5 379.1 L1787.2 381 L1788.7 382.6 L1789.9 383.9 L1791.7 382.5 L1790.6 381 L1789.2 379.3 L1787.6 377.3 L1785.9 375 L1783.9 372.6 L1781.9 369.9 L1779.7 367.2 L1777.4 364.4 L1775.1 361.5 L1772.7 358.6 L1770.4 355.8 L1768.1 353.1 L1765.9 350.4 L1763.9 348.1 L1761.9 345.8 L1759.9 343.5 L1757.8 341.1 L1755.6 338.7 L1753.4 336.3 L1751.3 333.9 L1749.1 331.5 L1747 329.1 L1744.8 326.7 L1742.8 324.4 L1740.8 322.1 L1738.8 319.9 L1737 317.8 L1735.2 315.7 L1733 313 L1730.9 310.3 L1728.9 307.8 L1727 305.3 L1725.2 302.8 L1723.4 300.4 L1721.7 298 L1719.8 295.6 L1717.9 293.3 L1716 290.9 L1713.9 288.5 L1711.9 286.1 L1709.8 283.7 L1707.7 281.2 L1705.6 278.8 L1703.4 276.3 L1701.3 273.9 L1699.1 271.5 L1696.8 269.1 L1694.6 266.9 L1692.3 264.7 L1690 262.7 L1687.2 260.4 L1684.5 258.3 L1681.8 256.4 L1679 254.7 L1676.3 253 L1673.5 251.4 L1670.6 249.8 L1667.5 248.1 L1664.3 246.4 L1661.6 245.1 L1658.7 243.6 L1655.5 242.1 L1652.2 240.6 L1648.9 239 L1645.6 237.6 L1642.3 236.1 L1639.3 234.8 L1636.4 233.5 L1633.9 232.4 L1631.8 231.5 L1630.2 230.8Z" fill="#d9cd68" filter="url(#b1)"/><ellipse cx="1334" cy="190" rx="3" ry="8" transform="rotate(20 1334 190)" fill="#d9cd68"/><ellipse cx="1340" cy="181" rx="6" ry="2.5" transform="rotate(20 1340 181)" fill="#ac544a"/><ellipse cx="1388" cy="244" rx="7" ry="2.5" transform="rotate(-25 1388 244)" fill="#c8a060"/><ellipse cx="1713" cy="177" rx="7" ry="4" transform="rotate(15 1713 177)" fill="#d9cd68"/><path d="M1375 148C1377.5 148.7 1385 150.8 1390 152C1395 153.2 1402.5 154.5 1405 155" fill="none" stroke="#c8a868" stroke-width="3" stroke-linecap="round"/></g>
<g filter="url(#bone2)"><path d="M1545 127C1548 123.2 1552.5 123 1560 122C1567.5 121 1581.3 120.7 1590 121C1598.7 121.3 1607.7 120.8 1612 124C1616.3 127.2 1616.3 134 1616 140C1615.7 146 1609.7 152.5 1610 160C1610.3 167.5 1617.7 176.7 1618 185C1618.3 193.3 1612.3 202.2 1612 210C1611.7 217.8 1616.7 225.3 1616 232C1615.3 238.7 1608.3 242.8 1608 250C1607.7 257.2 1611.7 266.7 1614 275C1616.3 283.3 1620 289.2 1622 300C1624 310.8 1625 326.7 1626 340C1627 353.3 1626.7 370 1628 380C1629.3 390 1633.3 391.7 1634 400C1634.7 408.3 1631 420.8 1632 430C1633 439.2 1639.7 446.7 1640 455C1640.3 463.3 1634 471.7 1634 480C1634 488.3 1639.3 493.7 1640 505C1640.7 516.3 1655.7 540.8 1638 548C1620.3 555.2 1551.7 554.3 1534 548C1516.3 541.7 1531.3 520.5 1532 510C1532.7 499.5 1538 493.3 1538 485C1538 476.7 1532 467.5 1532 460C1532 452.5 1538 447.5 1538 440C1538 432.5 1531.7 422.5 1532 415C1532.3 407.5 1539 405.8 1540 395C1541 384.2 1538 365.8 1538 350C1538 334.2 1538.7 313.3 1540 300C1541.3 286.7 1544.3 278.3 1546 270C1547.7 261.7 1550.3 257.5 1550 250C1549.7 242.5 1544.3 233.3 1544 225C1543.7 216.7 1548.3 208.3 1548 200C1547.7 191.7 1541.7 182.5 1542 175C1542.3 167.5 1550 160 1550 155C1550 150 1542.8 149.7 1542 145C1541.2 140.3 1542 130.8 1545 127Z" fill="#c9b45e"/><path d="M1545 443L1530 447" stroke="#c88a6a" stroke-width="6" stroke-linecap="round" fill="none"/><path d="M1545 483L1530 487" stroke="#c88a6a" stroke-width="6" stroke-linecap="round" fill="none"/><path d="M1545 525L1533 530" stroke="#c88a6a" stroke-width="6" stroke-linecap="round" fill="none"/><path d="M1630 388L1664 393" stroke="#c88a6a" stroke-width="6" stroke-linecap="round" fill="none"/><path d="M1632 430L1670 434" stroke="#c88a6a" stroke-width="6" stroke-linecap="round" fill="none"/><path d="M1634 480L1655 484" stroke="#c88a6a" stroke-width="6" stroke-linecap="round" fill="none"/><path d="M1634 520L1650 528" stroke="#c88a6a" stroke-width="6" stroke-linecap="round" fill="none"/><path d="M1545 400L1532 404" stroke="#c88a6a" stroke-width="6" stroke-linecap="round" fill="none"/></g>
<g clip-path="url(#spclip)"><g filter="url(#b1)"><ellipse cx="1585" cy="412" rx="46" ry="9" fill="#a03a3c" opacity=".7"/><ellipse cx="1585" cy="452" rx="46" ry="9" fill="#a03a3c" opacity=".7"/><ellipse cx="1585" cy="492" rx="46" ry="9" fill="#a03a3c" opacity=".7"/><ellipse cx="1585" cy="532" rx="46" ry="9" fill="#a03a3c" opacity=".7"/><path d="M1540 400C1556.7 375.3 1617.3 375.3 1634 400C1650.7 424.7 1656.7 523.3 1640 548C1623.3 572.7 1550.7 572.7 1534 548C1517.3 523.3 1523.3 424.7 1540 400Z" fill="#a84444" opacity=".35"/></g></g>
<ellipse cx="1570" cy="150" rx="10" ry="6" transform="rotate(30 1570 150)" fill="#e2d68a" opacity=".8" filter="url(#b1)"/>
<ellipse cx="1598" cy="160" rx="8" ry="5" transform="rotate(-20 1598 160)" fill="#e2d68a" opacity=".8" filter="url(#b1)"/>
<ellipse cx="1580" cy="195" rx="12" ry="6" transform="rotate(10 1580 195)" fill="#e2d68a" opacity=".8" filter="url(#b1)"/>
<ellipse cx="1600" cy="215" rx="8" ry="5" fill="#e2d68a" opacity=".8" filter="url(#b1)"/>
<ellipse cx="1565" cy="230" rx="9" ry="5" fill="#e2d68a" opacity=".8" filter="url(#b1)"/>
<ellipse cx="1585" cy="135" rx="14" ry="5" fill="#e2d68a" opacity=".8" filter="url(#b1)"/>
<g filter="url(#bone)"><path d="M1405 548C1388.6 544.1 1424.9 530.9 1433.4 524.7C1441.9 518.5 1446.6 514.5 1456 511C1465.4 507.6 1480.6 503.6 1490 504C1499.4 504.4 1506.9 509.6 1512.5 513.4C1518.1 517.2 1520.5 521.2 1523.8 527C1527 532.8 1551.8 544.5 1532 548C1512.2 551.5 1421.4 551.9 1405 548Z" fill="#c8b852"/><path d="M1646 548C1627.1 543 1661.7 524.5 1668.5 518C1675.3 511.5 1678.3 510.3 1686.6 509C1694.8 507.7 1709 509.3 1718 510C1727 510.7 1734 510.6 1740.8 513.4C1747.6 516.2 1752.1 521.2 1759 527C1765.9 532.8 1800.8 544.5 1782 548C1763.2 551.5 1664.9 553 1646 548Z" fill="#c8b852"/></g>
<path d="M1405 548C1409.7 544.1 1424.9 530.9 1433.4 524.7C1441.9 518.5 1446.6 514.5 1456 511C1465.4 507.6 1480.6 503.6 1490 504C1499.4 504.4 1506.9 509.6 1512.5 513.4C1518.1 517.2 1520.5 521.2 1523.8 527C1527 532.8 1530.6 544.5 1532 548" fill="none" stroke="#8a6a30" stroke-width="3" opacity=".5" filter="url(#b1)"/>
<path d="M1646 548C1649.8 543 1661.7 524.5 1668.5 518C1675.3 511.5 1678.3 510.3 1686.6 509C1694.8 507.7 1709 509.3 1718 510C1727 510.7 1734 510.6 1740.8 513.4C1747.6 516.2 1752.1 521.2 1759 527C1765.9 532.8 1778.2 544.5 1782 548" fill="none" stroke="#8a6a30" stroke-width="3" opacity=".5" filter="url(#b1)"/>
<path d="M1727 244C1732.5 244.3 1738.7 245.7 1745 248C1751.3 250.3 1757.5 254.3 1765 258C1772.5 261.7 1782.2 264.7 1790 270C1797.8 275.3 1805.7 283.3 1812 290C1818.3 296.7 1823.8 303.3 1828 310C1832.2 316.7 1834.8 323.3 1837 330C1839.2 336.7 1840.5 343.9 1841 350C1841.5 356.1 1841.7 362.2 1840 366.5C1838.3 370.8 1835.5 373.8 1831 375.5C1826.5 377.2 1818.7 377.8 1813 376.7C1807.3 375.6 1801.5 372.4 1797 368.8C1792.5 365.2 1791.6 361 1786 355C1780.4 349 1770.2 338.1 1763.4 332.6C1756.6 327.1 1750.3 324.6 1745 322C1739.7 319.4 1736.3 316.5 1731.8 316.8C1727.3 317.1 1722.1 323.2 1718 323.6C1713.9 324 1709.7 321.6 1707 319C1704.3 316.4 1703.8 312.8 1702 308C1700.2 303.2 1697.5 296.3 1696 290C1694.5 283.7 1692.3 276.2 1693 270C1693.7 263.8 1696.8 257 1700 253C1703.2 249 1707.5 247.5 1712 246C1716.5 244.5 1721.5 243.7 1727 244Z" fill="url(#spl)"/>
<g filter="url(#wav)" opacity=".2"><path d="M1727 244C1732.5 244.3 1738.7 245.7 1745 248C1751.3 250.3 1757.5 254.3 1765 258C1772.5 261.7 1782.2 264.7 1790 270C1797.8 275.3 1805.7 283.3 1812 290C1818.3 296.7 1823.8 303.3 1828 310C1832.2 316.7 1834.8 323.3 1837 330C1839.2 336.7 1840.5 343.9 1841 350C1841.5 356.1 1841.7 362.2 1840 366.5C1838.3 370.8 1835.5 373.8 1831 375.5C1826.5 377.2 1818.7 377.8 1813 376.7C1807.3 375.6 1801.5 372.4 1797 368.8C1792.5 365.2 1791.6 361 1786 355C1780.4 349 1770.2 338.1 1763.4 332.6C1756.6 327.1 1750.3 324.6 1745 322C1739.7 319.4 1736.3 316.5 1731.8 316.8C1727.3 317.1 1722.1 323.2 1718 323.6C1713.9 324 1709.7 321.6 1707 319C1704.3 316.4 1703.8 312.8 1702 308C1700.2 303.2 1697.5 296.3 1696 290C1694.5 283.7 1692.3 276.2 1693 270C1693.7 263.8 1696.8 257 1700 253C1703.2 249 1707.5 247.5 1712 246C1716.5 244.5 1721.5 243.7 1727 244Z" fill="#e8103a"/></g>
<path d="M1745 300C1749.2 299.3 1761.7 310.5 1770 318C1778.3 325.5 1787.5 336.7 1795 345C1802.5 353.3 1814.2 364.2 1815 368C1815.8 371.8 1804.8 370.2 1800 368C1795.2 365.8 1792.2 360.8 1786 355C1779.8 349.2 1769.8 338.5 1763 333C1756.2 327.5 1748 327.5 1745 322C1742 316.5 1740.8 300.7 1745 300Z" fill="#8a0418" opacity=".55" filter="url(#b2)"/>
<path d="M1760 262C1765 264.3 1780.8 269.7 1790 276C1799.2 282.3 1808.3 291 1815 300C1821.7 309 1827.5 325 1830 330" fill="none" stroke="#ff3050" stroke-width="5" opacity=".5" filter="url(#b2)"/>
<defs><clipPath id="livclip"><path d="M1388 191C1397.5 187.8 1408.7 188.4 1420 189C1431.3 189.6 1446.8 191.2 1456 194.4C1465.2 197.6 1469.3 203.1 1475 208C1480.7 212.9 1482.5 221 1490 223.8C1497.5 226.6 1510.6 224.6 1520 225C1529.4 225.4 1539.7 224.2 1546.4 226C1553.1 227.8 1551.1 233.3 1560 236C1568.9 238.7 1588.7 240.7 1600 242C1611.3 243.3 1617.8 243.2 1627.8 244C1637.8 244.8 1650.2 245.8 1660 247C1669.8 248.2 1679.2 250 1686.6 251C1694 252 1700.4 251.2 1704.6 253C1708.8 254.8 1707.8 258.8 1712 262C1716.2 265.2 1725 267.3 1730 272C1735 276.7 1739.5 283.7 1742 290C1744.5 296.3 1747 305 1745 309.7C1743 314.4 1737.5 318 1730 318C1722.5 318 1706.9 308.5 1700 309.7C1693.1 310.9 1692.5 321.2 1688.8 325C1685 328.8 1682 328.3 1677.5 332.6C1673 336.9 1667 345.1 1661.7 350.7C1656.4 356.3 1651.6 362.4 1645.9 366.5C1640.2 370.6 1634.6 373.2 1627.8 375.5C1621 377.8 1611.3 376.6 1605 380C1598.7 383.4 1597.5 392.1 1590 395.9C1582.5 399.7 1567.3 402.7 1560 402.7C1552.7 402.7 1551.7 399.7 1546.4 395.9C1541.1 392.1 1533.2 384.5 1528.3 380C1523.4 375.5 1521.5 368.8 1517 368.8C1512.5 368.8 1507.4 375.5 1501 380C1494.6 384.5 1485.3 391 1478.6 395.9C1471.8 400.8 1465.8 405.3 1460.5 409.4C1455.2 413.5 1456 416.2 1447 420.7C1438 425.2 1418 431 1406.3 436.6C1394.6 442.2 1386 448.6 1376.9 454.6C1367.9 460.6 1359.9 465.5 1352 472.7C1344.1 479.9 1335.8 490.6 1329.4 497.6C1323 504.6 1318.9 510.9 1313.6 514.5C1308.3 518.1 1302.7 521.1 1297.8 519C1292.9 516.9 1287.4 508.6 1284.2 502C1281 495.4 1279 488.2 1278.6 479.5C1278.2 470.8 1279.2 461.3 1282 450C1284.8 438.7 1292.5 425.6 1295.5 411.7C1298.5 397.8 1299.8 380.1 1300 366.5C1300.2 352.9 1297.1 339.5 1296.7 330C1296.3 320.5 1295.8 318.7 1297.8 309.7C1299.8 300.7 1304.5 285.6 1309 275.8C1313.5 266 1318.6 258.5 1325 251C1331.4 243.5 1341.1 237.8 1347.5 230.6C1353.9 223.4 1356.5 214.6 1363.3 208C1370 201.4 1378.5 194.2 1388 191Z" /></clipPath></defs>
<path d="M1388 191C1397.5 187.8 1408.7 188.4 1420 189C1431.3 189.6 1446.8 191.2 1456 194.4C1465.2 197.6 1469.3 203.1 1475 208C1480.7 212.9 1482.5 221 1490 223.8C1497.5 226.6 1510.6 224.6 1520 225C1529.4 225.4 1539.7 224.2 1546.4 226C1553.1 227.8 1551.1 233.3 1560 236C1568.9 238.7 1588.7 240.7 1600 242C1611.3 243.3 1617.8 243.2 1627.8 244C1637.8 244.8 1650.2 245.8 1660 247C1669.8 248.2 1679.2 250 1686.6 251C1694 252 1700.4 251.2 1704.6 253C1708.8 254.8 1707.8 258.8 1712 262C1716.2 265.2 1725 267.3 1730 272C1735 276.7 1739.5 283.7 1742 290C1744.5 296.3 1747 305 1745 309.7C1743 314.4 1737.5 318 1730 318C1722.5 318 1706.9 308.5 1700 309.7C1693.1 310.9 1692.5 321.2 1688.8 325C1685 328.8 1682 328.3 1677.5 332.6C1673 336.9 1667 345.1 1661.7 350.7C1656.4 356.3 1651.6 362.4 1645.9 366.5C1640.2 370.6 1634.6 373.2 1627.8 375.5C1621 377.8 1611.3 376.6 1605 380C1598.7 383.4 1597.5 392.1 1590 395.9C1582.5 399.7 1567.3 402.7 1560 402.7C1552.7 402.7 1551.7 399.7 1546.4 395.9C1541.1 392.1 1533.2 384.5 1528.3 380C1523.4 375.5 1521.5 368.8 1517 368.8C1512.5 368.8 1507.4 375.5 1501 380C1494.6 384.5 1485.3 391 1478.6 395.9C1471.8 400.8 1465.8 405.3 1460.5 409.4C1455.2 413.5 1456 416.2 1447 420.7C1438 425.2 1418 431 1406.3 436.6C1394.6 442.2 1386 448.6 1376.9 454.6C1367.9 460.6 1359.9 465.5 1352 472.7C1344.1 479.9 1335.8 490.6 1329.4 497.6C1323 504.6 1318.9 510.9 1313.6 514.5C1308.3 518.1 1302.7 521.1 1297.8 519C1292.9 516.9 1287.4 508.6 1284.2 502C1281 495.4 1279 488.2 1278.6 479.5C1278.2 470.8 1279.2 461.3 1282 450C1284.8 438.7 1292.5 425.6 1295.5 411.7C1298.5 397.8 1299.8 380.1 1300 366.5C1300.2 352.9 1297.1 339.5 1296.7 330C1296.3 320.5 1295.8 318.7 1297.8 309.7C1299.8 300.7 1304.5 285.6 1309 275.8C1313.5 266 1318.6 258.5 1325 251C1331.4 243.5 1341.1 237.8 1347.5 230.6C1353.9 223.4 1356.5 214.6 1363.3 208C1370 201.4 1378.5 194.2 1388 191Z" fill="url(#livg)" opacity=".7"/>
<path d="M1434 353C1438 350 1450.7 349.5 1460 350C1469.3 350.5 1481.3 353.3 1490 356C1498.7 358.7 1510.2 362.3 1512 366C1513.8 369.7 1506.7 373.3 1501 378C1495.3 382.7 1485.5 389.7 1478 394C1470.5 398.3 1465.7 399.7 1456 404C1446.3 408.3 1431 414.3 1420 420C1409 425.7 1399.2 432.7 1390 438C1380.8 443.3 1371.3 450.7 1365 452C1358.7 453.3 1350.3 451.3 1352 446C1353.7 440.7 1367 428.3 1375 420C1383 411.7 1391.7 403 1400 396C1408.3 389 1419 382.7 1425 378C1431 373.3 1434.5 372.2 1436 368C1437.5 363.8 1430 356 1434 353Z" fill="#3d78b8" opacity=".55"/>
<path d="M1517 345C1519 338.7 1532.8 334.2 1540 330C1547.2 325.8 1551.7 321.3 1560 320C1568.3 318.7 1580 320.3 1590 322C1600 323.7 1611.7 326.2 1620 330C1628.3 333.8 1638.3 339.2 1640 345C1641.7 350.8 1636.7 359.5 1630 365C1623.3 370.5 1610 374.7 1600 378C1590 381.3 1579.2 384.7 1570 385C1560.8 385.3 1552 382.8 1545 380C1538 377.2 1532.7 373.8 1528 368C1523.3 362.2 1515 351.3 1517 345Z" fill="#4a80b8" opacity=".45"/>
<path d="M1545 255C1555 247.5 1586.7 253.8 1600 255C1613.3 256.2 1620.8 249.5 1625 262C1629.2 274.5 1629.2 310.3 1625 330C1620.8 349.7 1610.8 369.2 1600 380C1589.2 390.8 1570 395 1560 395C1550 395 1543.3 395.8 1540 380C1536.7 364.2 1539.2 320.8 1540 300C1540.8 279.2 1535 262.5 1545 255Z" fill="#4d82b4" opacity=".35"/>
<path d="M1370 215C1379.2 208.3 1388.3 202.5 1400 200C1411.7 197.5 1428.3 197.5 1440 200C1451.7 202.5 1470 210.8 1470 215C1470 219.2 1451.7 221.7 1440 225C1428.3 228.3 1411.7 230.8 1400 235C1388.3 239.2 1380 244.2 1370 250C1360 255.8 1344.2 271.7 1340 270C1335.8 268.3 1340 249.2 1345 240C1350 230.8 1360.8 221.7 1370 215Z" fill="#8aa8d8" opacity=".35" filter="url(#b2)"/>
<g opacity=".45" clip-path="url(#livclip)"><path d="M1539.5 178.5 L1537.8 178.8 L1535.6 179.3 L1533 179.8 L1530 180.4 L1526.8 181 L1523.4 181.7 L1519.8 182.5 L1516.2 183.3 L1512.5 184.1 L1508.9 184.9 L1505.4 185.8 L1502 186.7 L1498.9 187.6 L1495.7 188.6 L1492.7 189.6 L1489.7 190.6 L1486.7 191.7 L1483.8 192.8 L1481 193.9 L1478.2 195.1 L1475.4 196.2 L1472.6 197.4 L1469.8 198.7 L1467 199.9 L1464.1 201.2 L1461.2 202.6 L1458.4 203.9 L1455.5 205.3 L1452.6 206.7 L1449.7 208.2 L1446.8 209.7 L1443.9 211.2 L1441 212.7 L1438.1 214.3 L1435.2 215.9 L1432.3 217.6 L1429.4 219.3 L1426.7 220.8 L1424 222.4 L1421.4 224 L1418.7 225.7 L1416 227.4 L1413.3 229.1 L1410.7 230.8 L1408 232.6 L1405.3 234.4 L1402.6 236.3 L1399.9 238.2 L1397.2 240.1 L1394.5 242.2 L1392.1 244.2 L1389.6 246.3 L1387.2 248.5 L1384.7 250.6 L1382.3 252.8 L1379.8 255.1 L1377.4 257.3 L1375 259.6 L1372.6 261.9 L1370.2 264.1 L1367.9 266.4 L1365.5 268.6 L1363.3 270.9 L1361 273.1 L1358.7 275.4 L1356.3 277.7 L1354 280 L1351.7 282.4 L1349.4 284.7 L1347.1 287 L1344.8 289.3 L1342.6 291.7 L1340.4 294.1 L1338.2 296.5 L1336.1 298.9 L1334 301.4 L1331.9 303.9 L1329.9 306.5 L1327.9 309.1 L1325.9 311.7 L1324 314.4 L1322 317.1 L1320.2 319.8 L1318.3 322.5 L1316.6 325.2 L1314.8 327.8 L1313.2 330.4 L1311.6 333 L1310.1 335.4 L1308.6 337.9 L1306.6 341.3 L1304.7 344.9 L1302.8 348.4 L1301.2 351.8 L1299.6 355 L1298.2 358 L1297.1 360.6 L1296.1 362.9 L1295.3 364.6 L1300.7 367.4 L1301.7 365.7 L1302.9 363.5 L1304.3 361 L1305.8 358.2 L1307.5 355.1 L1309.3 351.9 L1311.2 348.6 L1313.3 345.3 L1315.4 342.1 L1316.9 340 L1318.6 337.7 L1320.3 335.3 L1322.1 332.9 L1323.9 330.4 L1325.8 327.9 L1327.8 325.4 L1329.8 322.9 L1331.8 320.4 L1333.8 318 L1335.9 315.5 L1338 313.2 L1340.1 310.9 L1342.2 308.7 L1344.3 306.5 L1346.5 304.3 L1348.7 302.1 L1350.9 300 L1353.2 297.9 L1355.6 295.8 L1357.9 293.6 L1360.3 291.5 L1362.7 289.4 L1365.2 287.3 L1367.7 285.1 L1370.2 282.9 L1372.5 280.9 L1374.9 278.9 L1377.3 276.8 L1379.8 274.7 L1382.2 272.7 L1384.7 270.6 L1387.2 268.5 L1389.7 266.5 L1392.2 264.5 L1394.7 262.5 L1397.2 260.6 L1399.6 258.8 L1402.1 256.9 L1404.5 255.2 L1407 253.3 L1409.5 251.4 L1412.1 249.6 L1414.6 247.7 L1417.1 246 L1419.6 244.2 L1422.2 242.5 L1424.7 240.8 L1427.2 239.2 L1429.8 237.5 L1432.3 235.9 L1434.9 234.3 L1437.4 232.7 L1440.2 231.1 L1442.9 229.4 L1445.7 227.8 L1448.4 226.3 L1451.2 224.7 L1453.9 223.2 L1456.7 221.7 L1459.5 220.3 L1462.2 218.9 L1465 217.5 L1467.7 216.1 L1470.5 214.8 L1473.2 213.5 L1475.9 212.2 L1478.6 210.9 L1481.3 209.7 L1483.9 208.5 L1486.6 207.4 L1489.2 206.3 L1491.9 205.2 L1494.6 204.2 L1497.4 203.1 L1500.2 202.2 L1503.1 201.2 L1505.9 200.3 L1509 199.4 L1512.3 198.6 L1515.8 197.7 L1519.3 196.8 L1522.8 196 L1526.3 195.2 L1529.7 194.5 L1532.9 193.7 L1535.8 193.1 L1538.4 192.5 L1540.7 192 L1542.5 191.5Z" fill="#ac544a"/><path d="M1540.9 182.1 L1539.1 182.5 L1536.9 183 L1534.3 183.5 L1531.4 184.1 L1528.2 184.8 L1524.7 185.5 L1521.2 186.3 L1517.6 187 L1513.9 187.9 L1510.4 188.7 L1506.9 189.6 L1503.6 190.5 L1500.5 191.4 L1497.4 192.4 L1494.4 193.4 L1491.4 194.4 L1488.5 195.5 L1485.7 196.6 L1482.8 197.7 L1480.1 198.8 L1477.3 200 L1474.5 201.2 L1471.7 202.4 L1469 203.7 L1466.1 205 L1463.3 206.3 L1460.4 207.7 L1457.5 209.1 L1454.7 210.5 L1451.8 211.9 L1448.9 213.4 L1446.1 214.9 L1443.2 216.5 L1440.3 218.1 L1437.4 219.7 L1434.6 221.3 L1431.7 223 L1429.1 224.6 L1426.4 226.2 L1423.8 227.8 L1421.1 229.4 L1418.5 231.1 L1415.8 232.8 L1413.2 234.6 L1410.5 236.3 L1407.8 238.1 L1405.2 240 L1402.5 241.9 L1399.9 243.8 L1397.2 245.9 L1394.8 247.9 L1392.3 249.9 L1389.9 252 L1387.4 254.1 L1384.9 256.3 L1382.5 258.4 L1380 260.7 L1377.6 262.9 L1375.2 265.1 L1372.8 267.3 L1370.4 269.6 L1368.1 271.8 L1365.8 274 L1363.6 276.1 L1361.2 278.4 L1358.8 280.7 L1356.5 283 L1354.1 285.3 L1351.8 287.6 L1349.5 289.9 L1347.2 292.2 L1345 294.5 L1342.8 296.8 L1340.6 299.2 L1338.5 301.6 L1336.4 304 L1334.3 306.4 L1332.2 308.9 L1330.2 311.5 L1328.2 314.1 L1326.2 316.7 L1324.3 319.4 L1322.4 322.1 L1320.6 324.7 L1318.8 327.4 L1317 330 L1315.3 332.6 L1313.7 335.1 L1312.2 337.5 L1310.7 339.9 L1308.7 343.3 L1306.7 346.8 L1304.9 350.2 L1303.2 353.6 L1301.6 356.8 L1300.2 359.8 L1299 362.4 L1297.9 364.6 L1297.1 366.3 L1300.5 368.1 L1301.4 366.4 L1302.6 364.2 L1303.9 361.6 L1305.4 358.8 L1307.1 355.7 L1308.9 352.4 L1310.8 349.1 L1312.8 345.8 L1314.9 342.5 L1316.4 340.3 L1318.1 338 L1319.7 335.6 L1321.5 333.1 L1323.3 330.6 L1325.2 328.1 L1327.1 325.5 L1329.1 323 L1331.1 320.5 L1333.1 318 L1335.2 315.5 L1337.2 313.1 L1339.3 310.8 L1341.4 308.5 L1343.5 306.2 L1345.7 304 L1347.9 301.8 L1350.2 299.6 L1352.4 297.5 L1354.8 295.3 L1357.1 293.1 L1359.5 291 L1361.9 288.8 L1364.3 286.6 L1366.8 284.5 L1369.2 282.3 L1371.6 280.2 L1373.9 278.1 L1376.3 276 L1378.7 273.9 L1381.2 271.8 L1383.6 269.7 L1386.1 267.6 L1388.6 265.5 L1391.1 263.5 L1393.6 261.5 L1396.1 259.5 L1398.5 257.6 L1401 255.7 L1403.4 253.9 L1406 252 L1408.5 250.1 L1411.1 248.2 L1413.6 246.4 L1416.2 244.6 L1418.7 242.9 L1421.3 241.1 L1423.9 239.5 L1426.4 237.8 L1429 236.2 L1431.6 234.5 L1434.1 233 L1436.7 231.4 L1439.5 229.7 L1442.3 228.1 L1445 226.5 L1447.8 224.9 L1450.6 223.3 L1453.4 221.8 L1456.2 220.4 L1458.9 218.9 L1461.7 217.5 L1464.5 216.1 L1467.3 214.7 L1470.1 213.4 L1472.8 212.1 L1475.6 210.8 L1478.3 209.6 L1480.9 208.4 L1483.6 207.2 L1486.3 206 L1489 204.9 L1491.7 203.8 L1494.5 202.8 L1497.3 201.8 L1500.2 200.8 L1503.1 199.8 L1506 198.9 L1509.1 198.1 L1512.5 197.2 L1516 196.3 L1519.5 195.5 L1523.1 194.6 L1526.6 193.8 L1529.9 193.1 L1533.1 192.4 L1536 191.8 L1538.7 191.2 L1540.9 190.7 L1542.7 190.3Z" fill="#d9cd68" filter="url(#b1)"/><path d="M1545 228.2 L1543.4 228.8 L1541.4 229.4 L1538.9 230.2 L1536.1 231 L1533.1 232 L1529.9 233 L1526.5 234.2 L1523.1 235.3 L1519.7 236.6 L1516.3 237.9 L1512.9 239.3 L1509.8 240.7 L1507 242 L1504.3 243.4 L1501.5 244.8 L1498.7 246.3 L1495.9 247.9 L1493.2 249.4 L1490.4 251.1 L1487.7 252.7 L1485 254.4 L1482.3 256.1 L1479.7 257.9 L1477.2 259.6 L1474.7 261.4 L1472 263.4 L1469.4 265.5 L1466.9 267.5 L1464.4 269.7 L1461.9 271.8 L1459.5 274 L1457.2 276.2 L1454.9 278.4 L1452.7 280.6 L1450.7 282.9 L1448.7 285.2 L1446.8 287.4 L1444.7 290.1 L1442.6 292.7 L1440.7 295.3 L1438.9 298 L1437.1 300.6 L1435.5 303.2 L1433.9 305.8 L1432.3 308.4 L1430.7 311.1 L1429.2 313.9 L1427.6 316.8 L1426 319.7 L1424.6 322.7 L1423.2 325.7 L1421.8 328.7 L1420.5 331.6 L1419.1 334.6 L1417.7 337.5 L1416.3 340.3 L1414.8 343.1 L1413.2 346 L1411.4 349 L1409.4 352.2 L1407.5 355.4 L1405.5 358.5 L1403.6 361.5 L1401.8 364.3 L1400.3 366.8 L1399 369 L1398 370.6 L1402 373.4 L1403.2 371.8 L1404.7 369.9 L1406.5 367.5 L1408.5 364.9 L1410.6 362 L1412.8 359 L1415 355.9 L1417.2 352.8 L1419.3 349.8 L1421.2 346.9 L1423 344.1 L1424.7 341.2 L1426.4 338.3 L1428 335.5 L1429.6 332.6 L1431.2 329.8 L1432.7 327 L1434.3 324.3 L1436 321.7 L1437.6 319.1 L1439.4 316.6 L1441.1 314.1 L1442.8 311.7 L1444.6 309.4 L1446.3 307.1 L1448.1 304.8 L1450 302.6 L1451.9 300.3 L1454 298.1 L1456.2 295.8 L1458.1 293.9 L1460.1 291.9 L1462.2 289.9 L1464.3 287.9 L1466.4 285.8 L1468.6 283.7 L1470.8 281.7 L1473.1 279.7 L1475.4 277.7 L1477.7 275.7 L1480.1 273.8 L1482.5 272 L1484.8 270.3 L1487.1 268.6 L1489.6 266.9 L1492 265.3 L1494.5 263.7 L1497.1 262.1 L1499.7 260.5 L1502.3 259 L1504.9 257.5 L1507.5 256.1 L1510.1 254.7 L1512.7 253.4 L1515.2 252.1 L1518 250.8 L1521 249.6 L1524.1 248.3 L1527.3 247.1 L1530.6 245.9 L1533.8 244.8 L1537 243.8 L1539.9 242.8 L1542.7 241.9 L1545.1 241.1 L1547.3 240.4 L1549 239.8Z" fill="#ac544a"/><path d="M1546.6 231.6 L1544.9 232.2 L1542.9 232.8 L1540.4 233.6 L1537.7 234.5 L1534.7 235.4 L1531.4 236.5 L1528.1 237.6 L1524.7 238.8 L1521.3 240 L1518 241.3 L1514.7 242.7 L1511.6 244.1 L1508.9 245.4 L1506.2 246.7 L1503.4 248.2 L1500.7 249.6 L1497.9 251.2 L1495.2 252.7 L1492.5 254.4 L1489.8 256 L1487.1 257.7 L1484.5 259.4 L1481.9 261.1 L1479.4 262.9 L1477 264.6 L1474.4 266.6 L1471.8 268.6 L1469.3 270.7 L1466.8 272.8 L1464.4 274.9 L1462 277 L1459.7 279.2 L1457.5 281.4 L1455.3 283.6 L1453.3 285.8 L1451.3 288 L1449.4 290.2 L1447.2 292.8 L1445.2 295.4 L1443.2 297.9 L1441.4 300.5 L1439.7 303 L1438 305.6 L1436.4 308.1 L1434.8 310.7 L1433.2 313.4 L1431.6 316.1 L1430 318.9 L1428.4 321.8 L1426.9 324.7 L1425.5 327.6 L1424.1 330.6 L1422.7 333.5 L1421.3 336.5 L1419.8 339.4 L1418.4 342.2 L1416.8 345 L1415.1 347.9 L1413.3 351 L1411.3 354.1 L1409.3 357.3 L1407.3 360.4 L1405.3 363.4 L1403.5 366.1 L1401.9 368.6 L1400.6 370.7 L1399.5 372.4 L1402.1 374 L1403.2 372.5 L1404.7 370.5 L1406.4 368.1 L1408.3 365.5 L1410.4 362.6 L1412.6 359.5 L1414.7 356.4 L1416.9 353.3 L1418.9 350.3 L1420.8 347.4 L1422.5 344.6 L1424.2 341.7 L1425.8 338.8 L1427.4 335.9 L1428.9 333 L1430.4 330.2 L1432 327.4 L1433.6 324.6 L1435.2 321.9 L1436.8 319.3 L1438.5 316.8 L1440.2 314.3 L1441.9 311.8 L1443.6 309.4 L1445.4 307 L1447.1 304.7 L1449 302.4 L1450.9 300.1 L1453 297.8 L1455.2 295.4 L1457.1 293.4 L1459.1 291.4 L1461.2 289.4 L1463.3 287.3 L1465.5 285.2 L1467.7 283.1 L1469.9 281 L1472.2 279 L1474.6 276.9 L1477 275 L1479.4 273 L1481.8 271.2 L1484.1 269.5 L1486.5 267.8 L1489 266.1 L1491.5 264.4 L1494 262.8 L1496.6 261.2 L1499.2 259.6 L1501.9 258.1 L1504.5 256.6 L1507.2 255.1 L1509.8 253.7 L1512.4 252.4 L1515 251.1 L1517.8 249.8 L1520.9 248.5 L1524.1 247.3 L1527.3 246.1 L1530.6 244.9 L1533.9 243.8 L1537 242.7 L1540 241.8 L1542.7 240.9 L1545.2 240.1 L1547.3 239.4 L1549 238.8Z" fill="#d9cd68" filter="url(#b1)"/><path d="M1625.3 238.6 L1627 239.3 L1629.1 240.2 L1631.7 241.3 L1634.5 242.6 L1637.5 243.9 L1640.7 245.3 L1644 246.8 L1647.3 248.3 L1650.5 249.8 L1653.6 251.2 L1656.4 252.6 L1659 253.9 L1662.1 255.6 L1665.1 257.1 L1667.9 258.7 L1670.5 260.2 L1673 261.7 L1675.5 263.3 L1678 265 L1680.4 266.8 L1682.9 268.8 L1685 270.7 L1687.2 272.9 L1689.6 275.3 L1692 277.9 L1694.5 280.6 L1696.8 283.2 L1699.1 285.8 L1701.1 288.2 L1703 290.4 L1704.6 292.2 L1705.9 293.6 L1714.1 286.4 L1712.9 285 L1711.4 283.2 L1709.6 281 L1707.5 278.6 L1705.2 275.9 L1702.9 273.2 L1700.4 270.3 L1697.8 267.6 L1695.3 264.9 L1692.8 262.4 L1690.3 260.2 L1687.5 257.8 L1684.7 255.7 L1682 253.7 L1679.2 251.9 L1676.4 250.2 L1673.6 248.5 L1670.7 246.9 L1667.6 245.2 L1664.4 243.5 L1661.7 242.1 L1658.8 240.6 L1655.6 239 L1652.3 237.5 L1649 235.9 L1645.6 234.4 L1642.4 232.9 L1639.4 231.6 L1636.5 230.3 L1634.1 229.2 L1632 228.2 L1630.3 227.4Z" fill="#ac544a"/><path d="M1627 237.6 L1628.7 238.4 L1630.9 239.3 L1633.4 240.4 L1636.2 241.7 L1639.3 243 L1642.5 244.4 L1645.8 245.9 L1649.1 247.4 L1652.3 248.9 L1655.4 250.4 L1658.2 251.8 L1660.8 253.1 L1664 254.8 L1666.9 256.4 L1669.7 257.9 L1672.4 259.5 L1675 261 L1677.5 262.7 L1680 264.4 L1682.5 266.3 L1685.1 268.4 L1687.3 270.3 L1689.6 272.6 L1692 275 L1694.4 277.7 L1696.9 280.4 L1699.2 283.1 L1701.5 285.6 L1703.5 288.1 L1705.4 290.2 L1707 292.1 L1708.3 293.5 L1713.3 288.9 L1712.1 287.6 L1710.6 285.8 L1708.8 283.6 L1706.7 281.2 L1704.4 278.5 L1702.1 275.8 L1699.6 273 L1697.1 270.2 L1694.6 267.6 L1692.1 265.2 L1689.7 263 L1686.9 260.7 L1684.2 258.7 L1681.5 256.8 L1678.8 255 L1676.1 253.3 L1673.3 251.7 L1670.4 250 L1667.4 248.4 L1664.2 246.7 L1661.5 245.3 L1658.6 243.8 L1655.4 242.3 L1652.2 240.7 L1648.8 239.2 L1645.5 237.7 L1642.3 236.2 L1639.2 234.9 L1636.4 233.6 L1633.9 232.5 L1631.8 231.5 L1630.2 230.8Z" fill="#d9cd68" filter="url(#b1)"/></g>
<path d="M1700 253C1704.5 248.8 1713.7 248.5 1720 250C1726.3 251.5 1733.8 256.2 1738 262C1742.2 267.8 1744 277.8 1745 285C1746 292.2 1746.5 299.5 1744 305C1741.5 310.5 1735.3 316.2 1730 318C1724.7 319.8 1717.3 319 1712 316C1706.7 313 1701.2 306.8 1698 300C1694.8 293.2 1692.7 282.8 1693 275C1693.3 267.2 1695.5 257.2 1700 253Z" fill="#6a2a60" opacity=".75"/>
<path d="M1382 312C1383.7 308.5 1386.3 304.1 1390 302C1393.7 299.9 1399.3 299.7 1404 299.5C1408.7 299.3 1414 299.6 1418 301C1422 302.4 1425.5 304.8 1428 308C1430.5 311.2 1432.7 315.7 1433 320C1433.3 324.3 1432.2 330 1430 334C1427.8 338 1423.7 341.8 1420 344C1416.3 346.2 1412 347.3 1408 347C1404 346.7 1400 344 1396 342C1392 340 1386.7 338.2 1384 335C1381.3 331.8 1380.3 326.8 1380 323C1379.7 319.2 1380.3 315.5 1382 312Z" fill="url(#tum)"/>
</svg></div>
<div class="a" style="left:690px;top:0;width:1px;height:924px;background:#6e6e82"></div>
<div class="a" style="left:0;top:462px;width:1381px;height:1px;background:#55555f"></div>
<div class="a" style="left:0px;top:463px;width:690px;height:15px;background:#edc93a"><svg style="left:3px;top:3px" width="12" height="9" viewBox="0 0 12 9"><path d="M0 4.500h5M5 2.500v4l2-1h3v-2h-3z" fill="#5a4a10" stroke="#5a4a10" stroke-width=".8" opacity=".6"/></svg><div class="a" style="left:17px;top:0;width:12px;height:15px;background:#fbe77e"></div><div class="t" style="left:16px;top:1px;width:13px;text-align:center;font-size:11.500px">Y</div><svg style="left:32px;top:1px" width="14" height="13" viewBox="0 0 14 13"><rect x="2.500" y="2" width="9" height="9" fill="#5a4a10" opacity=".55"/><rect x="3" y="2.500" width="4" height="4" fill="#fff" opacity=".25"/><rect x="7" y="6.500" width="4" height="4" fill="#000" opacity=".25"/><path d="M7 0v13M0 6.500h14" stroke="#222" stroke-width=".7" stroke-dasharray="2 9 2"/></svg><div class="a" style="left:55px;top:5px;width:531px;height:5px;background:#f4f4f4;border:1px solid #444;border-radius:2px"></div><div class="a" style="left:55px;top:5px;width:413px;height:5px;background:#3aa0e8;border:1px solid #3a4a5a;border-radius:2px"></div><div class="a" style="left:464px;top:2px;width:9px;height:11px;background:#fff;border:1px solid #444;border-radius:2px"></div><div class="a" style="left:591px;top:0;width:99px;height:15px;background:#fde985"></div><div class="t" style="left:592.5px;top:1.500px;font-size:10.500px">R: 109.093mm</div></div>
<div class="a" style="left:0;top:478px;width:690px;height:446px;background:#000;overflow:hidden"><svg id="sag" style="left:0;top:0" width="690" height="446" viewBox="539 558 690 446">
<defs><clipPath id="sbody"><path d="M647.6 596 L705 596 L703 615 L702 632 L694 660 L689 679 L702 675 L721 667 L761.7 648.5 L792 645 L816 650 L835 657 L862 673 L880 680 L904 691 L928 705 L949 725 L965 744 L977 759 L986 775 L990 797 L1001.5 800 L1005.5 751.5 L1008.6 711 L1007.5 681 L1001.5 630 L992.4 596 L1049 596 L1052 630 L1054 691 L1052 751.5 L1050 800 L1044 844.5 L1046 895 L1050 945 L1058 975.7 L1063 1010 L626 1010 L612 965.6 L602 915 L600 854.6 L605 794 L615 750 L631 675Z"/></clipPath></defs>
<g filter="url(#ct)">
<g clip-path="url(#sbody)">
<path d="M647.6 596 L705 596 L703 615 L702 632 L694 660 L689 679 L702 675 L721 667 L761.7 648.5 L792 645 L816 650 L835 657 L862 673 L880 680 L904 691 L928 705 L949 725 L965 744 L977 759 L986 775 L990 797 L1001.5 800 L1005.5 751.5 L1008.6 711 L1007.5 681 L1001.5 630 L992.4 596 L1049 596 L1052 630 L1054 691 L1052 751.5 L1050 800 L1044 844.5 L1046 895 L1050 945 L1058 975.7 L1063 1010 L626 1010 L612 965.6 L602 915 L600 854.6 L605 794 L615 750 L631 675Z" fill="#6c6c6c" stroke="#6c6c6c" stroke-width="2" stroke-linejoin="round"/>
<path d="M690 597C688.3 604.2 683 626.2 680 640C677 653.8 675.3 666.7 672 680C668.7 693.3 663.7 705 660 720C656.3 735 652.3 754.3 650 770C647.7 785.7 647.7 799 646 814C644.3 829 641.3 846.5 640 860C638.7 873.5 637.3 884.2 638 895C638.7 905.8 641.3 916.7 644 925C646.7 933.3 649.2 932.5 654 945C658.8 957.5 669.8 990.8 673 1000" fill="none" stroke="#868686" stroke-width="11" filter="url(#b2)"/>
<ellipse cx="689" cy="632" rx="12" ry="24" transform="rotate(8 689 632)" fill="#8c8c8c" filter="url(#b1)"/>
<ellipse cx="684" cy="631" rx="3" ry="2" transform="rotate(-30 684 631)" fill="#f4f4f4"/>
<ellipse cx="698" cy="630" rx="3" ry="2" transform="rotate(-30 698 630)" fill="#f4f4f4"/>
<ellipse cx="689" cy="656" rx="3" ry="2" transform="rotate(-30 689 656)" fill="#f4f4f4"/>
<path d="M700 678C705.2 673 712 673.3 721 670C730 666.7 744.2 661.3 754 658C763.8 654.7 777.3 648.3 780 650C782.7 651.7 775 660.5 770 668C765 675.5 755.3 686.7 750 695C744.7 703.3 742.7 709.8 738 718C733.3 726.2 727 736.3 722 744C717 751.7 712.3 757.7 708 764C703.7 770.3 698.8 776 696 782C693.2 788 692 793.7 691 800C690 806.3 691.8 815 690 820C688.2 825 684.7 830.8 680 830C675.3 829.2 664 825 662 815C660 805 665.5 784 668 770C670.5 756 673.3 742.7 677 731C680.7 719.3 686.2 708.8 690 700C693.8 691.2 694.8 683 700 678Z" fill="#525252" filter="url(#b1)"/>
<path d="M721 668C727.8 665 749.9 653.5 761.7 650C773.5 646.5 783 646.7 792 647C801 647.3 808.8 650 816 652C823.2 654 827.3 655.2 835 659C842.7 662.8 854.5 671.2 862 675C869.5 678.8 873 679 880 682C887 685 896 688.8 904 693C912 697.2 920.5 701.3 928 707C935.5 712.7 942.8 720.5 949 727C955.2 733.5 960.3 740.3 965 746C969.7 751.7 973.5 755.8 977 761C980.5 766.2 984.2 771 986 777C987.8 783 987.7 793.7 988 797" fill="none" stroke="#8a8a8a" stroke-width="5"/>
<path d="M650 816C654.3 808.7 661.3 806.7 668 806C674.7 805.3 684.7 805.5 690 812C695.3 818.5 690 840.3 700 845C710 849.7 740 835.5 750 840C760 844.5 751.7 865.3 760 872C768.3 878.7 786.7 880 800 880C813.3 880 828 874.3 840 872C852 869.7 864 861.3 872 866C880 870.7 885 886 888 900C891 914 890.7 931.7 890 950C889.3 968.3 919.7 1000 884 1010C848.3 1020 714 1020 676 1010C638 1000 662 968.3 656 950C650 931.7 642.3 916.7 640 900C637.7 883.3 640.3 864 642 850C643.7 836 645.7 823.3 650 816Z" fill="#989898" filter="url(#b1)"/>
<path d="M700 880C703.3 881.7 712.5 887.5 720 890C727.5 892.5 736.7 892.5 745 895C753.3 897.5 765.2 897.5 770 905C774.8 912.5 774 928.3 774 940C774 951.7 774 967.5 770 975C766 982.5 756.7 985 750 985C743.3 985 734.7 980.8 730 975C725.3 969.2 723.3 954.2 722 950" fill="none" stroke="#6e6e6e" stroke-width="4" filter="url(#b1)"/>
<path d="M770 905C773.3 902.5 785 894.2 790 890C795 885.8 798.3 881.7 800 880" fill="none" stroke="#6e6e6e" stroke-width="4" filter="url(#b1)"/>
<path d="M774 940C776.7 943.3 785.7 951.7 790 960C794.3 968.3 798.3 985 800 990" fill="none" stroke="#6e6e6e" stroke-width="4" filter="url(#b1)"/>
<path d="M660 940C665 940.8 680 943.3 690 945C700 946.7 715 949.2 720 950" fill="none" stroke="#6e6e6e" stroke-width="4" filter="url(#b1)"/>
<path d="M820 885C822.5 887.5 831.3 892.5 835 900C838.7 907.5 841.5 920 842 930C842.5 940 837.3 950 838 960C838.7 970 844.7 985 846 990" fill="none" stroke="#6e6e6e" stroke-width="4" filter="url(#b1)"/>
<path d="M858 866C862 862.3 884.7 852.7 900 850C915.3 847.3 938.7 853.3 950 850C961.3 846.7 962.2 838.3 968 830C973.8 821.7 980.3 802.5 985 800C989.7 797.5 995.8 806.7 996 815C996.2 823.3 990 837.5 986 850C982 862.5 976.3 876.7 972 890C967.7 903.3 965.3 917 960 930C954.7 943 947.5 954.7 940 968C932.5 981.3 925 1003 915 1010C905 1017 884.5 1020 880 1010C875.5 1000 886.7 968.3 888 950C889.3 931.7 890 913 888 900C886 887 881 877.7 876 872C871 866.3 854 869.7 858 866Z" fill="#5f5f5f" filter="url(#b1)"/>
<path d="M1000 812C998.3 818.3 994.2 835.3 990 850C985.8 864.7 980.3 883.3 975 900C969.7 916.7 965.5 932 958 950C950.5 968 934.7 998.3 930 1008" fill="none" stroke="#8a8a8a" stroke-width="22" filter="url(#b2)"/>
<path d="M1006 800C1005 808.3 1002.7 833.3 1000 850C997.3 866.7 994.2 883.3 990 900C985.8 916.7 980.8 932 975 950C969.2 968 958.3 998.3 955 1008" fill="none" stroke="#696969" stroke-width="5" filter="url(#b1)"/>
<path d="M1004 600C1005.3 608.3 1009.7 633.3 1012 650C1014.3 666.7 1017.3 681.7 1018 700C1018.7 718.3 1017.3 743.3 1016 760C1014.7 776.7 1011 793.3 1010 800" fill="none" stroke="#848484" stroke-width="16" filter="url(#b2)"/>
<path d="M782 656.6C789.4 654.9 805.7 655.6 814 656.6C822.3 657.6 824.3 659 832 662.7C839.7 666.4 852.7 675.4 860 678.8C867.3 682.2 869.2 680.3 876 683C882.8 685.7 892.5 690.7 900.6 695C908.7 699.3 917.4 703.3 924.8 709C932.2 714.7 939 722.6 945 729C951 735.4 956.3 742.1 961 747.5C965.7 752.9 969.7 756.9 973 761.6C976.3 766.3 979.3 770.6 981 775.7C982.7 780.8 982.8 787 983 792C983.2 797 983.5 801.3 982 806C980.5 810.7 976.5 816.7 974 820C971.5 823.3 969.2 823.6 967 826C964.8 828.4 964 831 961 834.4C958 837.8 954.7 844.5 949 846.5C943.3 848.5 931.5 847.2 926.8 846.5C922.1 845.8 923.4 842.9 920.7 842.4C918 841.9 917.4 841.8 910.6 843.5C903.8 845.2 888.4 849.6 880 852.5C871.6 855.4 866.6 857.7 860 860.6C853.4 863.5 847.4 868 840.4 869.7C833.4 871.4 823.4 871.2 818 870.7C812.6 870.2 810 865.9 808 866.7C806 867.6 810.4 874.3 806 875.8C801.6 877.3 789.5 876.8 781.8 875.8C774.1 874.8 764.1 871.6 759.7 869.7C755.3 867.8 756.4 867.6 755.6 864.6C754.8 861.6 755.2 855.7 755 852C754.8 848.3 755.5 845 754.6 842.4C753.7 839.8 755.5 837.2 749.6 836.4C743.7 835.6 727.1 836.4 719 837.4C710.9 838.4 705 842.9 701 842.4C697 841.9 696.8 838.8 695 834.4C693.2 830 690.7 822.7 690 816C689.3 809.3 690.2 799.7 691 794C691.8 788.3 692.3 786.9 695 781.8C697.7 776.7 702.7 770.1 707 763.6C711.3 757.1 715.9 750.8 721 743C726.1 735.2 733 724.7 737.4 717C741.8 709.3 744.1 703.4 747.5 697C750.9 690.6 753.9 683.8 757.6 678.8C761.3 673.8 765.6 670.4 769.7 666.7C773.8 663 774.6 658.3 782 656.6Z" fill="#969696"/>
<ellipse cx="729" cy="856" rx="26" ry="19" fill="#858585" filter="url(#b1)"/>
<g filter="url(#mot)"><path d="M652 818C656 811 662 808.7 668 808C674 807.3 683 807.5 688 814C693 820.5 696 837.7 698 847C700 856.3 689.7 864.5 700 870C710.3 875.5 743.3 877.7 760 880C776.7 882.3 786.7 884.7 800 884C813.3 883.3 828.3 878.3 840 876C851.7 873.7 862.3 866 870 870C877.7 874 883 886.7 886 900C889 913.3 888.7 931.7 888 950C887.3 968.3 917 1000 882 1010C847 1020 715.3 1020 678 1010C640.7 1000 664 968.3 658 950C652 931.7 644.3 916.7 642 900C639.7 883.3 642.3 863.7 644 850C645.7 836.3 648 825 652 818Z" fill="#5c5c5c"/></g>
<ellipse cx="650" cy="869" rx="7" ry="7" fill="#000"/>
<ellipse cx="661" cy="883" rx="7" ry="4" transform="rotate(-40 661 883)" fill="#000"/>
<ellipse cx="656" cy="833" rx="3" ry="2" fill="#000"/>
<ellipse cx="692" cy="854" rx="3" ry="2" fill="#000"/>
<ellipse cx="717" cy="895" rx="6" ry="3.5" fill="#000"/>
<ellipse cx="751" cy="878" rx="7" ry="3" fill="#000"/>
<ellipse cx="700" cy="910" rx="2" ry="2" fill="#000"/>
<ellipse cx="744" cy="903" rx="3" ry="2" fill="#000"/>
<ellipse cx="686" cy="911" rx="2" ry="3" fill="#000"/>
<ellipse cx="707" cy="938" rx="2.5" ry="4" fill="#000"/>
<ellipse cx="745" cy="918" rx="2.5" ry="2" fill="#000"/>
<ellipse cx="764" cy="930" rx="2" ry="2" fill="#000"/>
<ellipse cx="780" cy="895" rx="2" ry="4" transform="rotate(-20 780 895)" fill="#000"/>
<ellipse cx="785" cy="930" rx="5" ry="3" transform="rotate(20 785 930)" fill="#000"/>
<ellipse cx="782" cy="956" rx="5" ry="3" fill="#000"/>
<ellipse cx="795" cy="966" rx="2" ry="2" fill="#000"/>
<ellipse cx="800" cy="912" rx="6" ry="5" fill="#000"/>
<ellipse cx="814" cy="901" rx="5" ry="3" fill="#000"/>
<ellipse cx="812" cy="921" rx="4" ry="3" fill="#000"/>
<ellipse cx="800" cy="944" rx="3" ry="2" fill="#000"/>
<ellipse cx="838" cy="900" rx="4" ry="3" fill="#000"/>
<ellipse cx="846" cy="918" rx="2.5" ry="4" fill="#000"/>
<ellipse cx="850" cy="945" rx="4" ry="2.5" fill="#000"/>
<ellipse cx="760" cy="987" rx="6" ry="9" fill="#000"/>
<ellipse cx="836" cy="993" rx="4" ry="2" fill="#000"/>
<ellipse cx="852" cy="974" rx="3" ry="3" fill="#000"/>
<ellipse cx="665" cy="939" rx="4" ry="2" transform="rotate(30 665 939)" fill="#000"/>
<ellipse cx="670" cy="917" rx="2" ry="2" fill="#000"/>
<ellipse cx="853" cy="893" rx="8" ry="4" fill="#000"/>
<ellipse cx="862" cy="926" rx="9" ry="5" transform="rotate(30 862 926)" fill="#000"/>
<ellipse cx="866" cy="951" rx="8" ry="5" fill="#000"/>
<ellipse cx="863" cy="974" rx="6" ry="8" fill="#000"/>
<ellipse cx="855" cy="960" rx="3" ry="2" fill="#000"/>
<ellipse cx="848" cy="935" rx="2" ry="2" fill="#000"/>
<ellipse cx="870" cy="907" rx="3" ry="2" fill="#000"/>
<ellipse cx="699" cy="974" rx="15" ry="15" fill="#f0f0f0" filter="url(#b1)"/>
<ellipse cx="706" cy="1001" rx="21" ry="12" fill="#ececec" filter="url(#b1)"/>
<ellipse cx="724" cy="985" rx="6" ry="5" fill="#d0d0d0" filter="url(#b1)"/>
<path d="M660 950C660.7 939 673.3 942 680 942C686.7 942 698.3 947 700 950C701.7 953 693 954.2 690 960C687 965.8 682 977 682 985C682 993 691 1004.2 690 1008C689 1011.8 681 1017.7 676 1008C671 998.3 659.3 961 660 950Z" fill="#666" filter="url(#b1)"/>
</g>
<ellipse cx="760" cy="605" rx="3" ry="1.5" transform="rotate(20 760 605)" fill="#9a9a9a"/>
<ellipse cx="803" cy="606" rx="2" ry="1.5" fill="#9a9a9a"/>
<ellipse cx="836" cy="604" rx="2" ry="2.5" fill="#9a9a9a"/>
<ellipse cx="801" cy="619" rx="3" ry="1.5" transform="rotate(-20 801 619)" fill="#9a9a9a"/>
<ellipse cx="783" cy="613" rx="1.5" ry="1.5" fill="#9a9a9a"/>
<ellipse cx="761" cy="635" rx="3" ry="2" transform="rotate(-30 761 635)" fill="#9a9a9a"/>
<ellipse cx="925" cy="602" rx="2" ry="1.5" fill="#9a9a9a"/>
<ellipse cx="896" cy="624" rx="2.5" ry="2.5" fill="#9a9a9a"/>
<ellipse cx="925" cy="634" rx="4" ry="2" transform="rotate(30 925 634)" fill="#9a9a9a"/>
<ellipse cx="917" cy="627" rx="1.5" ry="1.5" fill="#9a9a9a"/>
<ellipse cx="870" cy="653" rx="2" ry="2.5" fill="#9a9a9a"/>
<ellipse cx="890" cy="657" rx="4" ry="2.5" transform="rotate(40 890 657)" fill="#9a9a9a"/>
<ellipse cx="864" cy="666" rx="1" ry="1" fill="#9a9a9a"/>
<ellipse cx="930" cy="688" rx="2" ry="2" fill="#9a9a9a"/>
<ellipse cx="958" cy="661" rx="1.5" ry="1.5" fill="#9a9a9a"/>
<ellipse cx="961" cy="688" rx="3" ry="1" transform="rotate(20 961 688)" fill="#9a9a9a"/>
<ellipse cx="957" cy="720" rx="1.5" ry="2" fill="#9a9a9a"/>
<ellipse cx="980" cy="735" rx="1" ry="1.5" fill="#9a9a9a"/>
<ellipse cx="816" cy="614" rx="1" ry="1" fill="#9a9a9a"/>
<path d="M961 688l26 8" stroke="#444" stroke-width="1"/>
<ellipse cx="1009.6" cy="647" rx="7" ry="14" transform="rotate(8 1009.6 647)" fill="#8a8a8a" stroke="#fff" stroke-width="4"/>
<ellipse cx="1016.6" cy="724" rx="6.5" ry="14" transform="rotate(8 1016.6 724)" fill="#8a8a8a" stroke="#fff" stroke-width="4"/>
<ellipse cx="1000" cy="601" rx="7" ry="5" fill="#ccc"/>
<path d="M1001 809 L982 844" stroke="#fff" stroke-width="5" stroke-linecap="round"/>
<path d="M1001 810 L983 843" stroke="#bbb" stroke-width="1"/>
<path d="M989 794 Q992 804 1000 808 L1002 794Z" fill="#000"/>
</g>
<path d="M1057.500 606V800 L1068 1004" stroke="#3a3a3a" stroke-width="1" fill="none"/>
<rect x="1106" y="597" width="3" height="407" fill="#a8a8a8"/>
<path d="M782 656.6C789.4 654.9 805.7 655.6 814 656.6C822.3 657.6 824.3 659 832 662.7C839.7 666.4 852.7 675.4 860 678.8C867.3 682.2 869.2 680.3 876 683C882.8 685.7 892.5 690.7 900.6 695C908.7 699.3 917.4 703.3 924.8 709C932.2 714.7 939 722.6 945 729C951 735.4 956.3 742.1 961 747.5C965.7 752.9 969.7 756.9 973 761.6C976.3 766.3 979.3 770.6 981 775.7C982.7 780.8 982.8 787 983 792C983.2 797 983.5 801.3 982 806C980.5 810.7 976.5 816.7 974 820C971.5 823.3 969.2 823.6 967 826C964.8 828.4 964 831 961 834.4C958 837.8 954.7 844.5 949 846.5C943.3 848.5 931.5 847.2 926.8 846.5C922.1 845.8 923.4 842.9 920.7 842.4C918 841.9 917.4 841.8 910.6 843.5C903.8 845.2 888.4 849.6 880 852.5C871.6 855.4 866.6 857.7 860 860.6C853.4 863.5 847.4 868 840.4 869.7C833.4 871.4 823.4 871.2 818 870.7C812.6 870.2 810 865.9 808 866.7C806 867.6 810.4 874.3 806 875.8C801.6 877.3 789.5 876.8 781.8 875.8C774.1 874.8 764.1 871.6 759.7 869.7C755.3 867.8 756.4 867.6 755.6 864.6C754.8 861.6 755.2 855.7 755 852C754.8 848.3 755.5 845 754.6 842.4C753.7 839.8 755.5 837.2 749.6 836.4C743.7 835.6 727.1 836.4 719 837.4C710.9 838.4 705 842.9 701 842.4C697 841.9 696.8 838.8 695 834.4C693.2 830 690.7 822.7 690 816C689.3 809.3 690.2 799.7 691 794C691.8 788.3 692.3 786.9 695 781.8C697.7 776.7 702.7 770.1 707 763.6C711.3 757.1 715.9 750.8 721 743C726.1 735.2 733 724.7 737.4 717C741.8 709.3 744.1 703.4 747.5 697C750.9 690.6 753.9 683.8 757.6 678.8C761.3 673.8 765.6 670.4 769.7 666.7C773.8 663 774.6 658.3 782 656.6Z" fill="#3282d2" fill-opacity=".25"/>
<path d="M781 655.6H783.2H785.4H787.6H789.8H792H794.2H796.4H798.6H800.8H803H805.2H807.4H809.6H811.8H814H816.2V657.8H818.4H820.6H822.8H825V660H827.2H829.4V662.2H831.6H833.8V664.4H836H838.2V666.6H840.4V668.8H842.6H844.8V671H847H849.2V673.2H851.4V675.4H853.6H855.8V677.6H858H860.2V679.8H862.4H864.6H866.8V682H869H871.2H873.4H875.6V684.2H877.8H880H882.2V686.4H884.4H886.6V688.6H888.8H891V690.8H893.2H895.4V693H897.6H899.8V695.2H902H904.2V697.4H906.4V699.6H908.6H910.8V701.8H913H915.2V704H917.4H919.6V706.2H921.8V708.4H924H926.2V710.6H928.4V712.8H930.6V715H932.8V717.2H935V719.4H937.2V721.6H939.4V723.8H941.6V726H943.8V728.2H946V730.4H948.2V732.6H950.4V734.8V737H952.6V739.2H954.8V741.4H957V743.6H959.2V745.8H961.4V748V750.2H963.6V752.4H965.8V754.6H968V756.8H970.2V759H972.4V761.2H974.6V763.4V765.6H976.8V767.8V770H979V772.2H981.2V774.4V776.6V778.8V781H983.4V783.2V785.4V787.6V789.8V792V794.2V796.4V798.6V800.8V803V805.2H981.2V807.4V809.6H979V811.8V814H976.8V816.2V818.4H974.6V820.6H972.4V822.8H970.2V825H968H965.8V827.2V829.4H963.6V831.6H961.4V833.8V836H959.2V838.2H957V840.4H954.8V842.6H952.6V844.8H950.4V847H948.2H946H943.8H941.6H939.4H937.2H935H932.8H930.6H928.4H926.2H924V844.8H921.8V842.6H919.6H917.4H915.2H913H910.8H908.6V844.8H906.4H904.2H902V847H899.8H897.6H895.4H893.2V849.2H891H888.8H886.6V851.4H884.4H882.2H880V853.6H877.8H875.6H873.4V855.8H871.2H869V858H866.8H864.6H862.4V860.2H860.2H858V862.4H855.8H853.6V864.6H851.4H849.2V866.8H847H844.8V869H842.6H840.4H838.2V871.2H836H833.8H831.6H829.4H827.2H825H822.8H820.6H818.4H816.2V869H814H811.8V866.8H809.6H807.4V869V871.2V873.4V875.6H805.2H803H800.8H798.6V877.8H796.4H794.2H792V875.6H789.8H787.6H785.4H783.2H781H778.8H776.6H774.4V873.4H772.2H770H767.8H765.6V871.2H763.4H761.2V869H759H756.8V866.8V864.6H754.6V862.4V860.2V858V855.8V853.6V851.4V849.2V847V844.8V842.6V840.4V838.2H752.4V836H750.2H748H745.8H743.6H741.4H739.2H737H734.8H732.6H730.4H728.2H726H723.8H721.6V838.2H719.4H717.2H715H712.8H710.6V840.4H708.4H706.2V842.6H704H701.8H699.6H697.4V840.4V838.2H695.2V836V833.8V831.6H693V829.4V827.2V825H690.8V822.8V820.6V818.4V816.2V814V811.8V809.6V807.4V805.2V803V800.8V798.6V796.4V794.2V792V789.8H693V787.6V785.4V783.2H695.2V781V778.8H697.4V776.6H699.6V774.4V772.2H701.8V770H704V767.8H706.2V765.6V763.4H708.4V761.2V759H710.6V756.8H712.8V754.6H715V752.4V750.2H717.2V748H719.4V745.8V743.6H721.6V741.4H723.8V739.2V737H726V734.8H728.2V732.6V730.4H730.4V728.2V726H732.6V723.8H734.8V721.6V719.4H737V717.2V715H739.2V712.8H741.4V710.6V708.4H743.6V706.2V704H745.8V701.8V699.6V697.4H748V695.2H750.2V693V690.8H752.4V688.6V686.4H754.6V684.2V682H756.8V679.8H759V677.6V675.4H761.2V673.2H763.4V671H765.6V668.8H767.8V666.6H770H772.2V664.4V662.2H774.4V660H776.6V657.8H778.8H781V655.6Z" fill="none" stroke="#2f80d6" stroke-width="1.100"/>
<path d="M934 786.5C937.5 784.9 944.2 784.7 950 784.5C955.8 784.3 964.8 784.6 969 785.5C973.2 786.4 972.8 788.1 975 790C977.2 791.9 981.5 795 982 797C982.5 799 979.3 800.5 978 802C976.7 803.5 975 804 974 806C973 808 972.5 811.7 972 814C971.5 816.3 972.5 817.8 971 820C969.5 822.2 965.7 825.6 963 827C960.3 828.4 956.5 827.6 955 828.5C953.5 829.4 955.7 831.8 954 832.4C952.3 833 947.5 833.1 945 832.4C942.5 831.7 940.8 829.7 939 828C937.2 826.3 935.7 823.8 934 822C932.3 820.2 929.9 819.8 929 817C928.1 814.2 928.8 808.8 928.8 805C928.8 801.2 928.1 797.1 929 794C929.9 790.9 930.5 788.1 934 786.5Z" fill="#b89a8c" fill-opacity=".85"/>
<path d="M935 785.4H937.2H939.4H941.6H943.8H946H948.2H950.4H952.6H954.8H957H959.2H961.4H963.6H965.8H968H970.2H972.4V787.6H974.6V789.8H976.8V792H979V794.2H981.2V796.4V798.6V800.8H979V803H976.8H974.6V805.2V807.4H972.4V809.6V811.8V814V816.2V818.4H970.2V820.6V822.8H968V825H965.8H963.6V827.2H961.4H959.2H957H954.8V829.4V831.6H952.6V833.8H950.4H948.2H946V831.6H943.8H941.6V829.4H939.4V827.2H937.2V825H935V822.8H932.8V820.6H930.6V818.4H928.4V816.2V814V811.8V809.6V807.4V805.2V803V800.8V798.6V796.4V794.2V792H930.6V789.8V787.6H932.8H935V785.4Z" fill="none" stroke="#ffd2b4" stroke-width="1.200"/>
<text x="543.500" y="980" font-family="Liberation Serif,serif" font-size="14" fill="#fff">B: liver_102</text>
</svg></div>
<div class="a" style="left:691px;top:463px;width:690px;height:15px;background:#6ab544"><svg style="left:3px;top:3px" width="12" height="9" viewBox="0 0 12 9"><path d="M0 4.500h5M5 2.500v4l2-1h3v-2h-3z" fill="#1a4a10" stroke="#1a4a10" stroke-width=".8" opacity=".6"/></svg><div class="a" style="left:17px;top:0;width:12px;height:15px;background:#92e066"></div><div class="t" style="left:16px;top:1px;width:13px;text-align:center;font-size:11.500px">G</div><svg style="left:32px;top:1px" width="14" height="13" viewBox="0 0 14 13"><rect x="2.500" y="2" width="9" height="9" fill="#1a4a10" opacity=".55"/><rect x="3" y="2.500" width="4" height="4" fill="#fff" opacity=".25"/><rect x="7" y="6.500" width="4" height="4" fill="#000" opacity=".25"/><path d="M7 0v13M0 6.500h14" stroke="#222" stroke-width=".7" stroke-dasharray="2 9 2"/></svg><div class="a" style="left:55px;top:5px;width:530px;height:5px;background:#f4f4f4;border:1px solid #444;border-radius:2px"></div><div class="a" style="left:55px;top:5px;width:253px;height:5px;background:#3aa0e8;border:1px solid #3a4a5a;border-radius:2px"></div><div class="a" style="left:304px;top:2px;width:9px;height:11px;background:#fff;border:1px solid #444;border-radius:2px"></div><div class="a" style="left:590px;top:0;width:100px;height:15px;background:#8fdc62"></div><div class="t" style="left:591.5px;top:1.500px;font-size:10.500px">A: -138.929mm</div></div>
<div class="a" style="left:691px;top:478px;width:690px;height:446px;background:#000;overflow:hidden"><svg id="cor" style="left:0;top:0" width="690" height="446" viewBox="1230 558 690 446">
<defs><clipPath id="cbody"><rect x="1333" y="597" width="435" height="407"/></clipPath><clipPath id="cbody2"><path d="M1333 596C1282.2 601.7 1332.5 636.4 1333 645C1333.5 653.6 1336.1 663.6 1337 670C1337.9 676.4 1340.2 692.9 1341 700C1341.8 707.1 1343.9 723.4 1344 731C1344.1 738.6 1342.9 757.6 1342 765C1341.1 772.4 1336.8 787.6 1336 794C1335.2 800.4 1334.9 814.1 1335 820C1335.1 825.9 1336 837.4 1337 844.5C1338 851.6 1342 872.6 1344 880.8C1346 889 1351.6 908.2 1354 915C1356.4 921.8 1362.6 934.3 1364.4 939C1366.2 943.7 1369.2 951.2 1369.5 955.5C1369.8 959.8 1368.3 971 1367.4 975.7C1366.5 980.4 1362.9 991.8 1362 996C1361.1 1000.2 1355.6 1009.7 1360 1012C1364.4 1014.3 1360.3 1015.5 1400 1016C1439.7 1016.5 1657.1 1016.5 1700 1016C1742.9 1015.5 1760.1 1014.3 1768 1012C1775.9 1009.7 1769.2 1000.7 1768 996C1766.8 991.3 1759.6 976.8 1758 971.6C1756.4 966.4 1753.5 956.9 1754 951.5C1754.5 946.1 1760.4 931.6 1762 925C1763.6 918.4 1767.3 909.6 1768 895C1768.7 880.4 1768.1 814.4 1768 800C1767.9 785.6 1767.6 779.8 1767 771.7C1766.4 763.7 1763.6 740.4 1763 731C1762.4 721.6 1761.8 700.4 1762 691C1762.2 681.6 1764.3 656.6 1765 650.6C1765.7 644.6 1767.7 646.4 1768 640C1768.3 633.6 1818.8 601.1 1768 596C1717.2 590.9 1383.8 590.3 1333 596Z"/></clipPath></defs>
<g filter="url(#ct)"><g clip-path="url(#cbody)"><g clip-path="url(#cbody2)">
<path d="M1333 596C1282.2 601.7 1332.5 636.4 1333 645C1333.5 653.6 1336.1 663.6 1337 670C1337.9 676.4 1340.2 692.9 1341 700C1341.8 707.1 1343.9 723.4 1344 731C1344.1 738.6 1342.9 757.6 1342 765C1341.1 772.4 1336.8 787.6 1336 794C1335.2 800.4 1334.9 814.1 1335 820C1335.1 825.9 1336 837.4 1337 844.5C1338 851.6 1342 872.6 1344 880.8C1346 889 1351.6 908.2 1354 915C1356.4 921.8 1362.6 934.3 1364.4 939C1366.2 943.7 1369.2 951.2 1369.5 955.5C1369.8 959.8 1368.3 971 1367.4 975.7C1366.5 980.4 1362.9 991.8 1362 996C1361.1 1000.2 1355.6 1009.7 1360 1012C1364.4 1014.3 1360.3 1015.5 1400 1016C1439.7 1016.5 1657.1 1016.5 1700 1016C1742.9 1015.5 1760.1 1014.3 1768 1012C1775.9 1009.7 1769.2 1000.7 1768 996C1766.8 991.3 1759.6 976.8 1758 971.6C1756.4 966.4 1753.5 956.9 1754 951.5C1754.5 946.1 1760.4 931.6 1762 925C1763.6 918.4 1767.3 909.6 1768 895C1768.7 880.4 1768.1 814.4 1768 800C1767.9 785.6 1767.6 779.8 1767 771.7C1766.4 763.7 1763.6 740.4 1763 731C1762.4 721.6 1761.8 700.4 1762 691C1762.2 681.6 1764.3 656.6 1765 650.6C1765.7 644.6 1767.7 646.4 1768 640C1768.3 633.6 1818.8 601.1 1768 596C1717.2 590.9 1383.8 590.3 1333 596Z" fill="#707070"/>
<path d="M1372 597C1325.3 603 1367.2 629.6 1366 642C1364.8 654.4 1362.9 678.3 1363 690C1363.1 701.7 1366.1 715.3 1367 730C1367.9 744.7 1369.3 784 1370 800C1370.7 816 1370.4 838 1372 850C1373.6 862 1378.3 881.3 1382 890C1385.7 898.7 1394.3 909.7 1400 915C1405.7 920.3 1419 924 1425 930C1431 936 1440.3 949.9 1445 960C1449.7 970.1 1431.3 999.9 1460 1006C1488.7 1012.1 1629.3 1013.5 1660 1006C1690.7 998.5 1684 962.1 1690 950C1696 937.9 1700.3 924.3 1705 915C1709.7 905.7 1720.6 890 1725 880C1729.4 870 1735.5 851.5 1738 840C1740.5 828.5 1743.7 808.7 1744 794C1744.3 779.3 1740.9 744.3 1740 730C1739.1 715.7 1739.1 700.3 1737 687C1734.9 673.7 1726.8 642 1724 630C1721.2 618 1762.9 601.4 1716 597C1669.1 592.6 1418.7 591 1372 597Z" fill="#616161" filter="url(#b1)"/>
<path d="M1352 597C1351.7 605.8 1350 632.8 1350 650C1350 667.2 1351 681.7 1352 700C1353 718.3 1355.7 740 1356 760C1356.3 780 1353.7 801.7 1354 820C1354.3 838.3 1355 855 1358 870C1361 885 1365.8 899.2 1372 910C1378.2 920.8 1388.3 929.2 1395 935C1401.7 940.8 1409.2 943.3 1412 945" fill="none" stroke="#858585" stroke-width="10" filter="url(#b2)"/>
<path d="M1740 597C1741.3 605.8 1746.2 632.8 1748 650C1749.8 667.2 1750.3 681.7 1751 700C1751.7 718.3 1752.2 741.7 1752 760C1751.8 778.3 1751.7 793.3 1750 810C1748.3 826.7 1746.2 845.8 1742 860C1737.8 874.2 1731 885.3 1725 895C1719 904.7 1709.2 914.2 1706 918" fill="none" stroke="#8a8a8a" stroke-width="12" filter="url(#b2)"/>
<path d="M1362 1006C1346.7 998.3 1367.3 973.5 1370 960C1372.7 946.5 1373 931.7 1378 925C1383 918.3 1393 918.8 1400 920C1407 921.2 1413.3 927 1420 932C1426.7 937 1434.7 942.8 1440 950C1445.3 957.2 1448.3 965.7 1452 975C1455.7 984.3 1477 1000.8 1462 1006C1447 1011.2 1377.3 1013.7 1362 1006Z" fill="#8a8a8a" filter="url(#b1)"/>
<path d="M1668 1006C1656.3 997.5 1683.3 968.5 1690 955C1696.7 941.5 1702.2 929.2 1708 925C1713.8 920.8 1719.7 924.2 1725 930C1730.3 935.8 1735.5 950.8 1740 960C1744.5 969.2 1748.7 977.3 1752 985C1755.3 992.7 1774 1002.5 1760 1006C1746 1009.5 1679.7 1014.5 1668 1006Z" fill="#858585" filter="url(#b1)"/>
<path d="M1505 590C1487.8 593.3 1502.3 609.7 1503 615C1503.7 620.3 1508.8 626.3 1510 630C1511.2 633.7 1512.9 639.9 1512 643C1511.1 646.1 1501.9 649.7 1503 653C1504.1 656.3 1515.1 663.1 1520 668C1524.9 672.9 1532 685.7 1540 690C1548 694.3 1574.7 704.7 1580 700C1585.3 695.3 1577.7 661.6 1580 655C1582.3 648.4 1592.1 652.3 1597 650.6C1601.9 648.9 1612.7 645.8 1617 642.5C1621.3 639.2 1626.9 630.6 1629 626C1631.1 621.4 1632.6 612.8 1633 608C1633.4 603.2 1649.1 592.4 1632 590C1614.9 587.6 1522.2 586.7 1505 590Z" fill="#9c9c9c" filter="url(#b1)"/>
<path d="M1515 660C1516.3 657.3 1531.3 666 1540 670C1548.7 674 1572 687.3 1580 690C1588 692.7 1594 691.3 1600 690C1606 688.7 1621 677.3 1625 680C1629 682.7 1628 702 1630 710C1632 718 1639.7 729.3 1640 740C1640.3 750.7 1634.7 778 1632 790C1629.3 802 1624.3 820.7 1620 830C1615.7 839.3 1604 850.7 1600 860C1596 869.3 1592 886.7 1590 900C1588 913.3 1585 945.9 1585 960C1585 974.1 1597.3 999.9 1590 1006C1582.7 1012.1 1538.3 1013.5 1530 1006C1521.7 998.5 1528 964.1 1528 950C1528 935.9 1530 913.3 1530 900C1530 886.7 1528.7 863.3 1528 850C1527.3 836.7 1526.1 812 1525 800C1523.9 788 1520.1 770.7 1520 760C1519.9 749.3 1522.7 729.3 1524 720C1525.3 710.7 1531.2 698 1530 690C1528.8 682 1513.7 662.7 1515 660Z" fill="#8d8d8d" filter="url(#b2)"/>
<path d="M1545 700C1545.5 710 1546.8 740 1548 760C1549.2 780 1550.7 800 1552 820C1553.3 840 1554.7 860 1556 880C1557.3 900 1556.8 919.3 1560 940C1563.2 960.7 1572.5 993.3 1575 1004" fill="none" stroke="#9c9c9c" stroke-width="26" filter="url(#b2)"/>
<path d="M1535 685C1535.8 690.8 1538.8 705.5 1540 720C1541.2 734.5 1541.7 763.3 1542 772" fill="none" stroke="#9a9a9a" stroke-width="20" filter="url(#b2)"/>
<path d="M1562 720 Q1560 800 1566 880" fill="none" stroke="#6a6a6a" stroke-width="3" filter="url(#b1)"/>
<path d="M1592 700 Q1586 780 1588 860" fill="none" stroke="#6e6e6e" stroke-width="5" filter="url(#b2)"/>
<path d="M1612 895C1615.3 885 1624.5 888.3 1630 890C1635.5 891.7 1641.3 895 1645 905C1648.7 915 1650.3 933.2 1652 950C1653.7 966.8 1661.7 996.7 1655 1006C1648.3 1015.3 1619.5 1015.3 1612 1006C1604.5 996.7 1610 968.5 1610 950C1610 931.5 1608.7 905 1612 895Z" fill="#8c8c8c" filter="url(#b2)"/>
<ellipse cx="1549" cy="669" rx="6" ry="17" transform="rotate(-5 1549 669)" fill="#000"/>
<ellipse cx="1566" cy="658" rx="5" ry="7" fill="#000"/>
<path d="M1372.5 590C1352 594.5 1368.1 614.3 1368.4 620C1368.7 625.7 1374.8 624.6 1374.5 628C1374.2 631.4 1368.1 636.1 1366.4 642.5C1364.7 648.9 1364 663.4 1363.4 670.7C1362.8 678 1362.2 685.9 1362.4 691C1362.6 696.1 1362.4 705.8 1364.4 705C1366.4 704.2 1372.3 691.4 1376 686C1379.7 680.6 1384.7 673.6 1389 669C1393.3 664.4 1399.8 658.5 1405 655C1410.2 651.5 1417.1 647.8 1424 645.5C1430.9 643.2 1443.2 639.6 1451 639.5C1458.8 639.4 1469.5 642.2 1476 644.5C1482.5 646.8 1489.5 653.6 1494 654.5C1498.5 655.4 1503 652.4 1505.7 650.6C1508.4 648.8 1511 645.6 1511.8 642.5C1512.6 639.4 1512.2 633.4 1510.8 630C1509.4 626.6 1503.5 622.4 1502.7 620C1501.9 617.6 1505.9 616.7 1505.7 614C1505.5 611.3 1501.8 605.6 1501.7 602C1501.6 598.4 1524.4 591.8 1505 590C1485.6 588.2 1393 585.5 1372.5 590Z" fill="#000"/>
<path d="M1632 590C1619.4 593 1632.5 604.6 1632 610C1631.5 615.4 1631.2 621.1 1629 626C1626.8 630.9 1621.8 638.8 1617 642.5C1612.2 646.2 1602.2 648.8 1596.7 650.6C1591.2 652.4 1583.3 652 1580.6 654.6C1577.9 657.2 1578.5 661.3 1578.5 668C1578.5 674.7 1577.3 695.9 1580.6 699C1583.9 702.1 1594 692 1600.7 689C1607.4 686 1618.4 681.8 1625 678.8C1631.6 675.8 1639 670.7 1645 668.7C1651 666.7 1659.2 665.7 1665.3 665.7C1671.4 665.7 1679.4 667 1685.5 668.7C1691.6 670.4 1700.2 673.8 1705.7 676.8C1711.2 679.8 1718 685.1 1721.9 689C1725.8 692.9 1729.9 699.7 1732 703C1734.1 706.3 1735.2 713.4 1736 711C1736.8 708.6 1737.6 694.6 1737 687C1736.4 679.4 1734 669.1 1732 660.6C1730 652.1 1726.4 640.6 1724 630C1721.6 619.4 1729.6 596 1715.8 590C1702 584 1644.6 587 1632 590Z" fill="#000"/>
<path d="M1451 641.5C1459.4 641.3 1468.3 644 1475.4 646.5C1482.5 649 1487.5 652.6 1493.6 656.6C1499.7 660.6 1506.7 667 1511.8 670.7C1516.9 674.4 1521 676.8 1524 678.8C1527 680.8 1529 680.2 1530 682.9C1531 685.6 1530.7 691 1530 695C1529.3 699 1527.7 702 1526 707C1524.3 712 1522.5 719.3 1519.8 725C1517.1 730.7 1513.4 736.6 1509.7 741.4C1506 746.1 1502 750 1497.6 753.5C1493.2 757 1489.5 759.7 1483.5 762.6C1477.5 765.5 1469 768 1461.3 770.7C1453.5 773.4 1444 775.7 1437 778.7C1430 781.7 1423.5 785.6 1419 788.8C1414.5 792 1413 794.8 1410 798C1407 801.2 1403.9 804 1400.7 808C1397.5 812 1393.6 817.8 1390.6 822C1387.6 826.2 1385.1 831.2 1382.6 833C1380.1 834.8 1376.7 838.5 1375.5 833C1374.3 827.5 1375.5 810.9 1375.5 800C1375.5 789.1 1375.7 778.4 1375.5 767.6C1375.3 756.8 1375.2 741.1 1374.5 735C1373.8 728.9 1372.3 734.3 1371.5 731C1370.7 727.7 1369.5 720 1369.5 715C1369.5 710 1370 705.7 1371.5 701C1373 696.3 1375.3 692 1378.5 687C1381.7 682 1385.9 675.8 1390.6 670.7C1395.3 665.6 1401.1 660.5 1406.8 656.6C1412.5 652.7 1417.6 650 1425 647.5C1432.4 645 1442.6 641.7 1451 641.5Z" fill="#979797"/>
<path d="M1400 812C1404.5 806.5 1408.3 800 1415 795C1421.7 790 1432.2 785.2 1440 782C1447.8 778.8 1455.3 774.7 1462 776C1468.7 777.3 1476.7 782.7 1480 790C1483.3 797.3 1483.7 810 1482 820C1480.3 830 1474.5 841.3 1470 850C1465.5 858.7 1461.7 865 1455 872C1448.3 879 1438.3 888 1430 892C1421.7 896 1411.7 898 1405 896C1398.3 894 1393.5 887.7 1390 880C1386.5 872.3 1384.3 858.7 1384 850C1383.7 841.3 1385.3 834.3 1388 828C1390.7 821.7 1395.5 817.5 1400 812Z" fill="#8e8e8e" filter="url(#b1)"/>
<g filter="url(#mot)"><path d="M1400 812C1404.5 806.5 1408.3 800 1415 795C1421.7 790 1432.2 785.2 1440 782C1447.8 778.8 1455.3 774.7 1462 776C1468.7 777.3 1476.7 782.7 1480 790C1483.3 797.3 1483.7 810 1482 820C1480.3 830 1474.5 841.3 1470 850C1465.5 858.7 1461.7 865 1455 872C1448.3 879 1438.3 888 1430 892C1421.7 896 1411.7 898 1405 896C1398.3 894 1393.5 887.7 1390 880C1386.5 872.3 1384.3 858.7 1384 850C1383.7 841.3 1385.3 834.3 1388 828C1390.7 821.7 1395.5 817.5 1400 812Z" fill="#444"/></g>
<ellipse cx="1414" cy="812" rx="9" ry="2.5" transform="rotate(-15 1414 812)" fill="#000"/>
<ellipse cx="1442" cy="832" rx="4" ry="5" fill="#000"/>
<ellipse cx="1452" cy="836" rx="5" ry="4" fill="#000"/>
<ellipse cx="1392" cy="843" rx="2.5" ry="3.5" fill="#000"/>
<ellipse cx="1396" cy="856" rx="2.5" ry="2" fill="#000"/>
<ellipse cx="1418" cy="870" rx="4" ry="2" transform="rotate(-10 1418 870)" fill="#000"/>
<ellipse cx="1393" cy="872" rx="4" ry="5" fill="#000"/>
<ellipse cx="1404" cy="884" rx="5" ry="4" fill="#000"/>
<ellipse cx="1412" cy="884" rx="3" ry="3" fill="#000"/>
<ellipse cx="1398" cy="878" rx="3" ry="2" fill="#000"/>
<ellipse cx="1440" cy="853" rx="3" ry="2" transform="rotate(30 1440 853)" fill="#000"/>
<ellipse cx="1428" cy="800" rx="2" ry="4" transform="rotate(30 1428 800)" fill="#000"/>
<ellipse cx="1460" cy="800" rx="3" ry="2" fill="#000"/>
<ellipse cx="1408" cy="830" rx="2" ry="1.5" fill="#000"/>
<ellipse cx="1420" cy="858" rx="8" ry="1" transform="rotate(10 1420 858)" fill="#000"/>
<ellipse cx="1491.6" cy="828" rx="12" ry="14" fill="#a6a6a6" filter="url(#b2)"/>
<path d="M1478 880 Q1495 884 1510 880 Q1518 876 1518 876" fill="none" stroke="#aaa" stroke-width="3" stroke-linecap="round" filter="url(#b1)"/>
<path d="M1446 893 Q1460 890 1470 894" fill="none" stroke="#a0a0a0" stroke-width="2.500" filter="url(#b1)"/>
<path d="M1631 790C1628.5 799.8 1628.3 814.6 1630 824C1631.7 833.4 1635.8 840.1 1641 846.5C1646.2 852.9 1655.6 859.6 1661 862.6C1666.4 865.6 1669.3 867.3 1673.4 864.6C1677.5 861.9 1681.8 853.9 1685.5 846.5C1689.2 839.1 1693.1 828.8 1695.6 820C1698.1 811.2 1700.3 801.5 1700.7 794C1701.1 786.5 1700.5 780.3 1698 775C1695.5 769.7 1691.5 765 1686 762C1680.5 759 1671.8 756.5 1665 757C1658.2 757.5 1650.7 759.5 1645 765C1639.3 770.5 1633.5 780.2 1631 790Z" fill="#a6a6a6" filter="url(#b1)"/>
<path d="M1645 800C1644.7 793.8 1647.2 786.7 1650 785C1652.8 783.3 1658.3 787.5 1662 790C1665.7 792.5 1670.2 794.2 1672 800C1673.8 805.8 1674.3 818.7 1673 825C1671.7 831.3 1667.5 838.5 1664 838C1660.5 837.5 1655.2 828.3 1652 822C1648.8 815.7 1645.3 806.2 1645 800Z" fill="#777" filter="url(#b2)"/>
<ellipse cx="1636" cy="795" rx="4" ry="3" transform="rotate(30 1636 795)" fill="#b4b4b4" filter="url(#b1)"/>
<ellipse cx="1643" cy="782" rx="4" ry="3" transform="rotate(30 1643 782)" fill="#b4b4b4" filter="url(#b1)"/>
<ellipse cx="1655" cy="776" rx="4" ry="3" transform="rotate(30 1655 776)" fill="#b4b4b4" filter="url(#b1)"/>
<ellipse cx="1634" cy="808" rx="4" ry="3" transform="rotate(30 1634 808)" fill="#b4b4b4" filter="url(#b1)"/>
<path d="M1625 680C1622.5 678.3 1638.3 672.2 1645 670C1651.7 667.8 1658.5 667 1665.3 667C1672 667 1678.8 668.2 1685.5 670C1692.2 671.8 1699.6 674.6 1705.7 678C1711.8 681.4 1717.5 686 1721.9 690.5C1726.3 695 1729.3 698.4 1732 705C1734.7 711.6 1737 719.2 1738 730C1739 740.8 1740.2 762.5 1738 770C1735.8 777.5 1731.3 786.7 1725 775C1718.7 763.3 1710.8 715.8 1700 700C1689.2 684.2 1672.5 683.3 1660 680C1647.5 676.7 1627.5 681.7 1625 680Z" fill="#686868" filter="url(#b1)"/>
<path d="M1641 672.4C1643.8 671.4 1648.3 671.2 1651 672.8C1653.7 674.4 1653.9 679.4 1657 681.8C1660.1 684.2 1665.3 685.6 1669.4 687C1673.5 688.4 1677.5 688.7 1681.5 690C1685.5 691.3 1689.6 693.2 1693.6 695C1697.6 696.8 1702 698.3 1705.7 701C1709.4 703.7 1713.1 707.7 1715.8 711C1718.5 714.3 1720.2 716.6 1721.9 721C1723.6 725.4 1724.9 732.3 1725.9 737.4C1726.9 742.5 1727.7 747.8 1727.9 751.5C1728.1 755.2 1727.6 757.8 1726.9 759.6C1726.2 761.5 1725.9 762.1 1723.9 762.6C1721.9 763.1 1717.5 763.8 1714.8 762.6C1712.1 761.4 1709.7 758.4 1707.7 755.5C1705.7 752.6 1704 748.8 1702.7 745.4C1701.4 742 1701.9 737.5 1699.7 735.3C1697.5 733.1 1693 734 1689.6 732.3C1686.2 730.6 1682.9 727.2 1679.5 725C1676.1 722.8 1673.2 720.7 1669.4 719C1665.7 717.3 1661.1 716.3 1657 715C1652.9 713.7 1649 712 1645 711C1641 710 1635.8 710 1633 709C1630.2 708 1629 707.3 1628 705C1627 702.7 1626.8 698 1627 695C1627.2 692 1627.8 689.7 1629 687C1630.2 684.3 1632 681.2 1634 678.8C1636 676.4 1638.2 673.4 1641 672.4Z" fill="#959595"/>
<path d="M1650 728h16" stroke="#a8a8a8" stroke-width="5" stroke-linecap="round" filter="url(#b1)"/>
<ellipse cx="1693" cy="742" rx="4" ry="5" fill="#a0a0a0" filter="url(#b1)"/>
<ellipse cx="1654" cy="890" rx="10" ry="8" fill="#8a8a8a" filter="url(#b1)"/>
<ellipse cx="1656" cy="888" rx="3" ry="2" fill="#000"/>
<ellipse cx="1612" cy="956" rx="2" ry="1.5" fill="#000"/>
<ellipse cx="1607" cy="971" rx="2" ry="1.5" fill="#000"/>
<ellipse cx="1602" cy="978" rx="2" ry="1.5" fill="#000"/>
<ellipse cx="1614" cy="983" rx="2" ry="1.5" fill="#000"/>
<ellipse cx="1641" cy="904" rx="2" ry="1.5" fill="#000"/>
<ellipse cx="1651" cy="897" rx="2" ry="1.5" fill="#000"/>
<path d="M1590 960C1591.5 950 1601.3 940 1605 940C1608.7 940 1611.5 951.7 1612 960C1612.5 968.3 1610.7 983.3 1608 990C1605.3 996.7 1599 1005 1596 1000C1593 995 1588.5 970 1590 960Z" fill="#999" filter="url(#b2)"/>
<ellipse cx="1564" cy="988" rx="12" ry="13" fill="#d8d8d8" filter="url(#b1)"/>
<ellipse cx="1531" cy="921" rx="5" ry="7" fill="#c4c4c4" filter="url(#b1)"/>
<path d="M1564.500 876v10" stroke="#fff" stroke-width="2"/>
<path d="M1564.500 930v4M1581 842v3" stroke="#eee" stroke-width="2"/>
<ellipse cx="1595" cy="887" rx="3" ry="2" fill="#bbb"/>
<ellipse cx="1371" cy="607" rx="4" ry="9" transform="rotate(12 1371 607)" fill="#777" stroke="#f4f4f4" stroke-width="2.600"/>
<ellipse cx="1360.5" cy="648" rx="4" ry="8.5" transform="rotate(10 1360.5 648)" fill="#777" stroke="#f4f4f4" stroke-width="2.600"/>
<ellipse cx="1358.5" cy="696" rx="4" ry="8.5" fill="#777" stroke="#f4f4f4" stroke-width="2.600"/>
<path d="M1360 757 q3-7 9-4" stroke="#fff" stroke-width="3.500" fill="none" stroke-linecap="round"/>
<ellipse cx="1730" cy="629" rx="3.5" ry="10" transform="rotate(-14 1730 629)" fill="#777" stroke="#f4f4f4" stroke-width="2.600"/>
<ellipse cx="1741.5" cy="686" rx="3.5" ry="8.5" transform="rotate(-5 1741.5 686)" fill="#777" stroke="#f4f4f4" stroke-width="2.600"/>
<ellipse cx="1738" cy="746.5" rx="4.5" ry="8" transform="rotate(25 1738 746.5)" fill="#777" stroke="#f4f4f4" stroke-width="2.600"/>
<path d="M1424 938 Q1432 975 1446 1006" fill="none" stroke="#fff" stroke-width="13" stroke-linecap="round"/>
<path d="M1425 942 Q1433 977 1447 1008" fill="none" stroke="#9a9a9a" stroke-width="6" stroke-linecap="round"/>
<path d="M1709 926 Q1692 960 1677 1006" fill="none" stroke="#fff" stroke-width="13" stroke-linecap="round"/>
<path d="M1706 934 Q1691 964 1677 1010" fill="none" stroke="#8e8e8e" stroke-width="7" stroke-linecap="round"/>
</g></g>
<ellipse cx="1663" cy="621" rx="5" ry="1.5" transform="rotate(35 1663 621)" fill="#bbb"/>
<ellipse cx="1667" cy="639" rx="3" ry="1.2" transform="rotate(35 1667 639)" fill="#bbb"/>
<ellipse cx="1649" cy="634" rx="2" ry="1.5" fill="#bbb"/>
<ellipse cx="1700" cy="662" rx="2" ry="1" fill="#bbb"/>
<ellipse cx="1656" cy="646" rx="4" ry="0.8" transform="rotate(60 1656 646)" fill="#bbb"/>
</g>
<path d="M1451 641.5C1459.4 641.3 1468.3 644 1475.4 646.5C1482.5 649 1487.5 652.6 1493.6 656.6C1499.7 660.6 1506.7 667 1511.8 670.7C1516.9 674.4 1521 676.8 1524 678.8C1527 680.8 1529 680.2 1530 682.9C1531 685.6 1530.7 691 1530 695C1529.3 699 1527.7 702 1526 707C1524.3 712 1522.5 719.3 1519.8 725C1517.1 730.7 1513.4 736.6 1509.7 741.4C1506 746.1 1502 750 1497.6 753.5C1493.2 757 1489.5 759.7 1483.5 762.6C1477.5 765.5 1469 768 1461.3 770.7C1453.5 773.4 1444 775.7 1437 778.7C1430 781.7 1423.5 785.6 1419 788.8C1414.5 792 1413 794.8 1410 798C1407 801.2 1403.9 804 1400.7 808C1397.5 812 1393.6 817.8 1390.6 822C1387.6 826.2 1385.1 831.2 1382.6 833C1380.1 834.8 1376.7 838.5 1375.5 833C1374.3 827.5 1375.5 810.9 1375.5 800C1375.5 789.1 1375.7 778.4 1375.5 767.6C1375.3 756.8 1375.2 741.1 1374.5 735C1373.8 728.9 1372.3 734.3 1371.5 731C1370.7 727.7 1369.5 720 1369.5 715C1369.5 710 1370 705.7 1371.5 701C1373 696.3 1375.3 692 1378.5 687C1381.7 682 1385.9 675.8 1390.6 670.7C1395.3 665.6 1401.1 660.5 1406.8 656.6C1412.5 652.7 1417.6 650 1425 647.5C1432.4 645 1442.6 641.7 1451 641.5Z" fill="#3282d2" fill-opacity=".25"/>
<path d="M1452 642.4H1454.2H1456.4H1458.6H1460.8H1463H1465.2V644.6H1467.4H1469.6H1471.8H1474V646.8H1476.2H1478.4V649H1480.6H1482.8V651.2H1485H1487.2V653.4H1489.4H1491.6V655.6H1493.8V657.8H1496H1498.2V660H1500.4V662.2H1502.6V664.4H1504.8V666.6H1507H1509.2V668.8H1511.4V671H1513.6V673.2H1515.8H1518V675.4H1520.2V677.6H1522.4H1524.6V679.8H1526.8H1529V682H1531.2V684.2V686.4V688.6V690.8V693H1529V695.2V697.4V699.6V701.8H1526.8V704V706.2V708.4H1524.6V710.6V712.8V715H1522.4V717.2V719.4V721.6H1520.2V723.8V726H1518V728.2V730.4H1515.8V732.6V734.8H1513.6V737H1511.4V739.2H1509.2V741.4V743.6H1507V745.8H1504.8V748H1502.6V750.2H1500.4V752.4H1498.2V754.6H1496H1493.8V756.8H1491.6V759H1489.4H1487.2V761.2H1485V763.4H1482.8H1480.6H1478.4V765.6H1476.2H1474H1471.8V767.8H1469.6H1467.4V770H1465.2H1463H1460.8V772.2H1458.6H1456.4H1454.2H1452V774.4H1449.8H1447.6H1445.4V776.6H1443.2H1441H1438.8V778.8H1436.6H1434.4V781H1432.2H1430V783.2H1427.8H1425.6V785.4H1423.4H1421.2V787.6H1419V789.8H1416.8V792H1414.6V794.2H1412.4V796.4H1410.2V798.6H1408V800.8H1405.8V803H1403.6V805.2H1401.4V807.4H1399.2V809.6V811.8H1397V814H1394.8V816.2V818.4H1392.6V820.6H1390.4V822.8H1388.2V825V827.2H1386V829.4H1383.8V831.6V833.8H1381.6H1379.4V836H1377.2V833.8H1375V831.6V829.4V827.2V825V822.8V820.6V818.4V816.2V814V811.8V809.6V807.4V805.2V803V800.8V798.6V796.4V794.2V792V789.8V787.6V785.4V783.2V781V778.8V776.6V774.4V772.2V770V767.8V765.6V763.4V761.2V759V756.8V754.6V752.4V750.2V748V745.8V743.6V741.4V739.2V737V734.8V732.6H1372.8H1370.6V730.4V728.2V726V723.8V721.6V719.4V717.2V715H1368.4H1370.6V712.8V710.6V708.4V706.2V704V701.8V699.6H1372.8V697.4V695.2H1375V693V690.8H1377.2V688.6V686.4H1379.4V684.2H1381.6V682H1383.8V679.8V677.6H1386V675.4H1388.2V673.2H1390.4V671H1392.6V668.8H1394.8V666.6H1397V664.4H1399.2V662.2H1401.4V660H1403.6V657.8H1405.8V655.6H1408H1410.2V653.4H1412.4H1414.6V651.2H1416.8H1419V649H1421.2H1423.4V646.8H1425.6H1427.8H1430V644.6H1432.2H1434.4H1436.6H1438.8V642.4H1441H1443.2H1445.4H1447.6H1449.8H1452Z" fill="none" stroke="#2f80d6" stroke-width="1.100"/>
<path d="M1641 672.4C1643.8 671.4 1648.3 671.2 1651 672.8C1653.7 674.4 1653.9 679.4 1657 681.8C1660.1 684.2 1665.3 685.6 1669.4 687C1673.5 688.4 1677.5 688.7 1681.5 690C1685.5 691.3 1689.6 693.2 1693.6 695C1697.6 696.8 1702 698.3 1705.7 701C1709.4 703.7 1713.1 707.7 1715.8 711C1718.5 714.3 1720.2 716.6 1721.9 721C1723.6 725.4 1724.9 732.3 1725.9 737.4C1726.9 742.5 1727.7 747.8 1727.9 751.5C1728.1 755.2 1727.6 757.8 1726.9 759.6C1726.2 761.5 1725.9 762.1 1723.9 762.6C1721.9 763.1 1717.5 763.8 1714.8 762.6C1712.1 761.4 1709.7 758.4 1707.7 755.5C1705.7 752.6 1704 748.8 1702.7 745.4C1701.4 742 1701.9 737.5 1699.7 735.3C1697.5 733.1 1693 734 1689.6 732.3C1686.2 730.6 1682.9 727.2 1679.5 725C1676.1 722.8 1673.2 720.7 1669.4 719C1665.7 717.3 1661.1 716.3 1657 715C1652.9 713.7 1649 712 1645 711C1641 710 1635.8 710 1633 709C1630.2 708 1629 707.3 1628 705C1627 702.7 1626.8 698 1627 695C1627.2 692 1627.8 689.7 1629 687C1630.2 684.3 1632 681.2 1634 678.8C1636 676.4 1638.2 673.4 1641 672.4Z" fill="#c8304a" fill-opacity=".42"/>
<path d="M1641.2 673.2H1643.4V671H1645.6H1647.8H1650V673.2H1652.2V675.4H1654.4V677.6V679.8H1656.6V682H1658.8V684.2H1661H1663.2H1665.4V686.4H1667.6H1669.8H1672V688.6H1674.2H1676.4H1678.6H1680.8V690.8H1683H1685.2H1687.4V693H1689.6H1691.8V695.2H1694H1696.2V697.4H1698.4H1700.6H1702.8V699.6H1705V701.8H1707.2H1709.4V704H1711.6V706.2H1713.8V708.4V710.6H1716V712.8H1718.2V715H1720.4V717.2V719.4H1722.6V721.6V723.8V726H1724.8V728.2V730.4V732.6V734.8V737H1727V739.2V741.4V743.6V745.8V748V750.2V752.4V754.6V756.8V759V761.2H1724.8V763.4H1722.6H1720.4H1718.2H1716H1713.8V761.2H1711.6V759H1709.4V756.8H1707.2V754.6V752.4H1705V750.2V748H1702.8V745.8V743.6V741.4H1700.6V739.2V737V734.8H1698.4H1696.2V732.6H1694H1691.8H1689.6H1687.4V730.4H1685.2V728.2H1683V726H1680.8H1678.6V723.8H1676.4V721.6H1674.2H1672V719.4H1669.8H1667.6V717.2H1665.4H1663.2H1661V715H1658.8H1656.6H1654.4V712.8H1652.2H1650H1647.8V710.6H1645.6H1643.4H1641.2H1639H1636.8H1634.6V708.4H1632.4H1630.2V706.2H1628V704V701.8V699.6V697.4V695.2V693V690.8V688.6V686.4H1630.2V684.2V682H1632.4V679.8H1634.6V677.6H1636.8V675.4H1639V673.2H1641.2Z" fill="none" stroke="#e8102c" stroke-width="1.200"/>
<path d="M1686 718h12v2h-12z" fill="none" stroke="#e8102c" stroke-width=".8"/>
<text x="1234.500" y="980" font-family="Liberation Serif,serif" font-size="14" fill="#fff">B: liver_102</text>
</svg></div>
</div>
<!-- BOTTOM -->
<div class="btn" style="left:1887px;top:1007px;width:31px;height:31px;border-radius:3px;border-color:#b5b5b5;background:#fdfdfd"><svg style="left:3px;top:3px" width="24" height="24" viewBox="0 0 24 24"><circle cx="12" cy="12" r="11" fill="#9b9b9b"/><path d="M6.500 6.500l11 11M17.500 6.500l-11 11" stroke="#fff" stroke-width="1.600"/></svg></div>
</body></html>
